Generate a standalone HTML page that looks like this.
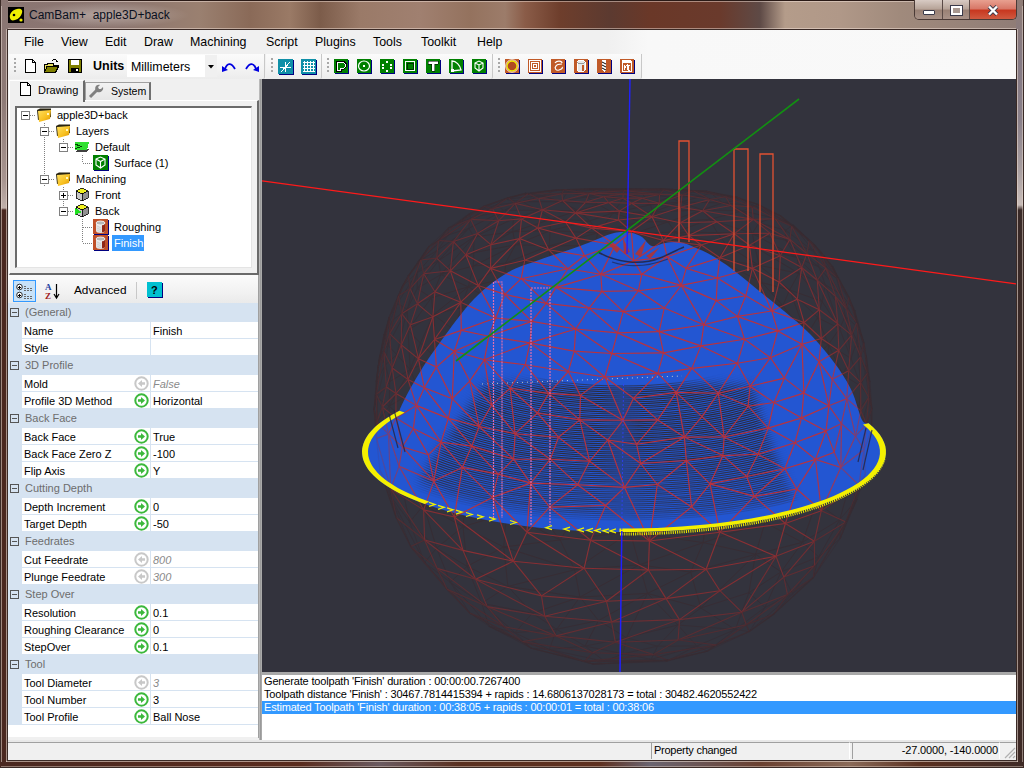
<!DOCTYPE html>
<html><head><meta charset="utf-8">
<style>
*{box-sizing:border-box}
html,body{margin:0;padding:0;width:1024px;height:768px;overflow:hidden;font-family:"Liberation Sans",sans-serif}
body{position:relative;background:#5a3528}
.a{position:absolute}
.t{position:absolute;white-space:pre;line-height:1}
svg.a{overflow:hidden}
</style></head><body>
<div class="a" style="left:0;top:0;width:1024px;height:30px;background:linear-gradient(90deg,#8a7572 0px,#8c7670 120px,#9a8070 200px,#8a6a58 250px,#9a7a66 290px,#7c5c4a 320px,#9a7a68 360px,#a08070 420px,#94725e 470px,#9c7c6a 505px,#8a5c48 525px,#6e3e2c 560px,#5c3a30 610px,#6a3828 650px,#6a3a2c 720px,#5e4a46 760px,#b49c8a 785px,#b09888 840px,#a08a7c 900px,#8f7c76 1024px)"></div>
<div class="a" style="left:0;top:0;width:1024px;height:1px;background:#2a1a16"></div>
<div class="a" style="left:8px;top:1px;width:1008px;height:1px;background:rgba(255,240,230,0.45)"></div>
<div class="a" style="left:8px;top:28px;width:1008px;height:1px;background:rgba(255,240,230,0.45)"></div>
<div class="a" style="left:20px;top:2px;width:170px;height:26px;background:radial-gradient(ellipse at center,rgba(255,250,245,0.35),rgba(255,250,245,0) 70%)"></div>
<div class="a" style="left:0;top:0;width:8px;height:768px;background:linear-gradient(180deg,#8a7572 0,#8e7a76 100px,#a89590 180px,#c0b0aa 208px,#4a2820 210px,#4a2820 768px)"></div>
<div class="a" style="left:0;top:0;width:1px;height:768px;background:#3a2a26"></div>
<div class="a" style="left:1016px;top:0;width:8px;height:768px;background:linear-gradient(180deg,#8f7c76 0,#857a84 60px,#8a808a 120px,#a89ea0 170px,#c8bcb8 205px,#3a2a28 210px,#3e2a26 768px)"></div>
<div class="a" style="left:1023px;top:0;width:1px;height:768px;background:#3a2a26"></div>
<div class="a" style="left:0;top:760px;width:1024px;height:8px;background:linear-gradient(90deg,#4a2820 0,#5a2c1e 300px,#6a5a60 380px,#5a3020 460px,#5e3020 600px,#6a6470 650px,#6a4030 760px,#8a6a58 850px,#5a3020 920px,#3e2a26 1024px)"></div>
<div class="a" style="left:0;top:767px;width:1024px;height:1px;background:#3a2a26"></div>
<div class="a" style="left:1px;top:6px;width:1px;height:756px;background:rgba(230,215,205,0.55)"></div>
<div class="a" style="left:6px;top:29px;width:1px;height:733px;background:rgba(230,215,205,0.6)"></div>
<div class="a" style="left:1017px;top:29px;width:1px;height:733px;background:rgba(230,215,205,0.6)"></div>
<div class="a" style="left:1022px;top:6px;width:1px;height:756px;background:rgba(230,215,205,0.5)"></div>
<div class="a" style="left:6px;top:761px;width:1012px;height:1px;background:rgba(230,215,205,0.6)"></div>
<div class="a" style="left:1px;top:766px;width:1022px;height:1px;background:rgba(230,215,205,0.45)"></div>
<svg class="a" style="left:8px;top:7px" width="16" height="16" viewBox="0 0 16 16"><rect width="16" height="16" fill="#000"/><path d="M2,11 C1,7 4,3 9,2 C13,1 15,3 14,6 C13,9 11,12 7,13 C4,14 2.5,13 2,11Z" fill="#f0f000"/><circle cx="6" cy="8" r="1.3" fill="#000"/><circle cx="13" cy="13" r="1.6" fill="#f0f000"/></svg>
<div class="t" style="left:29px;top:8.59px;font-size:12px;color:#0a1020;">CamBam+  apple3D+back</div>
<div class="a" style="left:914px;top:0;width:103px;height:20px;border:1px solid #4a3a36;border-top:none;border-radius:0 0 5px 5px;overflow:hidden"><div class="a" style="left:0;top:0;width:27px;height:19px;background:linear-gradient(180deg,#d8cbc4,#b8a59a 45%,#9a8276 55%,#a89288)"></div><div class="a" style="left:27px;top:0;width:1px;height:19px;background:#5a4a46"></div><div class="a" style="left:28px;top:0;width:26px;height:19px;background:linear-gradient(180deg,#d8cbc4,#b8a59a 45%,#9a8276 55%,#a89288)"></div><div class="a" style="left:54px;top:0;width:1px;height:19px;background:#5a4a46"></div><div class="a" style="left:55px;top:0;width:48px;height:19px;background:linear-gradient(180deg,#e8a090,#d87868 45%,#c83820 55%,#d05a40)"></div></div>
<div class="a" style="left:923px;top:10px;width:12px;height:5px;background:#fff;border:1px solid #3a3a4a;border-radius:1px"></div>
<div class="a" style="left:951px;top:6px;width:11px;height:9px;border:2px solid #fff;outline:1px solid #3a3a4a;background:#a89890"></div>
<svg class="a" style="left:986px;top:5px" width="14" height="11" viewBox="0 0 14 11"><path d="M3,1.5 L11,9.5 M11,1.5 L3,9.5" stroke="#3a3a4a" stroke-width="4"/><path d="M3,1.5 L11,9.5 M11,1.5 L3,9.5" stroke="#fff" stroke-width="2.4"/></svg>
<div class="a" style="left:7px;top:29px;width:1010px;height:732px;border:1px solid #3a2a26;background:#f0f0f0"></div>
<div class="a" style="left:8px;top:30px;width:1008px;height:23px;background:linear-gradient(90deg,#f0f0f0 0,#f0f0f0 600px,#f8f8f8 640px,#f9f9f9)"></div>
<div class="t" style="left:24px;top:35.54px;font-size:12.4px;color:#000;">File</div>
<div class="t" style="left:61px;top:35.54px;font-size:12.4px;color:#000;">View</div>
<div class="t" style="left:105px;top:35.54px;font-size:12.4px;color:#000;">Edit</div>
<div class="t" style="left:144px;top:35.54px;font-size:12.4px;color:#000;">Draw</div>
<div class="t" style="left:190px;top:35.54px;font-size:12.4px;color:#000;">Machining</div>
<div class="t" style="left:266px;top:35.54px;font-size:12.4px;color:#000;">Script</div>
<div class="t" style="left:315px;top:35.54px;font-size:12.4px;color:#000;">Plugins</div>
<div class="t" style="left:373px;top:35.54px;font-size:12.4px;color:#000;">Tools</div>
<div class="t" style="left:421px;top:35.54px;font-size:12.4px;color:#000;">Toolkit</div>
<div class="t" style="left:477px;top:35.54px;font-size:12.4px;color:#000;">Help</div>
<div class="a" style="left:8px;top:53px;width:1008px;height:26px;background:linear-gradient(90deg,#f0f0f0 0,#f0f0f0 600px,#f8f8f8 640px,#f9f9f9)"></div>
<div class="a" style="left:9px;top:54px;width:256px;height:25px;background:linear-gradient(180deg,#fbfbfb,#f3f3f3 60%,#ececec);border-right:1px solid #c8c8c8;border-radius:0 0 2px 0"></div>
<div class="a" style="left:14px;top:58px;width:2px;height:2px;background:#a8a8a8"></div>
<div class="a" style="left:14px;top:62px;width:2px;height:2px;background:#a8a8a8"></div>
<div class="a" style="left:14px;top:66px;width:2px;height:2px;background:#a8a8a8"></div>
<div class="a" style="left:14px;top:70px;width:2px;height:2px;background:#a8a8a8"></div>
<div class="a" style="left:266px;top:54px;width:56px;height:25px;background:linear-gradient(180deg,#fbfbfb,#f3f3f3 60%,#ececec);border-right:1px solid #c8c8c8;border-radius:0 0 2px 0"></div>
<div class="a" style="left:271px;top:58px;width:2px;height:2px;background:#a8a8a8"></div>
<div class="a" style="left:271px;top:62px;width:2px;height:2px;background:#a8a8a8"></div>
<div class="a" style="left:271px;top:66px;width:2px;height:2px;background:#a8a8a8"></div>
<div class="a" style="left:271px;top:70px;width:2px;height:2px;background:#a8a8a8"></div>
<div class="a" style="left:322px;top:54px;width:171px;height:25px;background:linear-gradient(180deg,#fbfbfb,#f3f3f3 60%,#ececec);border-right:1px solid #c8c8c8;border-radius:0 0 2px 0"></div>
<div class="a" style="left:327px;top:58px;width:2px;height:2px;background:#a8a8a8"></div>
<div class="a" style="left:327px;top:62px;width:2px;height:2px;background:#a8a8a8"></div>
<div class="a" style="left:327px;top:66px;width:2px;height:2px;background:#a8a8a8"></div>
<div class="a" style="left:327px;top:70px;width:2px;height:2px;background:#a8a8a8"></div>
<div class="a" style="left:493px;top:54px;width:149px;height:25px;background:linear-gradient(180deg,#fbfbfb,#f3f3f3 60%,#ececec);border-right:1px solid #c8c8c8;border-radius:0 0 2px 0"></div>
<div class="a" style="left:498px;top:58px;width:2px;height:2px;background:#a8a8a8"></div>
<div class="a" style="left:498px;top:62px;width:2px;height:2px;background:#a8a8a8"></div>
<div class="a" style="left:498px;top:66px;width:2px;height:2px;background:#a8a8a8"></div>
<div class="a" style="left:498px;top:70px;width:2px;height:2px;background:#a8a8a8"></div>
<svg class="a" style="left:23px;top:58px" width="16" height="16" viewBox="0 0 16 16" shape-rendering="crispEdges"><path d="M2.5,1.5 H9.5 L12.5,4.5 V14.5 H2.5 Z" fill="#fff" stroke="#000"/><path d="M9.5,1.5 V4.5 H12.5" fill="none" stroke="#000"/></svg>
<svg class="a" style="left:43px;top:58px" width="16" height="16" viewBox="0 0 16 16" shape-rendering="crispEdges"><path d="M1.5,6.5 H4 L5,5 H10 V7.5 H15 L12,14.5 H1.5 Z" fill="#e8e060" stroke="#000"/><path d="M1.5,14.5 L4,8.5 H15.5 L12.5,14.5 Z" fill="#808000" stroke="#000"/><path d="M9,3 C10,1 13,1 14,3" fill="none" stroke="#000"/><path d="M13,3 h2 l-1,2z" fill="#000"/></svg>
<svg class="a" style="left:67px;top:58px" width="16" height="16" viewBox="0 0 16 16" shape-rendering="crispEdges"><rect x="1.5" y="1.5" width="13" height="13" fill="#808000" stroke="#000"/><rect x="4" y="2" width="8" height="5" fill="#fff"/><rect x="4" y="10" width="8" height="4" fill="#000"/><rect x="9" y="11" width="2" height="2" fill="#fff"/></svg>
<div class="t" style="left:93px;top:60.03px;font-size:12.5px;color:#000;font-weight:bold">Units</div>
<div class="a" style="left:127px;top:55px;width:90px;height:22px;background:#fff"></div>
<div class="a" style="left:205px;top:55px;width:12px;height:22px;background:#f0f0f0"></div>
<svg class="a" style="left:208px;top:65px" width="6" height="4"><path d="M0,0 H6 L3,3.5Z" fill="#000"/></svg>
<div class="t" style="left:131px;top:60.54px;font-size:12.4px;color:#000;">Millimeters</div>
<svg class="a" style="left:221px;top:58px" width="16" height="16" viewBox="0 0 16 16" shape-rendering="crispEdges"><path d="M4,11 C6,5 10,4 14,11" fill="none" stroke="#0000e0" stroke-width="1.8" shape-rendering="auto"/><path d="M1,8 L7,12 L1,14 Z" fill="#0000e0" shape-rendering="auto"/></svg>
<svg class="a" style="left:244px;top:58px" width="16" height="16" viewBox="0 0 16 16" shape-rendering="crispEdges"><path d="M12,11 C10,5 6,4 2,11" fill="none" stroke="#0000e0" stroke-width="1.8" shape-rendering="auto"/><path d="M15,8 L9,12 L15,14 Z" fill="#0000e0" shape-rendering="auto"/></svg>
<svg class="a" style="left:278px;top:59px" width="16" height="16" viewBox="0 0 16 16" shape-rendering="crispEdges"><rect x="1" y="1" width="15" height="15" fill="#000080"/><rect x="0" y="0" width="15" height="15" fill="#1090a8"/><path d="M7.5,3 V13 M2,8.5 H13 M3,13 L12,3" stroke="#fff" fill="none"/></svg>
<svg class="a" style="left:301px;top:59px" width="16" height="16" viewBox="0 0 16 16" shape-rendering="crispEdges"><rect x="1" y="1" width="15" height="15" fill="#000080"/><rect x="0" y="0" width="15" height="15" fill="#1090a8"/><path d="M3.5,2 V13 M6.5,2 V13 M9.5,2 V13 M12.5,2 V13 M2,3.5 H14 M2,6.5 H14 M2,9.5 H14 M2,12.5 H14" stroke="#fff" fill="none"/></svg>
<svg class="a" style="left:334px;top:59px" width="16" height="16" viewBox="0 0 16 16" shape-rendering="crispEdges"><rect x="1" y="1" width="14" height="14" fill="#000080"/><rect x="0" y="0" width="14" height="14" fill="#008000"/><path d="M2.5,2.5 H10 L12,4.5 V8 L10,10 H7 V12.5 H2.5 Z" fill="#fff" stroke="#000"/><path d="M4,4 H9.5 L10.5,5 V7.5 L9.5,8.5 H5.5 V11 H4 Z" fill="#008000"/></svg>
<svg class="a" style="left:357px;top:59px" width="16" height="16" viewBox="0 0 16 16" shape-rendering="crispEdges"><rect x="1" y="1" width="14" height="14" fill="#000080"/><rect x="0" y="0" width="14" height="14" fill="#008000"/><ellipse cx="7" cy="7" rx="5.5" ry="5" fill="none" stroke="#fff" stroke-width="1.2" shape-rendering="auto"/><rect x="6" y="6" width="2" height="2" fill="#fff"/></svg>
<svg class="a" style="left:380px;top:59px" width="16" height="16" viewBox="0 0 16 16" shape-rendering="crispEdges"><rect x="1" y="1" width="14" height="14" fill="#000080"/><rect x="0" y="0" width="14" height="14" fill="#008000"/><g fill="#fff"><rect x="6" y="2" width="2" height="2"/><rect x="2" y="5" width="2" height="2"/><rect x="10" y="5" width="2" height="2"/><rect x="2" y="8" width="2" height="2"/><rect x="10" y="8" width="2" height="2"/><rect x="6" y="11" width="2" height="2"/></g></svg>
<svg class="a" style="left:403px;top:59px" width="16" height="16" viewBox="0 0 16 16" shape-rendering="crispEdges"><rect x="1" y="1" width="14" height="14" fill="#000080"/><rect x="0" y="0" width="14" height="14" fill="#008000"/><rect x="2.5" y="2.5" width="9" height="9" fill="none" stroke="#fff" stroke-width="1.5"/><rect x="4" y="4" width="6" height="6" fill="none" stroke="#000" stroke-width="0.6"/></svg>
<svg class="a" style="left:426px;top:59px" width="16" height="16" viewBox="0 0 16 16" shape-rendering="crispEdges"><rect x="1" y="1" width="14" height="14" fill="#000080"/><rect x="0" y="0" width="14" height="14" fill="#008000"/><path d="M2,2 H12 V5 H8.5 V12 H5.5 V5 H2 Z" fill="#fff" stroke="#000" stroke-width="0.5"/></svg>
<svg class="a" style="left:449px;top:59px" width="16" height="16" viewBox="0 0 16 16" shape-rendering="crispEdges"><rect x="1" y="1" width="14" height="14" fill="#000080"/><rect x="0" y="0" width="14" height="14" fill="#008000"/><path d="M3,12 V2 C7,2 11,6 12,11 Z" fill="none" stroke="#fff" stroke-width="1.3" shape-rendering="auto"/><rect x="2" y="10" width="3" height="3" fill="#fff"/></svg>
<svg class="a" style="left:472px;top:59px" width="16" height="16" viewBox="0 0 16 16" shape-rendering="crispEdges"><rect x="1" y="1" width="14" height="14" fill="#000080"/><rect x="0" y="0" width="14" height="14" fill="#008000"/><path d="M3,4 L7,2 L11,4 V9 L7,12 L3,9 Z M3,4 L7,6 L11,4 M7,6 V12" fill="none" stroke="#fff" stroke-width="1.1" shape-rendering="auto"/></svg>
<svg class="a" style="left:505px;top:59px" width="16" height="16" viewBox="0 0 16 16" shape-rendering="crispEdges"><rect x="1" y="1" width="14" height="14" fill="#000080"/><rect x="0" y="0" width="14" height="14" fill="#c05a28"/><circle cx="7" cy="7" r="5" fill="#b04a20" stroke="#f0f000" stroke-width="1.3" shape-rendering="auto"/><circle cx="7" cy="7" r="6.3" fill="none" stroke="#fff" stroke-width="0.8" shape-rendering="auto"/></svg>
<svg class="a" style="left:528px;top:59px" width="16" height="16" viewBox="0 0 16 16" shape-rendering="crispEdges"><rect x="1" y="1" width="14" height="14" fill="#000080"/><rect x="0" y="0" width="14" height="14" fill="#c05a28"/><rect x="1.5" y="1.5" width="11" height="11" fill="none" stroke="#fff"/><rect x="3.5" y="3.5" width="7" height="7" fill="none" stroke="#fff"/><rect x="5.5" y="5.5" width="3" height="3" fill="none" stroke="#fff"/></svg>
<svg class="a" style="left:551px;top:59px" width="16" height="16" viewBox="0 0 16 16" shape-rendering="crispEdges"><rect x="1" y="1" width="14" height="14" fill="#000080"/><rect x="0" y="0" width="14" height="14" fill="#c05a28"/><path d="M4,4 C6,1 11,2 11,4 M11,5 C9,5 6,5 5,7 C3,9 5,12 8,11 C11,10 12,9 11,8" fill="none" stroke="#fff" stroke-width="1.2" shape-rendering="auto"/></svg>
<svg class="a" style="left:574px;top:59px" width="16" height="16" viewBox="0 0 16 16" shape-rendering="crispEdges"><rect x="1" y="1" width="14" height="14" fill="#000080"/><rect x="0" y="0" width="14" height="14" fill="#c05a28"/><path d="M3,3 C3,1 11,1 11,3 V11 C11,13 3,13 3,11 Z" fill="#e8e8e8" stroke="#fff"/><path d="M3,3 C3,5 11,5 11,3" fill="none" stroke="#999"/><path d="M9,6 V12" stroke="#c05a28" stroke-width="2"/></svg>
<svg class="a" style="left:597px;top:59px" width="16" height="16" viewBox="0 0 16 16" shape-rendering="crispEdges"><rect x="1" y="1" width="14" height="14" fill="#000080"/><rect x="0" y="0" width="14" height="14" fill="#c05a28"/><path d="M5,1 H9 V11 L7,13 L5,11 Z" fill="#fff"/><path d="M5,3 L9,5 M5,6 L9,8 M5,9 L9,11" stroke="#000" stroke-width="1" shape-rendering="auto"/></svg>
<svg class="a" style="left:620px;top:59px" width="16" height="16" viewBox="0 0 16 16" shape-rendering="crispEdges"><rect x="1" y="1" width="14" height="14" fill="#000080"/><rect x="0" y="0" width="14" height="14" fill="#c05a28"/><path d="M2,1 H10 L12,3 V13 H2 Z" fill="#fff"/><rect x="3" y="4" width="8" height="8" fill="#c05a28"/><path d="M4,11 V6 L5.5,8 L7,6 V11 M10,6 H8.5 V11 H10" stroke="#fff" fill="none"/></svg>
<div class="a" style="left:85px;top:82px;width:66px;height:19px;background:linear-gradient(180deg,#f2f2f2,#e6e6e6);border:1px solid #a0a0a0;border-bottom:none;border-right:2px solid #707070"></div>
<div class="a" style="left:9px;top:100px;width:250px;height:175px;background:#f0f0f0;border-top:1px solid #fff;border-left:1px solid #fff;border-right:2px solid #6a6a6a;border-bottom:2px solid #6a6a6a"></div>
<div class="a" style="left:9px;top:80px;width:76px;height:22px;background:#f0f0f0;border-top:1px solid #fff;border-left:1px solid #fff;border-right:2px solid #6a6a6a"></div>
<svg class="a" style="left:18px;top:81px" width="16" height="16" viewBox="0 0 16 16" shape-rendering="crispEdges"><path d="M2.5,1.5 H9.5 L12.5,4.5 V14.5 H2.5 Z" fill="#fff" stroke="#000"/><path d="M9.5,1.5 V4.5 H12.5" fill="none" stroke="#000"/></svg>
<div class="t" style="left:38px;top:84.51px;font-size:11px;color:#000;">Drawing</div>
<svg class="a" style="left:88px;top:83px" width="16" height="16" viewBox="0 0 16 16" shape-rendering="crispEdges"><path d="M2,14 L9,7" stroke="#808080" stroke-width="3" shape-rendering="auto"/><path d="M8,8 C6,5 8,1 12,2 L10,4 L11,6 L13,6 L15,4 C16,8 12,10 9,9 Z" fill="#808080" shape-rendering="auto"/></svg>
<div class="t" style="left:111px;top:86.35px;font-size:10.6px;color:#000;">System</div>
<div class="a" style="left:15px;top:106px;width:237px;height:162px;background:#fff;border-top:2px solid #6a6a6a;border-left:2px solid #6a6a6a;border-right:1px solid #e4e4e4;border-bottom:1px solid #e4e4e4"></div>
<div class="a" style="left:44px;top:123px;width:1px;height:64px;background:repeating-linear-gradient(180deg,#808080 0 1px,transparent 1px 2px)"></div>
<div class="a" style="left:63px;top:139px;width:1px;height:5px;background:repeating-linear-gradient(180deg,#808080 0 1px,transparent 1px 2px)"></div>
<div class="a" style="left:82px;top:155px;width:1px;height:8px;background:repeating-linear-gradient(180deg,#808080 0 1px,transparent 1px 2px)"></div>
<div class="a" style="left:63px;top:187px;width:1px;height:24px;background:repeating-linear-gradient(180deg,#808080 0 1px,transparent 1px 2px)"></div>
<div class="a" style="left:82px;top:219px;width:1px;height:24px;background:repeating-linear-gradient(180deg,#808080 0 1px,transparent 1px 2px)"></div>
<svg class="a" style="left:21px;top:111px" width="9" height="9" viewBox="0 0 9 9" shape-rendering="crispEdges"><rect x="0.5" y="0.5" width="8" height="8" fill="#fff" stroke="#808080"/><path d="M2,4.5 H7" stroke="#000"/></svg>
<div class="a" style="left:30px;top:115px;width:6px;height:1px;background:repeating-linear-gradient(90deg,#808080 0 1px,transparent 1px 2px)"></div>
<svg class="a" style="left:36px;top:107px" width="16" height="16" viewBox="0 0 16 16" shape-rendering="crispEdges"><defs><linearGradient id="fg0" x1="0" y1="0" x2="1" y2="1"><stop offset="0" stop-color="#ffe060"/><stop offset="0.6" stop-color="#f8c020"/><stop offset="1" stop-color="#d89000"/></linearGradient></defs><path d="M1,3 L4,1.5 L15,1.5 L15,10 L2,13 Z" fill="#2a2410" shape-rendering="auto"/><path d="M2,4 L15,3 L14,12 L3,15 Z" fill="url(#fg0)" shape-rendering="auto"/><circle cx="12" cy="7" r="1" fill="#fff8c0"/></svg>
<div class="t" style="left:57px;top:109.71px;font-size:11px;color:#000;">apple3D+back</div>
<svg class="a" style="left:40px;top:127px" width="9" height="9" viewBox="0 0 9 9" shape-rendering="crispEdges"><rect x="0.5" y="0.5" width="8" height="8" fill="#fff" stroke="#808080"/><path d="M2,4.5 H7" stroke="#000"/></svg>
<div class="a" style="left:49px;top:131px;width:6px;height:1px;background:repeating-linear-gradient(90deg,#808080 0 1px,transparent 1px 2px)"></div>
<svg class="a" style="left:55px;top:123px" width="16" height="16" viewBox="0 0 16 16" shape-rendering="crispEdges"><defs><linearGradient id="fg1" x1="0" y1="0" x2="1" y2="1"><stop offset="0" stop-color="#ffe060"/><stop offset="0.6" stop-color="#f8c020"/><stop offset="1" stop-color="#d89000"/></linearGradient></defs><path d="M1,3 L4,1.5 L15,1.5 L15,10 L2,13 Z" fill="#2a2410" shape-rendering="auto"/><path d="M2,4 L15,3 L14,12 L3,15 Z" fill="url(#fg1)" shape-rendering="auto"/><circle cx="12" cy="7" r="1" fill="#fff8c0"/></svg>
<div class="t" style="left:76px;top:125.71px;font-size:11px;color:#000;">Layers</div>
<svg class="a" style="left:59px;top:143px" width="9" height="9" viewBox="0 0 9 9" shape-rendering="crispEdges"><rect x="0.5" y="0.5" width="8" height="8" fill="#fff" stroke="#808080"/><path d="M2,4.5 H7" stroke="#000"/></svg>
<div class="a" style="left:68px;top:147px;width:6px;height:1px;background:repeating-linear-gradient(90deg,#808080 0 1px,transparent 1px 2px)"></div>
<svg class="a" style="left:74px;top:139px" width="16" height="16" viewBox="0 0 16 16" shape-rendering="crispEdges"><path d="M1,13 L4,10 H15 L12,13 Z" fill="#404040"/><path d="M1,3 H15 L13,11 H1 Z" fill="#30e030"/><path d="M1,5 L7,7.5 L1,10" fill="none" stroke="#004000"/></svg>
<div class="t" style="left:95px;top:141.71px;font-size:11px;color:#000;">Default</div>
<div class="a" style="left:83px;top:163px;width:10px;height:1px;background:repeating-linear-gradient(90deg,#808080 0 1px,transparent 1px 2px)"></div>
<svg class="a" style="left:93px;top:155px" width="16" height="16" viewBox="0 0 16 16" shape-rendering="crispEdges"><rect x="1" y="1" width="15" height="15" fill="#000080"/><rect x="0" y="0" width="15" height="15" fill="#008000"/><path d="M3,4 L7.5,2 L12,4 V10 L7.5,13 L3,10 Z M3,4 L7.5,6.5 L12,4 M7.5,6.5 V13" fill="none" stroke="#fff" stroke-width="1.1" shape-rendering="auto"/></svg>
<div class="t" style="left:114px;top:157.71px;font-size:11px;color:#000;">Surface (1)</div>
<svg class="a" style="left:40px;top:175px" width="9" height="9" viewBox="0 0 9 9" shape-rendering="crispEdges"><rect x="0.5" y="0.5" width="8" height="8" fill="#fff" stroke="#808080"/><path d="M2,4.5 H7" stroke="#000"/></svg>
<div class="a" style="left:49px;top:179px;width:6px;height:1px;background:repeating-linear-gradient(90deg,#808080 0 1px,transparent 1px 2px)"></div>
<svg class="a" style="left:55px;top:171px" width="16" height="16" viewBox="0 0 16 16" shape-rendering="crispEdges"><defs><linearGradient id="fg4" x1="0" y1="0" x2="1" y2="1"><stop offset="0" stop-color="#ffe060"/><stop offset="0.6" stop-color="#f8c020"/><stop offset="1" stop-color="#d89000"/></linearGradient></defs><path d="M1,3 L4,1.5 L15,1.5 L15,10 L2,13 Z" fill="#2a2410" shape-rendering="auto"/><path d="M2,4 L15,3 L14,12 L3,15 Z" fill="url(#fg4)" shape-rendering="auto"/><circle cx="12" cy="7" r="1" fill="#fff8c0"/></svg>
<div class="t" style="left:76px;top:173.71px;font-size:11px;color:#000;">Machining</div>
<svg class="a" style="left:59px;top:191px" width="9" height="9" viewBox="0 0 9 9" shape-rendering="crispEdges"><rect x="0.5" y="0.5" width="8" height="8" fill="#fff" stroke="#808080"/><path d="M2,4.5 H7" stroke="#000"/><path d="M4.5,2 V7" stroke="#000"/></svg>
<div class="a" style="left:68px;top:195px;width:6px;height:1px;background:repeating-linear-gradient(90deg,#808080 0 1px,transparent 1px 2px)"></div>
<svg class="a" style="left:74px;top:187px" width="16" height="16" viewBox="0 0 16 16" shape-rendering="crispEdges"><path d="M2,4 L8,1 L14,4 L8,7 Z" fill="#f0f020" stroke="#000" stroke-width="0.8"/><path d="M2,4 L8,7 V14 L2,11 Z" fill="#c8c8c8" stroke="#000" stroke-width="0.8"/><path d="M8,7 L14,4 V11 L8,14 Z" fill="#909090" stroke="#000" stroke-width="0.8"/></svg>
<div class="t" style="left:95px;top:189.71px;font-size:11px;color:#000;">Front</div>
<svg class="a" style="left:59px;top:207px" width="9" height="9" viewBox="0 0 9 9" shape-rendering="crispEdges"><rect x="0.5" y="0.5" width="8" height="8" fill="#fff" stroke="#808080"/><path d="M2,4.5 H7" stroke="#000"/></svg>
<div class="a" style="left:68px;top:211px;width:6px;height:1px;background:repeating-linear-gradient(90deg,#808080 0 1px,transparent 1px 2px)"></div>
<svg class="a" style="left:74px;top:203px" width="16" height="16" viewBox="0 0 16 16" shape-rendering="crispEdges"><path d="M2,4 L8,1 L14,4 L8,7 Z" fill="#f0f020" stroke="#000" stroke-width="0.8"/><path d="M2,4 L8,7 V14 L2,11 Z" fill="#c8c8c8" stroke="#000" stroke-width="0.8"/><path d="M8,7 L14,4 V11 L8,14 Z" fill="#909090" stroke="#000" stroke-width="0.8"/><path d="M1,5 L8,9 L1,12 Z" fill="#20e020"/></svg>
<div class="t" style="left:95px;top:205.71px;font-size:11px;color:#000;">Back</div>
<div class="a" style="left:83px;top:227px;width:10px;height:1px;background:repeating-linear-gradient(90deg,#808080 0 1px,transparent 1px 2px)"></div>
<svg class="a" style="left:93px;top:219px" width="16" height="16" viewBox="0 0 16 16" shape-rendering="crispEdges"><rect x="1" y="1" width="15" height="15" fill="#000080"/><rect x="0" y="0" width="15" height="15" fill="#c05028"/><g shape-rendering="auto"><path d="M3,4 V12 C3,14.5 12,14.5 12,12 V4 Z" fill="#e4e4e4"/><path d="M9,5 V13.3 C11,13 12,12.6 12,12 V4 Z" fill="#902818"/><ellipse cx="7.5" cy="4" rx="4.5" ry="2" fill="#b8b8b8" stroke="#fff" stroke-width="0.8"/><path d="M4,7 L8,9 M4,9 L8,11 M4,11 L8,13" stroke="#c8c8c8" stroke-width="0.7"/></g></svg>
<div class="t" style="left:114px;top:221.71px;font-size:11px;color:#000;">Roughing</div>
<div class="a" style="left:83px;top:243px;width:10px;height:1px;background:repeating-linear-gradient(90deg,#808080 0 1px,transparent 1px 2px)"></div>
<svg class="a" style="left:93px;top:235px" width="16" height="16" viewBox="0 0 16 16" shape-rendering="crispEdges"><rect x="1" y="1" width="15" height="15" fill="#000080"/><rect x="0" y="0" width="15" height="15" fill="#c05028"/><g shape-rendering="auto"><path d="M3,4 V12 C3,14.5 12,14.5 12,12 V4 Z" fill="#e4e4e4"/><path d="M9,5 V13.3 C11,13 12,12.6 12,12 V4 Z" fill="#902818"/><ellipse cx="7.5" cy="4" rx="4.5" ry="2" fill="#b8b8b8" stroke="#fff" stroke-width="0.8"/><path d="M4,7 L8,9 M4,9 L8,11 M4,11 L8,13" stroke="#c8c8c8" stroke-width="0.7"/></g></svg>
<div class="a" style="left:112px;top:235px;width:32px;height:16px;background:#3399ff"></div>
<div class="t" style="left:114px;top:237.71px;font-size:11px;color:#fff;">Finish</div>
<div class="a" style="left:8px;top:275px;width:251px;height:28px;background:linear-gradient(180deg,#fbfbfb,#f2f2f2 60%,#eaeaea)"></div>
<div class="a" style="left:13px;top:280px;width:23px;height:22px;background:#c8e2f8;border:1px solid #3399ff"></div>
<svg class="a" style="left:16px;top:283px" width="17" height="17" viewBox="0 0 17 17" shape-rendering="crispEdges"><g shape-rendering="auto"><circle cx="3.5" cy="4" r="2.8" fill="#fff" stroke="#000" stroke-width="0.8"/><circle cx="3.5" cy="12" r="2.8" fill="#fff" stroke="#000" stroke-width="0.8"/></g><path d="M2,4 H5 M3.5,2.5 V5.5 M2,12 H5 M3.5,10.5 V13.5" stroke="#000"/><path d="M8,3 H11 M8,5 H16 M8,7 H16 M8,11 H11 M8,13 H16 M8,15 H16" stroke="#6a6a6a" stroke-dasharray="2,1"/></svg>
<svg class="a" style="left:44px;top:282px" width="17" height="19" viewBox="0 0 17 19" shape-rendering="crispEdges"><text x="1" y="8" font-family="Liberation Serif" font-size="9" font-weight="bold" fill="#2040a0">A</text><text x="1" y="17" font-family="Liberation Serif" font-size="9" font-weight="bold" fill="#a02020">Z</text><path d="M12.5,2 V15 M10,12 L12.5,16 L15,12" fill="none" stroke="#000" stroke-width="1.2" shape-rendering="auto"/></svg>
<div class="t" style="left:74px;top:285.11px;font-size:11.8px;color:#000;">Advanced</div>
<div class="a" style="left:136px;top:282px;width:1px;height:17px;background:#c8c8c8"></div>
<svg class="a" style="left:147px;top:282px" width="17" height="17" viewBox="0 0 17 17" shape-rendering="crispEdges"><rect x="1" y="1" width="15" height="15" fill="#000080"/><rect x="0" y="0" width="15" height="15" fill="#00c0d0"/><text x="4" y="12" font-family="Liberation Sans" font-size="11" font-weight="bold" fill="#000">?</text></svg>
<div class="a" style="left:8px;top:303px;width:251px;height:435px;background:#fff"></div>
<div class="a" style="left:8px;top:303px;width:14px;height:422px;background:#d6e3f1"></div>
<div class="a" style="left:8px;top:303px;width:251px;height:19px;background:#d6e3f1"></div>
<svg class="a" style="left:10px;top:308px" width="9" height="9" viewBox="0 0 9 9" shape-rendering="crispEdges"><rect x="0.5" y="0.5" width="8" height="8" fill="none" stroke="#555"/><path d="M2,4.5 H7" stroke="#555"/></svg>
<div class="t" style="left:25px;top:306.51px;font-size:11px;color:#6d6d6d;">(General)</div>
<div class="a" style="left:22px;top:338px;width:237px;height:1px;background:#d6e3f1"></div>
<div class="a" style="left:150px;top:322px;width:1px;height:16px;background:#d6e3f1"></div>
<div class="t" style="left:24px;top:325.51px;font-size:11px;color:#000;">Name</div>
<div class="t" style="left:153px;top:325.51px;font-size:11px;color:#000;">Finish</div>
<div class="a" style="left:22px;top:355px;width:237px;height:1px;background:#d6e3f1"></div>
<div class="a" style="left:150px;top:339px;width:1px;height:16px;background:#d6e3f1"></div>
<div class="t" style="left:24px;top:342.51px;font-size:11px;color:#000;">Style</div>
<div class="t" style="left:153px;top:342.51px;font-size:11px;color:#000;"></div>
<div class="a" style="left:8px;top:356px;width:251px;height:19px;background:#d6e3f1"></div>
<svg class="a" style="left:10px;top:361px" width="9" height="9" viewBox="0 0 9 9" shape-rendering="crispEdges"><rect x="0.5" y="0.5" width="8" height="8" fill="none" stroke="#555"/><path d="M2,4.5 H7" stroke="#555"/></svg>
<div class="t" style="left:25px;top:359.51px;font-size:11px;color:#6d6d6d;">3D Profile</div>
<div class="a" style="left:22px;top:391px;width:237px;height:1px;background:#d6e3f1"></div>
<div class="a" style="left:150px;top:375px;width:1px;height:16px;background:#d6e3f1"></div>
<div class="t" style="left:24px;top:378.51px;font-size:11px;color:#000;">Mold</div>
<svg class="a" style="left:134px;top:376px" width="15" height="15" viewBox="0 0 15 15" shape-rendering="crispEdges"><g shape-rendering="auto"><circle cx="7.5" cy="7.5" r="6.2" fill="#fff" stroke="#c8c8c8" stroke-width="2"/><path d="M11,6.3 H8 V4 L4,7.5 L8,11 V8.7 H11 Z" fill="#c8c8c8"/></g></svg>
<div class="t" style="left:153px;top:378.51px;font-size:11px;color:#8a8a8a;font-style:italic">False</div>
<div class="a" style="left:22px;top:408px;width:237px;height:1px;background:#d6e3f1"></div>
<div class="a" style="left:150px;top:392px;width:1px;height:16px;background:#d6e3f1"></div>
<div class="t" style="left:24px;top:395.51px;font-size:11px;color:#000;">Profile 3D Method</div>
<svg class="a" style="left:134px;top:393px" width="15" height="15" viewBox="0 0 15 15" shape-rendering="crispEdges"><g shape-rendering="auto"><circle cx="7.5" cy="7.5" r="6.2" fill="#fff" stroke="#3cb83c" stroke-width="2"/><path d="M4,6.3 H7 V4 L11,7.5 L7,11 V8.7 H4 Z" fill="#3cb83c"/></g></svg>
<div class="t" style="left:153px;top:395.51px;font-size:11px;color:#000;">Horizontal</div>
<div class="a" style="left:8px;top:409px;width:251px;height:19px;background:#d6e3f1"></div>
<svg class="a" style="left:10px;top:414px" width="9" height="9" viewBox="0 0 9 9" shape-rendering="crispEdges"><rect x="0.5" y="0.5" width="8" height="8" fill="none" stroke="#555"/><path d="M2,4.5 H7" stroke="#555"/></svg>
<div class="t" style="left:25px;top:412.51px;font-size:11px;color:#6d6d6d;">Back Face</div>
<div class="a" style="left:22px;top:444px;width:237px;height:1px;background:#d6e3f1"></div>
<div class="a" style="left:150px;top:428px;width:1px;height:16px;background:#d6e3f1"></div>
<div class="t" style="left:24px;top:431.51px;font-size:11px;color:#000;">Back Face</div>
<svg class="a" style="left:134px;top:429px" width="15" height="15" viewBox="0 0 15 15" shape-rendering="crispEdges"><g shape-rendering="auto"><circle cx="7.5" cy="7.5" r="6.2" fill="#fff" stroke="#3cb83c" stroke-width="2"/><path d="M4,6.3 H7 V4 L11,7.5 L7,11 V8.7 H4 Z" fill="#3cb83c"/></g></svg>
<div class="t" style="left:153px;top:431.51px;font-size:11px;color:#000;">True</div>
<div class="a" style="left:22px;top:461px;width:237px;height:1px;background:#d6e3f1"></div>
<div class="a" style="left:150px;top:445px;width:1px;height:16px;background:#d6e3f1"></div>
<div class="t" style="left:24px;top:448.51px;font-size:11px;color:#000;">Back Face Zero Z</div>
<svg class="a" style="left:134px;top:446px" width="15" height="15" viewBox="0 0 15 15" shape-rendering="crispEdges"><g shape-rendering="auto"><circle cx="7.5" cy="7.5" r="6.2" fill="#fff" stroke="#3cb83c" stroke-width="2"/><path d="M4,6.3 H7 V4 L11,7.5 L7,11 V8.7 H4 Z" fill="#3cb83c"/></g></svg>
<div class="t" style="left:153px;top:448.51px;font-size:11px;color:#000;">-100</div>
<div class="a" style="left:22px;top:478px;width:237px;height:1px;background:#d6e3f1"></div>
<div class="a" style="left:150px;top:462px;width:1px;height:16px;background:#d6e3f1"></div>
<div class="t" style="left:24px;top:465.51px;font-size:11px;color:#000;">Flip Axis</div>
<svg class="a" style="left:134px;top:463px" width="15" height="15" viewBox="0 0 15 15" shape-rendering="crispEdges"><g shape-rendering="auto"><circle cx="7.5" cy="7.5" r="6.2" fill="#fff" stroke="#3cb83c" stroke-width="2"/><path d="M4,6.3 H7 V4 L11,7.5 L7,11 V8.7 H4 Z" fill="#3cb83c"/></g></svg>
<div class="t" style="left:153px;top:465.51px;font-size:11px;color:#000;">Y</div>
<div class="a" style="left:8px;top:479px;width:251px;height:19px;background:#d6e3f1"></div>
<svg class="a" style="left:10px;top:484px" width="9" height="9" viewBox="0 0 9 9" shape-rendering="crispEdges"><rect x="0.5" y="0.5" width="8" height="8" fill="none" stroke="#555"/><path d="M2,4.5 H7" stroke="#555"/></svg>
<div class="t" style="left:25px;top:482.51px;font-size:11px;color:#6d6d6d;">Cutting Depth</div>
<div class="a" style="left:22px;top:514px;width:237px;height:1px;background:#d6e3f1"></div>
<div class="a" style="left:150px;top:498px;width:1px;height:16px;background:#d6e3f1"></div>
<div class="t" style="left:24px;top:501.51px;font-size:11px;color:#000;">Depth Increment</div>
<svg class="a" style="left:134px;top:499px" width="15" height="15" viewBox="0 0 15 15" shape-rendering="crispEdges"><g shape-rendering="auto"><circle cx="7.5" cy="7.5" r="6.2" fill="#fff" stroke="#3cb83c" stroke-width="2"/><path d="M4,6.3 H7 V4 L11,7.5 L7,11 V8.7 H4 Z" fill="#3cb83c"/></g></svg>
<div class="t" style="left:153px;top:501.51px;font-size:11px;color:#000;">0</div>
<div class="a" style="left:22px;top:531px;width:237px;height:1px;background:#d6e3f1"></div>
<div class="a" style="left:150px;top:515px;width:1px;height:16px;background:#d6e3f1"></div>
<div class="t" style="left:24px;top:518.51px;font-size:11px;color:#000;">Target Depth</div>
<svg class="a" style="left:134px;top:516px" width="15" height="15" viewBox="0 0 15 15" shape-rendering="crispEdges"><g shape-rendering="auto"><circle cx="7.5" cy="7.5" r="6.2" fill="#fff" stroke="#3cb83c" stroke-width="2"/><path d="M4,6.3 H7 V4 L11,7.5 L7,11 V8.7 H4 Z" fill="#3cb83c"/></g></svg>
<div class="t" style="left:153px;top:518.51px;font-size:11px;color:#000;">-50</div>
<div class="a" style="left:8px;top:532px;width:251px;height:19px;background:#d6e3f1"></div>
<svg class="a" style="left:10px;top:537px" width="9" height="9" viewBox="0 0 9 9" shape-rendering="crispEdges"><rect x="0.5" y="0.5" width="8" height="8" fill="none" stroke="#555"/><path d="M2,4.5 H7" stroke="#555"/></svg>
<div class="t" style="left:25px;top:535.51px;font-size:11px;color:#6d6d6d;">Feedrates</div>
<div class="a" style="left:22px;top:567px;width:237px;height:1px;background:#d6e3f1"></div>
<div class="a" style="left:150px;top:551px;width:1px;height:16px;background:#d6e3f1"></div>
<div class="t" style="left:24px;top:554.51px;font-size:11px;color:#000;">Cut Feedrate</div>
<svg class="a" style="left:134px;top:552px" width="15" height="15" viewBox="0 0 15 15" shape-rendering="crispEdges"><g shape-rendering="auto"><circle cx="7.5" cy="7.5" r="6.2" fill="#fff" stroke="#c8c8c8" stroke-width="2"/><path d="M11,6.3 H8 V4 L4,7.5 L8,11 V8.7 H11 Z" fill="#c8c8c8"/></g></svg>
<div class="t" style="left:153px;top:554.51px;font-size:11px;color:#8a8a8a;font-style:italic">800</div>
<div class="a" style="left:22px;top:584px;width:237px;height:1px;background:#d6e3f1"></div>
<div class="a" style="left:150px;top:568px;width:1px;height:16px;background:#d6e3f1"></div>
<div class="t" style="left:24px;top:571.51px;font-size:11px;color:#000;">Plunge Feedrate</div>
<svg class="a" style="left:134px;top:569px" width="15" height="15" viewBox="0 0 15 15" shape-rendering="crispEdges"><g shape-rendering="auto"><circle cx="7.5" cy="7.5" r="6.2" fill="#fff" stroke="#c8c8c8" stroke-width="2"/><path d="M11,6.3 H8 V4 L4,7.5 L8,11 V8.7 H11 Z" fill="#c8c8c8"/></g></svg>
<div class="t" style="left:153px;top:571.51px;font-size:11px;color:#8a8a8a;font-style:italic">300</div>
<div class="a" style="left:8px;top:585px;width:251px;height:19px;background:#d6e3f1"></div>
<svg class="a" style="left:10px;top:590px" width="9" height="9" viewBox="0 0 9 9" shape-rendering="crispEdges"><rect x="0.5" y="0.5" width="8" height="8" fill="none" stroke="#555"/><path d="M2,4.5 H7" stroke="#555"/></svg>
<div class="t" style="left:25px;top:588.51px;font-size:11px;color:#6d6d6d;">Step Over</div>
<div class="a" style="left:22px;top:620px;width:237px;height:1px;background:#d6e3f1"></div>
<div class="a" style="left:150px;top:604px;width:1px;height:16px;background:#d6e3f1"></div>
<div class="t" style="left:24px;top:607.51px;font-size:11px;color:#000;">Resolution</div>
<svg class="a" style="left:134px;top:605px" width="15" height="15" viewBox="0 0 15 15" shape-rendering="crispEdges"><g shape-rendering="auto"><circle cx="7.5" cy="7.5" r="6.2" fill="#fff" stroke="#3cb83c" stroke-width="2"/><path d="M4,6.3 H7 V4 L11,7.5 L7,11 V8.7 H4 Z" fill="#3cb83c"/></g></svg>
<div class="t" style="left:153px;top:607.51px;font-size:11px;color:#000;">0.1</div>
<div class="a" style="left:22px;top:637px;width:237px;height:1px;background:#d6e3f1"></div>
<div class="a" style="left:150px;top:621px;width:1px;height:16px;background:#d6e3f1"></div>
<div class="t" style="left:24px;top:624.51px;font-size:11px;color:#000;">Roughing Clearance</div>
<svg class="a" style="left:134px;top:622px" width="15" height="15" viewBox="0 0 15 15" shape-rendering="crispEdges"><g shape-rendering="auto"><circle cx="7.5" cy="7.5" r="6.2" fill="#fff" stroke="#3cb83c" stroke-width="2"/><path d="M4,6.3 H7 V4 L11,7.5 L7,11 V8.7 H4 Z" fill="#3cb83c"/></g></svg>
<div class="t" style="left:153px;top:624.51px;font-size:11px;color:#000;">0</div>
<div class="a" style="left:22px;top:654px;width:237px;height:1px;background:#d6e3f1"></div>
<div class="a" style="left:150px;top:638px;width:1px;height:16px;background:#d6e3f1"></div>
<div class="t" style="left:24px;top:641.51px;font-size:11px;color:#000;">StepOver</div>
<svg class="a" style="left:134px;top:639px" width="15" height="15" viewBox="0 0 15 15" shape-rendering="crispEdges"><g shape-rendering="auto"><circle cx="7.5" cy="7.5" r="6.2" fill="#fff" stroke="#3cb83c" stroke-width="2"/><path d="M4,6.3 H7 V4 L11,7.5 L7,11 V8.7 H4 Z" fill="#3cb83c"/></g></svg>
<div class="t" style="left:153px;top:641.51px;font-size:11px;color:#000;">0.1</div>
<div class="a" style="left:8px;top:655px;width:251px;height:19px;background:#d6e3f1"></div>
<svg class="a" style="left:10px;top:660px" width="9" height="9" viewBox="0 0 9 9" shape-rendering="crispEdges"><rect x="0.5" y="0.5" width="8" height="8" fill="none" stroke="#555"/><path d="M2,4.5 H7" stroke="#555"/></svg>
<div class="t" style="left:25px;top:658.51px;font-size:11px;color:#6d6d6d;">Tool</div>
<div class="a" style="left:22px;top:690px;width:237px;height:1px;background:#d6e3f1"></div>
<div class="a" style="left:150px;top:674px;width:1px;height:16px;background:#d6e3f1"></div>
<div class="t" style="left:24px;top:677.51px;font-size:11px;color:#000;">Tool Diameter</div>
<svg class="a" style="left:134px;top:675px" width="15" height="15" viewBox="0 0 15 15" shape-rendering="crispEdges"><g shape-rendering="auto"><circle cx="7.5" cy="7.5" r="6.2" fill="#fff" stroke="#c8c8c8" stroke-width="2"/><path d="M11,6.3 H8 V4 L4,7.5 L8,11 V8.7 H11 Z" fill="#c8c8c8"/></g></svg>
<div class="t" style="left:153px;top:677.51px;font-size:11px;color:#8a8a8a;font-style:italic">3</div>
<div class="a" style="left:22px;top:707px;width:237px;height:1px;background:#d6e3f1"></div>
<div class="a" style="left:150px;top:691px;width:1px;height:16px;background:#d6e3f1"></div>
<div class="t" style="left:24px;top:694.51px;font-size:11px;color:#000;">Tool Number</div>
<svg class="a" style="left:134px;top:692px" width="15" height="15" viewBox="0 0 15 15" shape-rendering="crispEdges"><g shape-rendering="auto"><circle cx="7.5" cy="7.5" r="6.2" fill="#fff" stroke="#3cb83c" stroke-width="2"/><path d="M4,6.3 H7 V4 L11,7.5 L7,11 V8.7 H4 Z" fill="#3cb83c"/></g></svg>
<div class="t" style="left:153px;top:694.51px;font-size:11px;color:#000;">3</div>
<div class="a" style="left:22px;top:724px;width:237px;height:1px;background:#d6e3f1"></div>
<div class="a" style="left:150px;top:708px;width:1px;height:16px;background:#d6e3f1"></div>
<div class="t" style="left:24px;top:711.51px;font-size:11px;color:#000;">Tool Profile</div>
<svg class="a" style="left:134px;top:709px" width="15" height="15" viewBox="0 0 15 15" shape-rendering="crispEdges"><g shape-rendering="auto"><circle cx="7.5" cy="7.5" r="6.2" fill="#fff" stroke="#3cb83c" stroke-width="2"/><path d="M4,6.3 H7 V4 L11,7.5 L7,11 V8.7 H4 Z" fill="#3cb83c"/></g></svg>
<div class="t" style="left:153px;top:711.51px;font-size:11px;color:#000;">Ball Nose</div>
<div class="a" style="left:8px;top:737px;width:251px;height:5px;background:#f0f0f0"></div>
<div class="a" style="left:259px;top:79px;width:3px;height:663px;background:linear-gradient(90deg,#c8c8c8,#9a9a9a 50%,#b0b0b0)"></div>
<div class="a" style="left:258px;top:275px;width:1px;height:463px;background:#a0a0a0"></div>
<div class="a" style="left:262px;top:672px;width:754px;height:3px;background:#a8a8a8"></div>
<div class="a" style="left:262px;top:675px;width:754px;height:65px;background:#fff"></div>
<div class="a" style="left:262px;top:701px;width:754px;height:13px;background:#3399ff"></div>
<div class="t" style="left:264px;top:676.01px;font-size:11px;color:#000;letter-spacing:-0.17px">Generate toolpath 'Finish' duration : 00:00:00.7267400</div>
<div class="t" style="left:264px;top:689.01px;font-size:11px;color:#000;letter-spacing:-0.17px">Toolpath distance 'Finish' : 30467.7814415394 + rapids : 14.6806137028173 = total : 30482.4620552422</div>
<div class="t" style="left:264px;top:702.01px;font-size:11px;color:#fff;letter-spacing:-0.17px">Estimated Toolpath 'Finish' duration : 00:38:05 + rapids : 00:00:01 = total : 00:38:06</div>
<div class="a" style="left:8px;top:740px;width:1008px;height:2px;background:#e8e8e8"></div>
<div class="a" style="left:8px;top:742px;width:1008px;height:18px;background:#f0f0f0;border-top:1px solid #a0a0a0"></div>
<div class="a" style="left:651px;top:742px;width:199px;height:17px;border-left:1px solid #a0a0a0;border-top:1px solid #a0a0a0;border-right:1px solid #fff"></div>
<div class="a" style="left:852px;top:742px;width:148px;height:17px;border-left:1px solid #a0a0a0;border-top:1px solid #a0a0a0;border-right:1px solid #fff"></div>
<div class="t" style="left:654px;top:745.21px;font-size:11px;color:#000;letter-spacing:-0.25px">Property changed</div>
<div class="t" style="right:26px;top:745.21px;font-size:11px;color:#000;letter-spacing:-0.15px">-27.0000, -140.0000</div>
<svg class="a" style="left:1002px;top:745px" width="14" height="14" viewBox="0 0 14 14" shape-rendering="crispEdges"><path d="M13,3 L3,13 M13,7 L7,13 M13,11 L11,13" stroke="#b0b0b0" stroke-width="1.2" shape-rendering="auto"/></svg>
<svg class="a" style="left:262px;top:79px" width="754" height="593" viewBox="262 79 754 593">
<rect x="262" y="79" width="754" height="593" fill="#33333d"/>
<g stroke-width="1" fill="none"><line x1="377.3" y1="421.7" x2="379.9" y2="470.3" stroke="rgb(53,46,55)"/><line x1="717.3" y1="232.6" x2="755.1" y2="247.1" stroke="rgb(55,45,52)"/><line x1="628.8" y1="331.9" x2="653.0" y2="387.8" stroke="rgb(56,45,52)"/><line x1="839.9" y1="519.4" x2="818.7" y2="556.8" stroke="rgb(54,45,53)"/><line x1="680.3" y1="202.0" x2="702.3" y2="209.9" stroke="rgb(55,45,53)"/><line x1="839.6" y1="328.5" x2="828.5" y2="344.5" stroke="rgb(55,45,52)"/><line x1="379.8" y1="355.0" x2="385.4" y2="364.9" stroke="rgb(53,46,54)"/><line x1="817.5" y1="317.6" x2="806.5" y2="335.7" stroke="rgb(55,45,52)"/><line x1="701.9" y1="196.5" x2="669.2" y2="197.0" stroke="rgb(54,45,53)"/><line x1="424.6" y1="562.6" x2="450.3" y2="582.3" stroke="rgb(54,46,54)"/><line x1="585.6" y1="331.5" x2="544.4" y2="333.4" stroke="rgb(56,45,52)"/><line x1="429.1" y1="246.4" x2="418.7" y2="261.2" stroke="rgb(53,46,55)"/><line x1="722.7" y1="202.9" x2="680.3" y2="202.0" stroke="rgb(54,45,53)"/><line x1="450.3" y1="582.3" x2="489.0" y2="626.2" stroke="rgb(53,46,54)"/><line x1="680.3" y1="202.0" x2="650.4" y2="204.8" stroke="rgb(55,45,53)"/><line x1="511.3" y1="477.1" x2="560.1" y2="539.9" stroke="rgb(56,45,52)"/><line x1="518.7" y1="393.8" x2="458.2" y2="411.6" stroke="rgb(56,45,52)"/><line x1="417.2" y1="272.6" x2="407.3" y2="309.1" stroke="rgb(54,45,53)"/><line x1="840.1" y1="538.7" x2="813.4" y2="577.5" stroke="rgb(53,47,56)"/><line x1="458.2" y1="411.6" x2="416.3" y2="430.4" stroke="rgb(56,45,52)"/><line x1="813.6" y1="251.2" x2="785.5" y2="240.1" stroke="rgb(54,45,53)"/><line x1="623.1" y1="198.6" x2="613.2" y2="212.8" stroke="rgb(55,45,53)"/><line x1="792.9" y1="224.9" x2="785.6" y2="230.3" stroke="rgb(54,46,54)"/><line x1="438.5" y1="260.7" x2="417.2" y2="272.6" stroke="rgb(54,45,53)"/><line x1="397.2" y1="303.5" x2="389.2" y2="317.3" stroke="rgb(53,46,55)"/><line x1="845.3" y1="316.3" x2="857.0" y2="340.8" stroke="rgb(54,45,53)"/><line x1="772.8" y1="217.8" x2="758.9" y2="222.8" stroke="rgb(54,45,53)"/><line x1="469.9" y1="213.5" x2="470.0" y2="218.3" stroke="rgb(53,46,55)"/><line x1="481.6" y1="603.2" x2="532.4" y2="613.2" stroke="rgb(54,45,53)"/><line x1="504.5" y1="278.8" x2="468.3" y2="286.8" stroke="rgb(56,45,52)"/><line x1="666.0" y1="661.5" x2="651.2" y2="659.4" stroke="rgb(53,46,55)"/><line x1="707.0" y1="651.3" x2="666.0" y2="661.5" stroke="rgb(53,46,55)"/><line x1="483.4" y1="444.0" x2="511.3" y2="477.1" stroke="rgb(56,45,52)"/><line x1="597.8" y1="232.9" x2="594.6" y2="245.6" stroke="rgb(56,45,52)"/><line x1="735.3" y1="629.5" x2="696.8" y2="646.0" stroke="rgb(53,46,54)"/><line x1="790.4" y1="407.0" x2="778.0" y2="451.1" stroke="rgb(56,45,52)"/><line x1="748.8" y1="592.7" x2="735.3" y2="629.5" stroke="rgb(54,45,53)"/><line x1="586.4" y1="196.8" x2="561.2" y2="201.7" stroke="rgb(54,45,53)"/><line x1="589.9" y1="220.9" x2="550.0" y2="230.7" stroke="rgb(55,45,52)"/><line x1="550.0" y1="230.7" x2="549.3" y2="245.8" stroke="rgb(56,45,52)"/><line x1="396.8" y1="354.6" x2="385.4" y2="364.9" stroke="rgb(54,45,53)"/><line x1="703.2" y1="542.6" x2="639.4" y2="564.8" stroke="rgb(56,45,52)"/><line x1="690.7" y1="572.1" x2="700.8" y2="608.0" stroke="rgb(55,45,52)"/><line x1="551.2" y1="219.3" x2="512.8" y2="231.7" stroke="rgb(55,45,52)"/><line x1="709.6" y1="219.4" x2="668.2" y2="221.9" stroke="rgb(55,45,52)"/><line x1="630.2" y1="532.0" x2="574.7" y2="569.8" stroke="rgb(56,45,52)"/><line x1="597.8" y1="232.9" x2="550.0" y2="230.7" stroke="rgb(56,45,52)"/><line x1="525.4" y1="193.4" x2="504.3" y2="199.2" stroke="rgb(53,46,55)"/><line x1="556.5" y1="189.8" x2="594.5" y2="190.1" stroke="rgb(53,46,55)"/><line x1="762.1" y1="282.7" x2="782.8" y2="305.6" stroke="rgb(56,45,52)"/><line x1="550.0" y1="230.7" x2="512.8" y2="231.7" stroke="rgb(55,45,52)"/><line x1="505.5" y1="338.5" x2="473.6" y2="368.4" stroke="rgb(56,45,52)"/><line x1="578.4" y1="210.7" x2="551.2" y2="219.3" stroke="rgb(55,45,52)"/><line x1="549.7" y1="259.9" x2="504.5" y2="278.8" stroke="rgb(56,45,52)"/><line x1="418.2" y1="389.0" x2="458.2" y2="411.6" stroke="rgb(56,45,52)"/><line x1="755.6" y1="554.3" x2="748.8" y2="592.7" stroke="rgb(55,45,52)"/><line x1="754.8" y1="205.7" x2="792.9" y2="224.9" stroke="rgb(53,46,55)"/><line x1="374.1" y1="409.3" x2="379.9" y2="470.3" stroke="rgb(53,47,56)"/><line x1="538.5" y1="210.3" x2="551.2" y2="219.3" stroke="rgb(55,45,52)"/><line x1="650.4" y1="204.8" x2="613.2" y2="212.8" stroke="rgb(55,45,52)"/><line x1="598.4" y1="204.6" x2="578.4" y2="210.7" stroke="rgb(55,45,52)"/><line x1="514.9" y1="632.7" x2="556.7" y2="629.3" stroke="rgb(54,46,54)"/><line x1="818.7" y1="556.8" x2="813.4" y2="577.5" stroke="rgb(53,46,54)"/><line x1="869.3" y1="396.8" x2="856.4" y2="444.5" stroke="rgb(54,46,54)"/><line x1="669.5" y1="189.9" x2="710.3" y2="192.7" stroke="rgb(53,46,55)"/><line x1="459.4" y1="350.7" x2="436.2" y2="358.3" stroke="rgb(56,45,52)"/><line x1="778.0" y1="451.1" x2="727.9" y2="438.7" stroke="rgb(56,45,52)"/><line x1="703.2" y1="542.6" x2="630.2" y2="532.0" stroke="rgb(56,45,52)"/><line x1="841.4" y1="294.5" x2="858.2" y2="327.7" stroke="rgb(54,46,54)"/><line x1="718.0" y1="259.2" x2="762.1" y2="282.7" stroke="rgb(56,45,52)"/><line x1="673.3" y1="354.1" x2="653.0" y2="387.8" stroke="rgb(56,45,52)"/><line x1="578.5" y1="293.6" x2="607.4" y2="311.1" stroke="rgb(56,45,52)"/><line x1="436.2" y1="358.3" x2="458.2" y2="411.6" stroke="rgb(56,45,52)"/><line x1="702.3" y1="209.9" x2="668.2" y2="221.9" stroke="rgb(55,45,52)"/><line x1="669.2" y1="197.0" x2="680.3" y2="202.0" stroke="rgb(54,45,53)"/><line x1="813.6" y1="251.2" x2="819.0" y2="267.0" stroke="rgb(54,46,54)"/><line x1="669.5" y1="189.9" x2="624.7" y2="190.4" stroke="rgb(53,46,55)"/><line x1="785.5" y1="240.1" x2="797.2" y2="257.6" stroke="rgb(55,45,53)"/><line x1="719.5" y1="337.5" x2="720.2" y2="394.0" stroke="rgb(56,45,52)"/><line x1="504.3" y1="199.2" x2="469.9" y2="213.5" stroke="rgb(53,46,55)"/><line x1="624.7" y1="190.4" x2="594.5" y2="190.1" stroke="rgb(53,46,54)"/><line x1="647.5" y1="593.4" x2="598.5" y2="620.5" stroke="rgb(55,45,52)"/><line x1="653.0" y1="387.8" x2="660.1" y2="428.2" stroke="rgb(56,45,52)"/><line x1="639.4" y1="564.8" x2="647.5" y2="593.4" stroke="rgb(55,45,52)"/><line x1="513.3" y1="219.0" x2="473.9" y2="237.0" stroke="rgb(55,45,52)"/><line x1="574.7" y1="569.8" x2="579.9" y2="597.1" stroke="rgb(55,45,52)"/><line x1="468.9" y1="228.3" x2="437.7" y2="250.2" stroke="rgb(54,45,53)"/><line x1="693.5" y1="313.4" x2="719.5" y2="337.5" stroke="rgb(56,45,52)"/><line x1="819.0" y1="267.0" x2="841.4" y2="294.5" stroke="rgb(54,45,53)"/><line x1="589.9" y1="220.9" x2="551.2" y2="219.3" stroke="rgb(55,45,52)"/><line x1="582.0" y1="470.3" x2="511.3" y2="477.1" stroke="rgb(56,45,52)"/><line x1="639.2" y1="258.8" x2="666.3" y2="276.3" stroke="rgb(56,45,52)"/><line x1="590.6" y1="259.9" x2="622.9" y2="275.8" stroke="rgb(56,45,52)"/><line x1="470.0" y1="218.3" x2="448.2" y2="235.0" stroke="rgb(54,46,54)"/><line x1="871.7" y1="429.6" x2="856.4" y2="444.5" stroke="rgb(54,46,54)"/><line x1="377.3" y1="421.7" x2="389.6" y2="445.3" stroke="rgb(54,45,53)"/><line x1="549.3" y1="649.5" x2="592.9" y2="664.1" stroke="rgb(53,46,55)"/><line x1="859.1" y1="408.4" x2="823.1" y2="422.8" stroke="rgb(55,45,52)"/><line x1="817.5" y1="317.6" x2="828.5" y2="344.5" stroke="rgb(55,45,52)"/><line x1="522.4" y1="201.7" x2="504.0" y2="210.5" stroke="rgb(54,45,53)"/><line x1="865.3" y1="474.4" x2="849.6" y2="484.0" stroke="rgb(54,46,54)"/><line x1="733.5" y1="317.5" x2="693.5" y2="313.4" stroke="rgb(56,45,52)"/><line x1="856.4" y1="444.5" x2="818.9" y2="460.1" stroke="rgb(55,45,52)"/><line x1="469.6" y1="612.9" x2="489.0" y2="626.2" stroke="rgb(53,47,56)"/><line x1="749.3" y1="631.6" x2="707.0" y2="651.3" stroke="rgb(53,47,56)"/><line x1="410.2" y1="369.6" x2="389.7" y2="381.5" stroke="rgb(55,45,52)"/><line x1="630.4" y1="189.0" x2="624.7" y2="190.4" stroke="rgb(53,46,55)"/><line x1="377.2" y1="397.8" x2="377.3" y2="421.7" stroke="rgb(53,46,54)"/><line x1="589.3" y1="188.9" x2="594.5" y2="190.1" stroke="rgb(53,46,55)"/><line x1="660.1" y1="428.2" x2="595.4" y2="424.9" stroke="rgb(56,45,52)"/><line x1="772.8" y1="217.8" x2="785.6" y2="230.3" stroke="rgb(54,46,54)"/><line x1="526.2" y1="357.4" x2="518.7" y2="393.8" stroke="rgb(56,45,52)"/><line x1="792.6" y1="593.7" x2="765.0" y2="607.4" stroke="rgb(54,46,54)"/><line x1="461.1" y1="307.5" x2="481.9" y2="324.1" stroke="rgb(56,45,52)"/><line x1="586.4" y1="196.8" x2="598.4" y2="204.6" stroke="rgb(54,45,53)"/><line x1="582.6" y1="504.7" x2="630.2" y2="532.0" stroke="rgb(56,45,52)"/><line x1="542.4" y1="195.7" x2="561.2" y2="201.7" stroke="rgb(54,45,53)"/><line x1="518.7" y1="393.8" x2="483.4" y2="444.0" stroke="rgb(56,45,52)"/><line x1="551.2" y1="219.3" x2="550.0" y2="230.7" stroke="rgb(55,45,52)"/><line x1="849.6" y1="484.0" x2="816.3" y2="502.4" stroke="rgb(55,45,52)"/><line x1="630.2" y1="532.0" x2="639.4" y2="564.8" stroke="rgb(56,45,52)"/><line x1="418.7" y1="261.2" x2="402.4" y2="286.1" stroke="rgb(53,46,55)"/><line x1="504.0" y1="210.5" x2="470.0" y2="218.3" stroke="rgb(54,46,54)"/><line x1="505.5" y1="338.5" x2="526.2" y2="357.4" stroke="rgb(56,45,52)"/><line x1="720.2" y1="394.0" x2="653.0" y2="387.8" stroke="rgb(56,45,52)"/><line x1="607.4" y1="311.1" x2="628.8" y2="331.9" stroke="rgb(56,45,52)"/><line x1="459.4" y1="350.7" x2="473.6" y2="368.4" stroke="rgb(56,45,52)"/><line x1="551.4" y1="274.8" x2="578.5" y2="293.6" stroke="rgb(56,45,52)"/><line x1="641.9" y1="247.4" x2="594.6" y2="245.6" stroke="rgb(56,45,52)"/><line x1="549.7" y1="259.9" x2="551.4" y2="274.8" stroke="rgb(56,45,52)"/><line x1="842.6" y1="374.5" x2="826.4" y2="387.1" stroke="rgb(55,45,52)"/><line x1="466.3" y1="486.7" x2="423.6" y2="505.1" stroke="rgb(56,45,52)"/><line x1="505.6" y1="263.1" x2="473.4" y2="266.0" stroke="rgb(56,45,52)"/><line x1="598.4" y1="204.6" x2="613.2" y2="212.8" stroke="rgb(55,45,52)"/><line x1="826.4" y1="387.1" x2="790.4" y2="407.0" stroke="rgb(56,45,52)"/><line x1="798.9" y1="273.4" x2="789.6" y2="289.9" stroke="rgb(55,45,52)"/><line x1="461.1" y1="307.5" x2="433.5" y2="314.6" stroke="rgb(55,45,52)"/><line x1="740.7" y1="199.3" x2="722.7" y2="202.9" stroke="rgb(54,46,54)"/><line x1="717.3" y1="232.6" x2="726.3" y2="245.0" stroke="rgb(55,45,52)"/><line x1="518.5" y1="318.7" x2="481.9" y2="324.1" stroke="rgb(56,45,52)"/><line x1="515.5" y1="244.8" x2="505.6" y2="263.1" stroke="rgb(56,45,52)"/><line x1="806.5" y1="335.7" x2="789.8" y2="352.5" stroke="rgb(56,45,52)"/><line x1="717.3" y1="232.6" x2="675.1" y2="232.2" stroke="rgb(55,45,52)"/><line x1="702.3" y1="209.9" x2="709.6" y2="219.4" stroke="rgb(55,45,52)"/><line x1="431.4" y1="297.8" x2="407.3" y2="309.1" stroke="rgb(55,45,53)"/><line x1="754.8" y1="205.7" x2="742.5" y2="210.9" stroke="rgb(54,46,54)"/><line x1="408.0" y1="330.2" x2="396.8" y2="354.6" stroke="rgb(55,45,53)"/><line x1="407.3" y1="309.1" x2="393.0" y2="319.8" stroke="rgb(54,45,53)"/><line x1="785.5" y1="240.1" x2="819.0" y2="267.0" stroke="rgb(54,45,53)"/><line x1="504.3" y1="199.2" x2="496.2" y2="205.0" stroke="rgb(53,46,54)"/><line x1="647.5" y1="593.4" x2="677.8" y2="625.0" stroke="rgb(55,45,52)"/><line x1="856.8" y1="499.8" x2="840.1" y2="538.7" stroke="rgb(53,46,55)"/><line x1="463.0" y1="526.7" x2="467.1" y2="566.3" stroke="rgb(55,45,52)"/><line x1="483.9" y1="206.3" x2="469.9" y2="213.5" stroke="rgb(53,47,56)"/><line x1="436.6" y1="548.1" x2="450.3" y2="582.3" stroke="rgb(54,45,53)"/><line x1="592.9" y1="664.1" x2="604.5" y2="661.3" stroke="rgb(53,46,55)"/><line x1="468.9" y1="228.3" x2="473.9" y2="237.0" stroke="rgb(55,45,53)"/><line x1="628.8" y1="331.9" x2="585.6" y2="331.5" stroke="rgb(56,45,52)"/><line x1="507.9" y1="586.4" x2="579.9" y2="597.1" stroke="rgb(55,45,52)"/><line x1="669.5" y1="189.9" x2="641.8" y2="193.2" stroke="rgb(54,46,54)"/><line x1="467.1" y1="566.3" x2="481.6" y2="603.2" stroke="rgb(55,45,53)"/><line x1="624.7" y1="190.4" x2="601.0" y2="193.6" stroke="rgb(54,46,54)"/><line x1="587.5" y1="387.5" x2="518.7" y2="393.8" stroke="rgb(56,45,52)"/><line x1="410.2" y1="369.6" x2="389.2" y2="406.2" stroke="rgb(55,45,52)"/><line x1="468.3" y1="286.8" x2="493.2" y2="301.5" stroke="rgb(56,45,52)"/><line x1="470.0" y1="218.3" x2="468.9" y2="228.3" stroke="rgb(54,46,54)"/><line x1="473.4" y1="266.0" x2="468.3" y2="286.8" stroke="rgb(55,45,52)"/><line x1="863.9" y1="342.9" x2="866.3" y2="355.8" stroke="rgb(53,47,56)"/><line x1="448.4" y1="228.0" x2="448.2" y2="235.0" stroke="rgb(53,46,55)"/><line x1="416.3" y1="430.4" x2="423.6" y2="505.1" stroke="rgb(55,45,52)"/><line x1="440.8" y1="274.6" x2="431.4" y2="297.8" stroke="rgb(55,45,52)"/><line x1="859.1" y1="408.4" x2="856.4" y2="444.5" stroke="rgb(54,45,53)"/><line x1="858.2" y1="327.7" x2="857.0" y2="340.8" stroke="rgb(54,46,54)"/><line x1="532.4" y1="613.2" x2="514.9" y2="632.7" stroke="rgb(54,46,54)"/><line x1="522.4" y1="201.7" x2="538.5" y2="210.3" stroke="rgb(54,45,53)"/><line x1="514.9" y1="632.7" x2="531.3" y2="648.2" stroke="rgb(53,46,55)"/><line x1="582.0" y1="470.3" x2="582.6" y2="504.7" stroke="rgb(56,45,52)"/><line x1="496.2" y1="205.0" x2="504.0" y2="210.5" stroke="rgb(54,46,54)"/><line x1="765.0" y1="522.5" x2="703.2" y2="542.6" stroke="rgb(56,45,52)"/><line x1="595.4" y1="424.9" x2="646.9" y2="465.7" stroke="rgb(56,45,52)"/><line x1="504.3" y1="199.2" x2="483.9" y2="206.3" stroke="rgb(53,47,56)"/><line x1="675.1" y1="232.2" x2="671.4" y2="244.3" stroke="rgb(56,45,52)"/><line x1="678.8" y1="258.2" x2="666.3" y2="276.3" stroke="rgb(56,45,52)"/><line x1="856.4" y1="444.5" x2="849.6" y2="484.0" stroke="rgb(54,45,53)"/><line x1="707.4" y1="506.8" x2="630.2" y2="532.0" stroke="rgb(56,45,52)"/><line x1="635.2" y1="233.1" x2="641.9" y2="247.4" stroke="rgb(56,45,52)"/><line x1="823.1" y1="422.8" x2="818.9" y2="460.1" stroke="rgb(56,45,52)"/><line x1="639.8" y1="221.7" x2="597.8" y2="232.9" stroke="rgb(55,45,52)"/><line x1="496.2" y1="205.0" x2="469.9" y2="213.5" stroke="rgb(53,46,55)"/><line x1="377.2" y1="397.8" x2="389.2" y2="406.2" stroke="rgb(54,45,53)"/><line x1="851.0" y1="358.4" x2="860.8" y2="386.2" stroke="rgb(54,45,53)"/><line x1="374.1" y1="409.3" x2="377.3" y2="421.7" stroke="rgb(53,46,55)"/><line x1="839.9" y1="519.4" x2="816.3" y2="502.4" stroke="rgb(55,45,53)"/><line x1="822.2" y1="301.5" x2="839.6" y2="328.5" stroke="rgb(55,45,52)"/><line x1="635.2" y1="233.1" x2="597.8" y2="232.9" stroke="rgb(56,45,52)"/><line x1="504.0" y1="210.5" x2="473.9" y2="237.0" stroke="rgb(55,45,53)"/><line x1="503.7" y1="547.0" x2="467.1" y2="566.3" stroke="rgb(56,45,52)"/><line x1="613.2" y1="212.8" x2="589.9" y2="220.9" stroke="rgb(55,45,52)"/><line x1="869.3" y1="396.8" x2="859.1" y2="408.4" stroke="rgb(54,46,54)"/><line x1="700.8" y1="608.0" x2="647.5" y2="593.4" stroke="rgb(55,45,52)"/><line x1="590.6" y1="259.9" x2="551.4" y2="274.8" stroke="rgb(56,45,52)"/><line x1="473.6" y1="368.4" x2="518.7" y2="393.8" stroke="rgb(56,45,52)"/><line x1="393.0" y1="319.8" x2="384.1" y2="334.6" stroke="rgb(53,46,55)"/><line x1="839.9" y1="519.4" x2="802.4" y2="542.4" stroke="rgb(55,45,53)"/><line x1="680.3" y1="202.0" x2="652.7" y2="212.0" stroke="rgb(55,45,52)"/><line x1="379.8" y1="355.0" x2="376.2" y2="382.0" stroke="rgb(53,46,55)"/><line x1="518.7" y1="393.8" x2="530.2" y2="437.3" stroke="rgb(56,45,52)"/><line x1="849.6" y1="484.0" x2="839.9" y2="519.4" stroke="rgb(54,45,53)"/><line x1="418.7" y1="261.2" x2="417.2" y2="272.6" stroke="rgb(53,46,54)"/><line x1="458.2" y1="411.6" x2="483.4" y2="444.0" stroke="rgb(56,45,52)"/><line x1="818.9" y1="460.1" x2="816.3" y2="502.4" stroke="rgb(55,45,52)"/><line x1="424.6" y1="562.6" x2="469.6" y2="612.9" stroke="rgb(53,46,55)"/><line x1="544.4" y1="333.4" x2="505.5" y2="338.5" stroke="rgb(56,45,52)"/><line x1="789.8" y1="352.5" x2="793.9" y2="376.2" stroke="rgb(56,45,52)"/><line x1="601.0" y1="193.6" x2="623.1" y2="198.6" stroke="rgb(54,45,53)"/><line x1="418.7" y1="261.2" x2="408.5" y2="275.8" stroke="rgb(53,47,56)"/><line x1="753.8" y1="342.6" x2="738.5" y2="362.8" stroke="rgb(56,45,52)"/><line x1="802.4" y1="542.4" x2="755.6" y2="554.3" stroke="rgb(55,45,52)"/><line x1="416.3" y1="430.4" x2="389.6" y2="445.3" stroke="rgb(55,45,52)"/><line x1="845.3" y1="316.3" x2="839.6" y2="328.5" stroke="rgb(54,45,53)"/><line x1="469.9" y1="213.5" x2="448.4" y2="228.0" stroke="rgb(53,47,56)"/><line x1="397.2" y1="303.5" x2="393.0" y2="319.8" stroke="rgb(54,46,54)"/><line x1="793.9" y1="376.2" x2="790.4" y2="407.0" stroke="rgb(56,45,52)"/><line x1="481.6" y1="603.2" x2="514.9" y2="632.7" stroke="rgb(54,46,54)"/><line x1="483.4" y1="444.0" x2="466.3" y2="486.7" stroke="rgb(56,45,52)"/><line x1="466.3" y1="486.7" x2="463.0" y2="526.7" stroke="rgb(56,45,52)"/><line x1="597.8" y1="232.9" x2="549.3" y2="245.8" stroke="rgb(56,45,52)"/><line x1="735.3" y1="629.5" x2="677.8" y2="625.0" stroke="rgb(54,46,54)"/><line x1="790.4" y1="407.0" x2="727.9" y2="438.7" stroke="rgb(56,45,52)"/><line x1="706.2" y1="191.2" x2="669.5" y2="189.9" stroke="rgb(53,47,56)"/><line x1="550.0" y1="230.7" x2="515.5" y2="244.8" stroke="rgb(55,45,52)"/><line x1="720.2" y1="394.0" x2="660.1" y2="428.2" stroke="rgb(56,45,52)"/><line x1="690.7" y1="572.1" x2="647.5" y2="593.4" stroke="rgb(55,45,52)"/><line x1="377.2" y1="397.8" x2="374.1" y2="409.3" stroke="rgb(53,46,55)"/><line x1="671.4" y1="244.3" x2="678.8" y2="258.2" stroke="rgb(56,45,52)"/><line x1="806.5" y1="335.7" x2="814.2" y2="357.6" stroke="rgb(56,45,52)"/><line x1="776.5" y1="327.2" x2="789.8" y2="352.5" stroke="rgb(56,45,52)"/><line x1="762.1" y1="282.7" x2="746.0" y2="300.6" stroke="rgb(56,45,52)"/><line x1="668.2" y1="221.9" x2="639.8" y2="221.7" stroke="rgb(55,45,52)"/><line x1="836.2" y1="277.8" x2="854.4" y2="310.2" stroke="rgb(53,46,55)"/><line x1="723.5" y1="472.7" x2="646.9" y2="465.7" stroke="rgb(56,45,52)"/><line x1="512.8" y1="231.7" x2="473.9" y2="237.0" stroke="rgb(55,45,52)"/><line x1="450.3" y1="582.3" x2="469.6" y2="612.9" stroke="rgb(53,46,55)"/><line x1="538.5" y1="210.3" x2="513.3" y2="219.0" stroke="rgb(55,45,52)"/><line x1="556.5" y1="189.8" x2="525.4" y2="193.4" stroke="rgb(53,46,55)"/><line x1="579.9" y1="597.1" x2="556.7" y2="629.3" stroke="rgb(55,45,53)"/><line x1="504.0" y1="210.5" x2="468.9" y2="228.3" stroke="rgb(54,45,53)"/><line x1="505.6" y1="263.1" x2="468.3" y2="286.8" stroke="rgb(56,45,52)"/><line x1="389.2" y1="406.2" x2="416.3" y2="430.4" stroke="rgb(55,45,52)"/><line x1="436.6" y1="548.1" x2="467.1" y2="566.3" stroke="rgb(55,45,52)"/><line x1="666.0" y1="661.5" x2="604.5" y2="661.3" stroke="rgb(53,46,55)"/><line x1="389.6" y1="445.3" x2="400.3" y2="479.4" stroke="rgb(55,45,53)"/><line x1="467.1" y1="566.3" x2="507.9" y2="586.4" stroke="rgb(55,45,52)"/><line x1="624.7" y1="190.4" x2="641.8" y2="193.2" stroke="rgb(54,46,54)"/><line x1="448.2" y1="235.0" x2="429.1" y2="246.4" stroke="rgb(53,46,55)"/><line x1="410.2" y1="369.6" x2="418.2" y2="389.0" stroke="rgb(55,45,52)"/><line x1="818.7" y1="556.8" x2="792.6" y2="593.7" stroke="rgb(54,46,54)"/><line x1="660.9" y1="188.8" x2="669.5" y2="189.9" stroke="rgb(53,46,55)"/><line x1="389.7" y1="381.5" x2="389.2" y2="406.2" stroke="rgb(54,45,53)"/><line x1="440.8" y1="274.6" x2="468.3" y2="286.8" stroke="rgb(55,45,52)"/><line x1="858.2" y1="327.7" x2="866.3" y2="355.8" stroke="rgb(53,46,55)"/><line x1="417.2" y1="288.5" x2="431.4" y2="297.8" stroke="rgb(55,45,53)"/><line x1="582.0" y1="470.3" x2="631.4" y2="505.4" stroke="rgb(56,45,52)"/><line x1="468.9" y1="228.3" x2="438.5" y2="260.7" stroke="rgb(54,45,53)"/><line x1="678.8" y1="258.2" x2="712.4" y2="279.3" stroke="rgb(56,45,52)"/><line x1="707.4" y1="506.8" x2="703.2" y2="542.6" stroke="rgb(56,45,52)"/><line x1="635.2" y1="233.1" x2="671.4" y2="244.3" stroke="rgb(56,45,52)"/><line x1="653.0" y1="387.8" x2="595.4" y2="424.9" stroke="rgb(56,45,52)"/><line x1="703.2" y1="542.6" x2="755.6" y2="554.3" stroke="rgb(56,45,52)"/><line x1="473.9" y1="237.0" x2="438.5" y2="260.7" stroke="rgb(55,45,53)"/><line x1="587.5" y1="387.5" x2="530.2" y2="437.3" stroke="rgb(56,45,52)"/><line x1="693.5" y1="313.4" x2="669.1" y2="333.7" stroke="rgb(56,45,52)"/><line x1="755.6" y1="554.3" x2="700.8" y2="608.0" stroke="rgb(55,45,52)"/><line x1="819.0" y1="267.0" x2="825.2" y2="284.7" stroke="rgb(54,45,53)"/><line x1="823.1" y1="422.8" x2="790.4" y2="407.0" stroke="rgb(56,45,52)"/><line x1="826.4" y1="387.1" x2="793.9" y2="376.2" stroke="rgb(56,45,52)"/><line x1="544.4" y1="333.4" x2="589.3" y2="355.3" stroke="rgb(56,45,52)"/><line x1="666.3" y1="276.3" x2="671.0" y2="294.0" stroke="rgb(56,45,52)"/><line x1="797.2" y1="257.6" x2="798.9" y2="273.4" stroke="rgb(55,45,52)"/><line x1="814.2" y1="357.6" x2="793.9" y2="376.2" stroke="rgb(56,45,52)"/><line x1="869.3" y1="396.8" x2="871.7" y2="429.6" stroke="rgb(53,46,55)"/><line x1="468.3" y1="286.8" x2="433.5" y2="314.6" stroke="rgb(55,45,52)"/><line x1="590.6" y1="259.9" x2="584.8" y2="277.5" stroke="rgb(56,45,52)"/><line x1="623.0" y1="653.8" x2="657.5" y2="646.2" stroke="rgb(54,46,54)"/><line x1="749.3" y1="631.6" x2="735.3" y2="629.5" stroke="rgb(53,46,55)"/><line x1="630.4" y1="189.0" x2="594.5" y2="190.1" stroke="rgb(53,46,55)"/><line x1="753.8" y1="342.6" x2="793.9" y2="376.2" stroke="rgb(56,45,52)"/><line x1="594.6" y1="245.6" x2="590.6" y2="259.9" stroke="rgb(56,45,52)"/><line x1="802.4" y1="542.4" x2="781.0" y2="571.9" stroke="rgb(55,45,52)"/><line x1="418.2" y1="389.0" x2="389.2" y2="406.2" stroke="rgb(55,45,52)"/><line x1="785.5" y1="240.1" x2="752.3" y2="233.5" stroke="rgb(55,45,52)"/><line x1="765.0" y1="522.5" x2="755.6" y2="554.3" stroke="rgb(56,45,52)"/><line x1="397.2" y1="303.5" x2="407.3" y2="309.1" stroke="rgb(54,46,54)"/><line x1="845.3" y1="316.3" x2="851.0" y2="358.4" stroke="rgb(54,45,53)"/><line x1="781.0" y1="571.9" x2="755.6" y2="554.3" stroke="rgb(55,45,52)"/><line x1="461.1" y1="307.5" x2="454.6" y2="330.4" stroke="rgb(56,45,52)"/><line x1="466.3" y1="486.7" x2="506.6" y2="513.5" stroke="rgb(56,45,52)"/><line x1="657.5" y1="646.2" x2="626.4" y2="637.7" stroke="rgb(54,46,54)"/><line x1="423.6" y1="505.1" x2="463.0" y2="526.7" stroke="rgb(55,45,52)"/><line x1="720.2" y1="394.0" x2="727.9" y2="438.7" stroke="rgb(56,45,52)"/><line x1="582.6" y1="504.7" x2="560.1" y2="539.9" stroke="rgb(56,45,52)"/><line x1="601.0" y1="193.6" x2="567.3" y2="192.0" stroke="rgb(54,46,54)"/><line x1="542.4" y1="195.7" x2="522.4" y2="201.7" stroke="rgb(54,46,54)"/><line x1="556.7" y1="629.3" x2="585.0" y2="646.1" stroke="rgb(54,46,54)"/><line x1="813.4" y1="577.5" x2="792.6" y2="593.7" stroke="rgb(53,46,55)"/><line x1="671.4" y1="244.3" x2="718.0" y2="259.2" stroke="rgb(56,45,52)"/><line x1="719.5" y1="337.5" x2="669.1" y2="333.7" stroke="rgb(56,45,52)"/><line x1="742.5" y1="210.9" x2="702.3" y2="209.9" stroke="rgb(55,45,53)"/><line x1="607.4" y1="311.1" x2="585.6" y2="331.5" stroke="rgb(56,45,52)"/><line x1="551.4" y1="274.8" x2="535.2" y2="296.4" stroke="rgb(56,45,52)"/><line x1="504.5" y1="278.8" x2="535.2" y2="296.4" stroke="rgb(56,45,52)"/><line x1="819.0" y1="267.0" x2="797.2" y2="257.6" stroke="rgb(54,45,53)"/><line x1="556.5" y1="189.8" x2="567.3" y2="192.0" stroke="rgb(53,46,55)"/><line x1="504.0" y1="210.5" x2="513.3" y2="219.0" stroke="rgb(55,45,53)"/><line x1="505.6" y1="263.1" x2="504.5" y2="278.8" stroke="rgb(56,45,52)"/><line x1="759.0" y1="265.3" x2="718.0" y2="259.2" stroke="rgb(56,45,52)"/><line x1="727.9" y1="438.7" x2="723.5" y2="472.7" stroke="rgb(56,45,52)"/><line x1="723.5" y1="472.7" x2="707.4" y2="506.8" stroke="rgb(56,45,52)"/><line x1="561.2" y1="201.7" x2="578.4" y2="210.7" stroke="rgb(55,45,53)"/><line x1="660.1" y1="428.2" x2="723.5" y2="472.7" stroke="rgb(56,45,52)"/><line x1="556.5" y1="189.8" x2="542.4" y2="195.7" stroke="rgb(53,46,54)"/><line x1="542.4" y1="195.7" x2="504.3" y2="199.2" stroke="rgb(53,46,54)"/><line x1="436.2" y1="358.3" x2="410.2" y2="369.6" stroke="rgb(55,45,52)"/><line x1="561.2" y1="201.7" x2="522.4" y2="201.7" stroke="rgb(54,45,53)"/><line x1="870.0" y1="381.9" x2="871.8" y2="408.3" stroke="rgb(53,47,56)"/><line x1="515.5" y1="244.8" x2="473.4" y2="266.0" stroke="rgb(55,45,52)"/><line x1="669.1" y1="333.7" x2="673.3" y2="354.1" stroke="rgb(56,45,52)"/><line x1="628.8" y1="331.9" x2="589.3" y2="355.3" stroke="rgb(56,45,52)"/><line x1="840.1" y1="538.7" x2="839.9" y2="519.4" stroke="rgb(53,46,54)"/><line x1="849.6" y1="484.0" x2="818.9" y2="460.1" stroke="rgb(55,45,52)"/><line x1="630.2" y1="532.0" x2="560.1" y2="539.9" stroke="rgb(56,45,52)"/><line x1="802.4" y1="542.4" x2="765.0" y2="522.5" stroke="rgb(56,45,52)"/><line x1="707.0" y1="651.3" x2="735.3" y2="629.5" stroke="rgb(53,46,55)"/><line x1="735.3" y1="629.5" x2="700.8" y2="608.0" stroke="rgb(54,45,53)"/><line x1="856.8" y1="499.8" x2="839.9" y2="519.4" stroke="rgb(54,46,54)"/><line x1="840.1" y1="538.7" x2="818.7" y2="556.8" stroke="rgb(53,46,54)"/><line x1="389.8" y1="494.9" x2="409.7" y2="522.1" stroke="rgb(54,46,54)"/><line x1="410.7" y1="546.6" x2="424.6" y2="562.6" stroke="rgb(53,46,55)"/><line x1="473.9" y1="237.0" x2="473.8" y2="252.7" stroke="rgb(55,45,52)"/><line x1="587.5" y1="387.5" x2="595.4" y2="424.9" stroke="rgb(56,45,52)"/><line x1="437.7" y1="250.2" x2="438.5" y2="260.7" stroke="rgb(54,45,53)"/><line x1="564.9" y1="311.7" x2="585.6" y2="331.5" stroke="rgb(56,45,52)"/><line x1="709.6" y1="219.4" x2="717.3" y2="232.6" stroke="rgb(55,45,52)"/><line x1="650.3" y1="313.0" x2="669.1" y2="333.7" stroke="rgb(56,45,52)"/><line x1="797.2" y1="257.6" x2="825.2" y2="284.7" stroke="rgb(55,45,53)"/><line x1="551.2" y1="219.3" x2="513.3" y2="219.0" stroke="rgb(55,45,52)"/><line x1="677.6" y1="191.8" x2="701.9" y2="196.5" stroke="rgb(54,46,54)"/><line x1="622.9" y1="275.8" x2="671.0" y2="294.0" stroke="rgb(56,45,52)"/><line x1="814.2" y1="357.6" x2="826.4" y2="387.1" stroke="rgb(55,45,52)"/><line x1="437.7" y1="250.2" x2="418.7" y2="261.2" stroke="rgb(54,46,54)"/><line x1="468.3" y1="286.8" x2="461.1" y2="307.5" stroke="rgb(56,45,52)"/><line x1="431.4" y1="297.8" x2="433.5" y2="314.6" stroke="rgb(55,45,52)"/><line x1="623.0" y1="653.8" x2="651.2" y2="659.4" stroke="rgb(53,46,54)"/><line x1="448.4" y1="228.0" x2="429.1" y2="246.4" stroke="rgb(53,47,56)"/><line x1="496.2" y1="205.0" x2="470.0" y2="218.3" stroke="rgb(54,46,54)"/><line x1="598.5" y1="620.5" x2="626.4" y2="637.7" stroke="rgb(54,45,53)"/><line x1="857.0" y1="340.8" x2="851.0" y2="358.4" stroke="rgb(54,45,53)"/><line x1="507.9" y1="586.4" x2="532.4" y2="613.2" stroke="rgb(55,45,53)"/><line x1="595.4" y1="424.9" x2="582.0" y2="470.3" stroke="rgb(56,45,52)"/><line x1="530.2" y1="437.3" x2="511.3" y2="477.1" stroke="rgb(56,45,52)"/><line x1="635.2" y1="233.1" x2="594.6" y2="245.6" stroke="rgb(56,45,52)"/><line x1="823.1" y1="422.8" x2="778.0" y2="451.1" stroke="rgb(56,45,52)"/><line x1="765.0" y1="607.4" x2="735.3" y2="629.5" stroke="rgb(54,46,54)"/><line x1="647.5" y1="593.4" x2="626.4" y2="637.7" stroke="rgb(55,45,53)"/><line x1="594.6" y1="245.6" x2="639.2" y2="258.8" stroke="rgb(56,45,52)"/><line x1="851.0" y1="358.4" x2="842.6" y2="374.5" stroke="rgb(55,45,53)"/><line x1="828.5" y1="344.5" x2="814.2" y2="357.6" stroke="rgb(55,45,52)"/><line x1="389.7" y1="381.5" x2="377.2" y2="397.8" stroke="rgb(54,46,54)"/><line x1="726.3" y1="245.0" x2="718.0" y2="259.2" stroke="rgb(56,45,52)"/><line x1="822.2" y1="301.5" x2="817.5" y2="317.6" stroke="rgb(55,45,52)"/><line x1="377.3" y1="421.7" x2="389.8" y2="494.9" stroke="rgb(54,46,54)"/><line x1="789.6" y1="289.9" x2="782.8" y2="305.6" stroke="rgb(56,45,52)"/><line x1="816.3" y1="502.4" x2="772.3" y2="480.9" stroke="rgb(56,45,52)"/><line x1="772.3" y1="480.9" x2="723.5" y2="472.7" stroke="rgb(56,45,52)"/><line x1="473.6" y1="368.4" x2="458.2" y2="411.6" stroke="rgb(56,45,52)"/><line x1="467.1" y1="566.3" x2="450.3" y2="582.3" stroke="rgb(55,45,53)"/><line x1="623.0" y1="653.8" x2="585.0" y2="646.1" stroke="rgb(54,46,54)"/><line x1="647.5" y1="593.4" x2="579.9" y2="597.1" stroke="rgb(55,45,52)"/><line x1="458.2" y1="411.6" x2="435.5" y2="453.8" stroke="rgb(56,45,52)"/><line x1="818.9" y1="460.1" x2="772.3" y2="480.9" stroke="rgb(56,45,52)"/><line x1="816.3" y1="502.4" x2="765.0" y2="522.5" stroke="rgb(56,45,52)"/><line x1="416.3" y1="430.4" x2="435.5" y2="453.8" stroke="rgb(56,45,52)"/><line x1="481.9" y1="324.1" x2="505.5" y2="338.5" stroke="rgb(56,45,52)"/><line x1="706.2" y1="191.2" x2="710.3" y2="192.7" stroke="rgb(53,47,56)"/><line x1="601.0" y1="193.6" x2="586.4" y2="196.8" stroke="rgb(54,45,53)"/><line x1="436.2" y1="358.3" x2="418.2" y2="389.0" stroke="rgb(56,45,52)"/><line x1="468.9" y1="228.3" x2="448.2" y2="235.0" stroke="rgb(54,45,53)"/><line x1="423.6" y1="505.1" x2="409.7" y2="522.1" stroke="rgb(55,45,53)"/><line x1="719.5" y1="337.5" x2="673.3" y2="354.1" stroke="rgb(56,45,52)"/><line x1="393.0" y1="319.8" x2="387.8" y2="345.3" stroke="rgb(54,46,54)"/><line x1="397.2" y1="303.5" x2="384.1" y2="334.6" stroke="rgb(53,46,55)"/><line x1="696.8" y1="646.0" x2="677.8" y2="625.0" stroke="rgb(54,46,54)"/><line x1="646.9" y1="465.7" x2="707.4" y2="506.8" stroke="rgb(56,45,52)"/><line x1="857.0" y1="340.8" x2="860.8" y2="386.2" stroke="rgb(54,45,53)"/><line x1="737.4" y1="197.4" x2="710.3" y2="192.7" stroke="rgb(53,47,56)"/><line x1="489.0" y1="626.2" x2="531.3" y2="648.2" stroke="rgb(53,46,55)"/><line x1="435.5" y1="453.8" x2="423.6" y2="505.1" stroke="rgb(55,45,52)"/><line x1="512.8" y1="231.7" x2="473.8" y2="252.7" stroke="rgb(55,45,52)"/><line x1="776.5" y1="327.2" x2="753.8" y2="342.6" stroke="rgb(56,45,52)"/><line x1="628.8" y1="331.9" x2="673.3" y2="354.1" stroke="rgb(56,45,52)"/><line x1="733.5" y1="317.5" x2="719.5" y2="337.5" stroke="rgb(56,45,52)"/><line x1="836.2" y1="277.8" x2="841.4" y2="294.5" stroke="rgb(54,46,54)"/><line x1="712.4" y1="279.3" x2="715.0" y2="294.6" stroke="rgb(56,45,52)"/><line x1="825.2" y1="284.7" x2="839.6" y2="328.5" stroke="rgb(55,45,53)"/><line x1="854.4" y1="310.2" x2="841.4" y2="294.5" stroke="rgb(53,46,54)"/><line x1="389.2" y1="406.2" x2="389.6" y2="445.3" stroke="rgb(54,45,53)"/><line x1="841.4" y1="294.5" x2="825.2" y2="284.7" stroke="rgb(54,45,53)"/><line x1="535.2" y1="296.4" x2="544.4" y2="333.4" stroke="rgb(56,45,52)"/><line x1="709.6" y1="219.4" x2="752.3" y2="233.5" stroke="rgb(55,45,52)"/><line x1="389.6" y1="445.3" x2="389.8" y2="494.9" stroke="rgb(54,46,54)"/><line x1="866.3" y1="355.8" x2="857.0" y2="340.8" stroke="rgb(53,46,54)"/><line x1="420.3" y1="343.0" x2="410.2" y2="369.6" stroke="rgb(55,45,52)"/><line x1="589.3" y1="355.3" x2="526.2" y2="357.4" stroke="rgb(56,45,52)"/><line x1="818.7" y1="556.8" x2="781.0" y2="571.9" stroke="rgb(55,45,53)"/><line x1="526.2" y1="357.4" x2="473.6" y2="368.4" stroke="rgb(56,45,52)"/><line x1="594.5" y1="190.1" x2="601.0" y2="193.6" stroke="rgb(54,46,54)"/><line x1="641.9" y1="247.4" x2="639.2" y2="258.8" stroke="rgb(56,45,52)"/><line x1="417.2" y1="288.5" x2="407.3" y2="309.1" stroke="rgb(54,45,53)"/><line x1="773.7" y1="614.2" x2="792.6" y2="593.7" stroke="rgb(53,46,55)"/><line x1="857.0" y1="340.8" x2="865.4" y2="373.1" stroke="rgb(54,46,54)"/><line x1="530.2" y1="437.3" x2="582.0" y2="470.3" stroke="rgb(56,45,52)"/><line x1="511.3" y1="477.1" x2="582.6" y2="504.7" stroke="rgb(56,45,52)"/><line x1="651.2" y1="659.4" x2="657.5" y2="646.2" stroke="rgb(53,46,54)"/><line x1="677.6" y1="191.8" x2="641.8" y2="193.2" stroke="rgb(54,46,54)"/><line x1="746.0" y1="300.6" x2="753.8" y2="342.6" stroke="rgb(56,45,52)"/><line x1="641.8" y1="193.2" x2="601.0" y2="193.6" stroke="rgb(54,46,54)"/><line x1="726.3" y1="245.0" x2="759.0" y2="265.3" stroke="rgb(56,45,52)"/><line x1="828.5" y1="344.5" x2="842.6" y2="374.5" stroke="rgb(55,45,52)"/><line x1="417.2" y1="272.6" x2="417.2" y2="288.5" stroke="rgb(54,45,53)"/><line x1="792.9" y1="224.9" x2="772.8" y2="217.8" stroke="rgb(53,46,54)"/><line x1="789.6" y1="289.9" x2="817.5" y2="317.6" stroke="rgb(55,45,52)"/><line x1="544.4" y1="333.4" x2="526.2" y2="357.4" stroke="rgb(56,45,52)"/><line x1="742.5" y1="210.9" x2="752.3" y2="233.5" stroke="rgb(55,45,53)"/><line x1="789.6" y1="289.9" x2="806.5" y2="335.7" stroke="rgb(55,45,52)"/><line x1="727.9" y1="438.7" x2="660.1" y2="428.2" stroke="rgb(56,45,52)"/><line x1="584.8" y1="277.5" x2="578.5" y2="293.6" stroke="rgb(56,45,52)"/><line x1="755.1" y1="247.1" x2="759.0" y2="265.3" stroke="rgb(55,45,52)"/><line x1="631.4" y1="505.4" x2="582.6" y2="504.7" stroke="rgb(56,45,52)"/><line x1="623.0" y1="653.8" x2="626.4" y2="637.7" stroke="rgb(54,46,54)"/><line x1="535.2" y1="296.4" x2="564.9" y2="311.7" stroke="rgb(56,45,52)"/><line x1="825.2" y1="284.7" x2="798.9" y2="273.4" stroke="rgb(55,45,53)"/><line x1="675.1" y1="232.2" x2="718.0" y2="259.2" stroke="rgb(56,45,52)"/><line x1="798.9" y1="273.4" x2="759.0" y2="265.3" stroke="rgb(55,45,52)"/><line x1="816.3" y1="502.4" x2="802.4" y2="542.4" stroke="rgb(55,45,52)"/><line x1="623.1" y1="198.6" x2="650.4" y2="204.8" stroke="rgb(55,45,53)"/><line x1="778.0" y1="451.1" x2="772.3" y2="480.9" stroke="rgb(56,45,52)"/><line x1="772.3" y1="480.9" x2="765.0" y2="522.5" stroke="rgb(56,45,52)"/><line x1="839.6" y1="328.5" x2="817.5" y2="317.6" stroke="rgb(55,45,52)"/><line x1="385.4" y1="364.9" x2="377.2" y2="397.8" stroke="rgb(54,46,54)"/><line x1="578.4" y1="210.7" x2="538.5" y2="210.3" stroke="rgb(55,45,52)"/><line x1="870.0" y1="381.9" x2="865.4" y2="373.1" stroke="rgb(53,46,55)"/><line x1="594.6" y1="245.6" x2="549.7" y2="259.9" stroke="rgb(56,45,52)"/><line x1="549.3" y1="245.8" x2="505.6" y2="263.1" stroke="rgb(56,45,52)"/><line x1="719.5" y1="337.5" x2="738.5" y2="362.8" stroke="rgb(56,45,52)"/><line x1="671.4" y1="244.3" x2="641.9" y2="247.4" stroke="rgb(56,45,52)"/><line x1="384.1" y1="334.6" x2="387.8" y2="345.3" stroke="rgb(53,46,54)"/><line x1="549.7" y1="259.9" x2="505.6" y2="263.1" stroke="rgb(56,45,52)"/><line x1="489.0" y1="626.2" x2="514.9" y2="632.7" stroke="rgb(53,46,55)"/><line x1="423.6" y1="505.1" x2="436.6" y2="548.1" stroke="rgb(55,45,52)"/><line x1="535.2" y1="296.4" x2="493.2" y2="301.5" stroke="rgb(56,45,52)"/><line x1="782.8" y1="305.6" x2="806.5" y2="335.7" stroke="rgb(56,45,52)"/><line x1="435.5" y1="453.8" x2="466.3" y2="486.7" stroke="rgb(56,45,52)"/><line x1="409.7" y1="522.1" x2="424.6" y2="562.6" stroke="rgb(54,46,54)"/><line x1="400.3" y1="479.4" x2="423.6" y2="505.1" stroke="rgb(55,45,52)"/><line x1="512.8" y1="231.7" x2="515.5" y2="244.8" stroke="rgb(55,45,52)"/><line x1="785.6" y1="230.3" x2="785.5" y2="240.1" stroke="rgb(54,45,53)"/><line x1="641.9" y1="247.4" x2="678.8" y2="258.2" stroke="rgb(56,45,52)"/><line x1="737.4" y1="197.4" x2="740.7" y2="199.3" stroke="rgb(53,47,56)"/><line x1="733.5" y1="317.5" x2="753.8" y2="342.6" stroke="rgb(56,45,52)"/><line x1="712.4" y1="279.3" x2="746.0" y2="300.6" stroke="rgb(56,45,52)"/><line x1="710.3" y1="192.7" x2="740.7" y2="199.3" stroke="rgb(53,46,55)"/><line x1="639.2" y1="258.8" x2="678.8" y2="258.2" stroke="rgb(56,45,52)"/><line x1="646.9" y1="465.7" x2="582.0" y2="470.3" stroke="rgb(56,45,52)"/><line x1="595.4" y1="424.9" x2="530.2" y2="437.3" stroke="rgb(56,45,52)"/><line x1="504.5" y1="278.8" x2="493.2" y2="301.5" stroke="rgb(56,45,52)"/><line x1="506.6" y1="513.5" x2="463.0" y2="526.7" stroke="rgb(56,45,52)"/><line x1="556.7" y1="629.3" x2="549.3" y2="649.5" stroke="rgb(54,46,54)"/><line x1="639.4" y1="564.8" x2="574.7" y2="569.8" stroke="rgb(55,45,52)"/><line x1="561.2" y1="201.7" x2="538.5" y2="210.3" stroke="rgb(55,45,53)"/><line x1="696.8" y1="646.0" x2="651.2" y2="659.4" stroke="rgb(53,46,54)"/><line x1="379.9" y1="470.3" x2="389.8" y2="494.9" stroke="rgb(53,46,55)"/><line x1="420.3" y1="343.0" x2="436.2" y2="358.3" stroke="rgb(55,45,52)"/><line x1="660.1" y1="428.2" x2="646.9" y2="465.7" stroke="rgb(56,45,52)"/><line x1="560.1" y1="539.9" x2="574.7" y2="569.8" stroke="rgb(56,45,52)"/><line x1="870.0" y1="381.9" x2="869.3" y2="396.8" stroke="rgb(53,46,55)"/><line x1="641.8" y1="193.2" x2="650.4" y2="204.8" stroke="rgb(54,45,53)"/><line x1="865.4" y1="373.1" x2="860.8" y2="386.2" stroke="rgb(54,46,54)"/><line x1="508.0" y1="197.8" x2="504.3" y2="199.2" stroke="rgb(53,47,56)"/><line x1="470.0" y1="218.3" x2="448.4" y2="228.0" stroke="rgb(53,46,55)"/><line x1="473.8" y1="252.7" x2="440.8" y2="274.6" stroke="rgb(55,45,52)"/><line x1="594.6" y1="245.6" x2="549.3" y2="245.8" stroke="rgb(56,45,52)"/><line x1="473.4" y1="266.0" x2="440.8" y2="274.6" stroke="rgb(55,45,52)"/><line x1="666.3" y1="276.3" x2="622.9" y2="275.8" stroke="rgb(56,45,52)"/><line x1="389.8" y1="494.9" x2="410.7" y2="546.6" stroke="rgb(53,46,55)"/><line x1="715.0" y1="294.6" x2="733.5" y2="317.5" stroke="rgb(56,45,52)"/><line x1="437.7" y1="250.2" x2="417.2" y2="272.6" stroke="rgb(54,46,54)"/><line x1="564.9" y1="311.7" x2="544.4" y2="333.4" stroke="rgb(56,45,52)"/><line x1="709.6" y1="219.4" x2="675.1" y2="232.2" stroke="rgb(55,45,52)"/><line x1="842.6" y1="374.5" x2="823.1" y2="422.8" stroke="rgb(55,45,52)"/><line x1="650.3" y1="313.0" x2="628.8" y2="331.9" stroke="rgb(56,45,52)"/><line x1="677.6" y1="191.8" x2="669.2" y2="197.0" stroke="rgb(54,46,54)"/><line x1="793.9" y1="376.2" x2="738.5" y2="362.8" stroke="rgb(56,45,52)"/><line x1="622.9" y1="275.8" x2="617.4" y2="295.7" stroke="rgb(56,45,52)"/><line x1="641.8" y1="193.2" x2="623.1" y2="198.6" stroke="rgb(54,45,53)"/><line x1="755.1" y1="247.1" x2="798.9" y2="273.4" stroke="rgb(55,45,52)"/><line x1="718.0" y1="259.2" x2="746.0" y2="300.6" stroke="rgb(56,45,52)"/><line x1="865.3" y1="474.4" x2="856.4" y2="444.5" stroke="rgb(54,46,54)"/><line x1="431.4" y1="297.8" x2="408.0" y2="330.2" stroke="rgb(55,45,52)"/><line x1="511.3" y1="477.1" x2="466.3" y2="486.7" stroke="rgb(56,45,52)"/><line x1="407.3" y1="309.1" x2="387.8" y2="345.3" stroke="rgb(54,45,53)"/><line x1="592.9" y1="664.1" x2="666.0" y2="661.5" stroke="rgb(53,46,55)"/><line x1="598.5" y1="620.5" x2="585.0" y2="646.1" stroke="rgb(54,45,53)"/><line x1="666.0" y1="661.5" x2="696.8" y2="646.0" stroke="rgb(53,46,55)"/><line x1="752.3" y1="233.5" x2="797.2" y2="257.6" stroke="rgb(55,45,52)"/><line x1="579.9" y1="597.1" x2="598.5" y2="620.5" stroke="rgb(55,45,52)"/><line x1="385.4" y1="364.9" x2="389.7" y2="381.5" stroke="rgb(54,45,53)"/><line x1="376.2" y1="382.0" x2="377.2" y2="397.8" stroke="rgb(53,46,55)"/><line x1="448.2" y1="235.0" x2="437.7" y2="250.2" stroke="rgb(54,46,54)"/><line x1="549.3" y1="245.8" x2="549.7" y2="259.9" stroke="rgb(56,45,52)"/><line x1="567.3" y1="192.0" x2="561.2" y2="201.7" stroke="rgb(54,45,53)"/><line x1="856.8" y1="499.8" x2="849.6" y2="484.0" stroke="rgb(54,46,54)"/><line x1="481.9" y1="324.1" x2="473.6" y2="368.4" stroke="rgb(56,45,52)"/><line x1="818.7" y1="556.8" x2="802.4" y2="542.4" stroke="rgb(55,45,53)"/><line x1="832.5" y1="266.7" x2="854.4" y2="310.2" stroke="rgb(53,47,56)"/><line x1="626.4" y1="637.7" x2="585.0" y2="646.1" stroke="rgb(54,46,54)"/><line x1="623.0" y1="653.8" x2="604.5" y2="661.3" stroke="rgb(53,46,54)"/><line x1="409.7" y1="522.1" x2="436.6" y2="548.1" stroke="rgb(55,45,53)"/><line x1="585.0" y1="646.1" x2="604.5" y2="661.3" stroke="rgb(53,46,54)"/><line x1="617.4" y1="295.7" x2="607.4" y2="311.1" stroke="rgb(56,45,52)"/><line x1="785.6" y1="230.3" x2="813.6" y2="251.2" stroke="rgb(54,46,54)"/><line x1="758.9" y1="222.8" x2="785.5" y2="240.1" stroke="rgb(55,45,53)"/><line x1="416.3" y1="430.4" x2="400.3" y2="479.4" stroke="rgb(55,45,52)"/><line x1="481.9" y1="324.1" x2="459.4" y2="350.7" stroke="rgb(56,45,52)"/><line x1="454.6" y1="330.4" x2="436.2" y2="358.3" stroke="rgb(56,45,52)"/><line x1="726.3" y1="245.0" x2="755.1" y2="247.1" stroke="rgb(55,45,52)"/><line x1="567.3" y1="192.0" x2="542.4" y2="195.7" stroke="rgb(54,46,54)"/><line x1="797.2" y1="257.6" x2="755.1" y2="247.1" stroke="rgb(55,45,52)"/><line x1="718.0" y1="259.2" x2="678.8" y2="258.2" stroke="rgb(56,45,52)"/><line x1="781.0" y1="571.9" x2="765.0" y2="607.4" stroke="rgb(54,45,53)"/><line x1="646.9" y1="465.7" x2="631.4" y2="505.4" stroke="rgb(56,45,52)"/><line x1="863.9" y1="342.9" x2="858.2" y2="327.7" stroke="rgb(53,46,55)"/><line x1="866.3" y1="355.8" x2="870.0" y2="381.9" stroke="rgb(53,46,55)"/><line x1="858.2" y1="327.7" x2="845.3" y2="316.3" stroke="rgb(54,46,54)"/><line x1="782.8" y1="305.6" x2="746.0" y2="300.6" stroke="rgb(56,45,52)"/><line x1="746.0" y1="300.6" x2="715.0" y2="294.6" stroke="rgb(56,45,52)"/><line x1="851.0" y1="358.4" x2="828.5" y2="344.5" stroke="rgb(55,45,52)"/><line x1="532.4" y1="613.2" x2="579.9" y2="597.1" stroke="rgb(55,45,52)"/><line x1="710.3" y1="192.7" x2="677.6" y2="191.8" stroke="rgb(53,46,54)"/><line x1="828.5" y1="344.5" x2="806.5" y2="335.7" stroke="rgb(55,45,52)"/><line x1="503.7" y1="547.0" x2="574.7" y2="569.8" stroke="rgb(56,45,52)"/><line x1="865.4" y1="373.1" x2="869.3" y2="396.8" stroke="rgb(53,46,54)"/><line x1="473.8" y1="252.7" x2="473.4" y2="266.0" stroke="rgb(55,45,52)"/><line x1="792.9" y1="224.9" x2="813.6" y2="251.2" stroke="rgb(53,46,54)"/><line x1="438.5" y1="260.7" x2="440.8" y2="274.6" stroke="rgb(55,45,53)"/><line x1="818.9" y1="460.1" x2="778.0" y2="451.1" stroke="rgb(56,45,52)"/><line x1="712.4" y1="279.3" x2="671.0" y2="294.0" stroke="rgb(56,45,52)"/><line x1="765.0" y1="522.5" x2="707.4" y2="506.8" stroke="rgb(56,45,52)"/><line x1="707.4" y1="506.8" x2="631.4" y2="505.4" stroke="rgb(56,45,52)"/><line x1="749.3" y1="631.6" x2="765.0" y2="607.4" stroke="rgb(53,46,55)"/><line x1="759.0" y1="265.3" x2="789.6" y2="289.9" stroke="rgb(55,45,52)"/><line x1="765.0" y1="607.4" x2="748.8" y2="592.7" stroke="rgb(54,45,53)"/><line x1="738.5" y1="362.8" x2="720.2" y2="394.0" stroke="rgb(56,45,52)"/><line x1="630.4" y1="189.0" x2="589.3" y2="188.9" stroke="rgb(53,47,56)"/><line x1="578.5" y1="293.6" x2="617.4" y2="295.7" stroke="rgb(56,45,52)"/><line x1="701.9" y1="196.5" x2="722.7" y2="202.9" stroke="rgb(54,45,53)"/><line x1="832.5" y1="266.7" x2="836.2" y2="277.8" stroke="rgb(53,46,55)"/><line x1="652.7" y1="212.0" x2="613.2" y2="212.8" stroke="rgb(55,45,52)"/><line x1="389.8" y1="494.9" x2="424.6" y2="562.6" stroke="rgb(54,46,54)"/><line x1="641.8" y1="193.2" x2="669.2" y2="197.0" stroke="rgb(54,45,53)"/><line x1="396.8" y1="354.6" x2="389.7" y2="381.5" stroke="rgb(54,45,53)"/><line x1="613.2" y1="212.8" x2="578.4" y2="210.7" stroke="rgb(55,45,52)"/><line x1="584.8" y1="277.5" x2="617.4" y2="295.7" stroke="rgb(56,45,52)"/><line x1="594.5" y1="190.1" x2="567.3" y2="192.0" stroke="rgb(53,46,54)"/><line x1="483.4" y1="444.0" x2="435.5" y2="453.8" stroke="rgb(56,45,52)"/><line x1="407.3" y1="309.1" x2="408.0" y2="330.2" stroke="rgb(55,45,53)"/><line x1="639.2" y1="258.8" x2="590.6" y2="259.9" stroke="rgb(56,45,52)"/><line x1="481.6" y1="603.2" x2="489.0" y2="626.2" stroke="rgb(53,46,54)"/><line x1="590.6" y1="259.9" x2="549.7" y2="259.9" stroke="rgb(56,45,52)"/><line x1="387.8" y1="345.3" x2="396.8" y2="354.6" stroke="rgb(54,45,53)"/><line x1="822.2" y1="301.5" x2="789.6" y2="289.9" stroke="rgb(55,45,52)"/><line x1="789.6" y1="289.9" x2="762.1" y2="282.7" stroke="rgb(56,45,52)"/><line x1="511.3" y1="477.1" x2="506.6" y2="513.5" stroke="rgb(56,45,52)"/><line x1="839.6" y1="328.5" x2="851.0" y2="358.4" stroke="rgb(55,45,53)"/><line x1="578.5" y1="293.6" x2="535.2" y2="296.4" stroke="rgb(56,45,52)"/><line x1="715.0" y1="294.6" x2="671.0" y2="294.0" stroke="rgb(56,45,52)"/><line x1="556.7" y1="629.3" x2="598.5" y2="620.5" stroke="rgb(54,45,53)"/><line x1="531.3" y1="648.2" x2="592.9" y2="664.1" stroke="rgb(53,47,56)"/><line x1="671.0" y1="294.0" x2="617.4" y2="295.7" stroke="rgb(56,45,52)"/><line x1="806.5" y1="335.7" x2="776.5" y2="327.2" stroke="rgb(56,45,52)"/><line x1="450.3" y1="582.3" x2="481.6" y2="603.2" stroke="rgb(54,45,53)"/><line x1="814.0" y1="244.4" x2="813.6" y2="251.2" stroke="rgb(53,46,54)"/><line x1="417.2" y1="272.6" x2="397.2" y2="303.5" stroke="rgb(54,46,54)"/><line x1="402.4" y1="286.1" x2="389.2" y2="317.3" stroke="rgb(53,47,56)"/><line x1="515.5" y1="244.8" x2="473.8" y2="252.7" stroke="rgb(55,45,52)"/><line x1="828.5" y1="344.5" x2="826.4" y2="387.1" stroke="rgb(55,45,52)"/><line x1="792.9" y1="224.9" x2="814.0" y2="244.4" stroke="rgb(53,46,55)"/><line x1="535.2" y1="296.4" x2="518.5" y2="318.7" stroke="rgb(56,45,52)"/><line x1="551.4" y1="274.8" x2="504.5" y2="278.8" stroke="rgb(56,45,52)"/><line x1="825.2" y1="284.7" x2="845.3" y2="316.3" stroke="rgb(54,45,53)"/><line x1="493.2" y1="301.5" x2="481.9" y2="324.1" stroke="rgb(56,45,52)"/><line x1="617.4" y1="295.7" x2="650.3" y2="313.0" stroke="rgb(56,45,52)"/><line x1="387.8" y1="345.3" x2="379.8" y2="355.0" stroke="rgb(53,46,54)"/><line x1="589.3" y1="355.3" x2="587.5" y2="387.5" stroke="rgb(56,45,52)"/><line x1="623.1" y1="198.6" x2="598.4" y2="204.6" stroke="rgb(55,45,53)"/><line x1="778.0" y1="451.1" x2="723.5" y2="472.7" stroke="rgb(56,45,52)"/><line x1="772.3" y1="480.9" x2="707.4" y2="506.8" stroke="rgb(56,45,52)"/><line x1="564.9" y1="311.7" x2="607.4" y2="311.1" stroke="rgb(56,45,52)"/><line x1="631.4" y1="505.4" x2="630.2" y2="532.0" stroke="rgb(56,45,52)"/><line x1="789.8" y1="352.5" x2="753.8" y2="342.6" stroke="rgb(56,45,52)"/><line x1="454.6" y1="330.4" x2="459.4" y2="350.7" stroke="rgb(56,45,52)"/><line x1="589.9" y1="220.9" x2="597.8" y2="232.9" stroke="rgb(55,45,52)"/><line x1="753.8" y1="342.6" x2="719.5" y2="337.5" stroke="rgb(56,45,52)"/><line x1="703.2" y1="542.6" x2="690.7" y2="572.1" stroke="rgb(56,45,52)"/><line x1="860.8" y1="386.2" x2="842.6" y2="374.5" stroke="rgb(55,45,53)"/><line x1="710.3" y1="192.7" x2="722.7" y2="202.9" stroke="rgb(54,46,54)"/><line x1="567.3" y1="192.0" x2="586.4" y2="196.8" stroke="rgb(54,46,54)"/><line x1="538.5" y1="210.3" x2="504.0" y2="210.5" stroke="rgb(55,45,53)"/><line x1="790.4" y1="407.0" x2="720.2" y2="394.0" stroke="rgb(56,45,52)"/><line x1="525.4" y1="193.4" x2="542.4" y2="195.7" stroke="rgb(53,46,54)"/><line x1="389.8" y1="494.9" x2="396.1" y2="517.5" stroke="rgb(53,47,56)"/><line x1="384.1" y1="334.6" x2="379.8" y2="355.0" stroke="rgb(53,46,55)"/><line x1="578.4" y1="210.7" x2="589.9" y2="220.9" stroke="rgb(55,45,52)"/><line x1="860.8" y1="386.2" x2="859.1" y2="408.4" stroke="rgb(54,45,53)"/><line x1="650.4" y1="204.8" x2="652.7" y2="212.0" stroke="rgb(55,45,52)"/><line x1="782.8" y1="305.6" x2="776.5" y2="327.2" stroke="rgb(56,45,52)"/><line x1="712.4" y1="279.3" x2="666.3" y2="276.3" stroke="rgb(56,45,52)"/><line x1="825.2" y1="284.7" x2="822.2" y2="301.5" stroke="rgb(55,45,53)"/><line x1="746.0" y1="300.6" x2="733.5" y2="317.5" stroke="rgb(56,45,52)"/><line x1="400.3" y1="479.4" x2="409.7" y2="522.1" stroke="rgb(54,45,53)"/><line x1="623.1" y1="198.6" x2="586.4" y2="196.8" stroke="rgb(54,45,53)"/><line x1="598.4" y1="204.6" x2="561.2" y2="201.7" stroke="rgb(55,45,53)"/><line x1="710.3" y1="192.7" x2="701.9" y2="196.5" stroke="rgb(54,46,54)"/><line x1="752.3" y1="233.5" x2="717.3" y2="232.6" stroke="rgb(55,45,52)"/><line x1="613.2" y1="212.8" x2="597.8" y2="232.9" stroke="rgb(55,45,52)"/><line x1="417.2" y1="272.6" x2="402.4" y2="286.1" stroke="rgb(53,46,54)"/><line x1="742.5" y1="210.9" x2="709.6" y2="219.4" stroke="rgb(55,45,53)"/><line x1="814.0" y1="244.4" x2="836.2" y2="277.8" stroke="rgb(53,46,55)"/><line x1="738.5" y1="362.8" x2="790.4" y2="407.0" stroke="rgb(56,45,52)"/><line x1="673.3" y1="354.1" x2="720.2" y2="394.0" stroke="rgb(56,45,52)"/><line x1="468.3" y1="286.8" x2="431.4" y2="297.8" stroke="rgb(55,45,52)"/><line x1="696.8" y1="646.0" x2="657.5" y2="646.2" stroke="rgb(54,46,54)"/><line x1="433.5" y1="314.6" x2="420.3" y2="343.0" stroke="rgb(55,45,52)"/><line x1="677.8" y1="625.0" x2="626.4" y2="637.7" stroke="rgb(54,45,53)"/><line x1="700.8" y1="608.0" x2="677.8" y2="625.0" stroke="rgb(54,45,53)"/><line x1="813.6" y1="251.2" x2="836.2" y2="277.8" stroke="rgb(54,46,54)"/><line x1="385.4" y1="364.9" x2="376.2" y2="382.0" stroke="rgb(53,46,54)"/><line x1="506.6" y1="513.5" x2="503.7" y2="547.0" stroke="rgb(56,45,52)"/><line x1="549.3" y1="649.5" x2="604.5" y2="661.3" stroke="rgb(53,46,55)"/><line x1="396.8" y1="354.6" x2="410.2" y2="369.6" stroke="rgb(55,45,52)"/><line x1="513.3" y1="219.0" x2="512.8" y2="231.7" stroke="rgb(55,45,52)"/><line x1="669.1" y1="333.7" x2="628.8" y2="331.9" stroke="rgb(56,45,52)"/><line x1="407.3" y1="309.1" x2="396.8" y2="354.6" stroke="rgb(54,45,53)"/><line x1="653.0" y1="387.8" x2="587.5" y2="387.5" stroke="rgb(56,45,52)"/><line x1="792.6" y1="593.7" x2="781.0" y2="571.9" stroke="rgb(54,45,53)"/><line x1="871.7" y1="429.6" x2="865.3" y2="474.4" stroke="rgb(53,47,56)"/><line x1="531.3" y1="648.2" x2="549.3" y2="649.5" stroke="rgb(53,46,55)"/><line x1="715.0" y1="294.6" x2="693.5" y2="313.4" stroke="rgb(56,45,52)"/><line x1="671.0" y1="294.0" x2="650.3" y2="313.0" stroke="rgb(56,45,52)"/><line x1="865.3" y1="474.4" x2="856.8" y2="499.8" stroke="rgb(53,46,55)"/><line x1="814.0" y1="244.4" x2="832.5" y2="266.7" stroke="rgb(53,46,55)"/><line x1="518.5" y1="318.7" x2="505.5" y2="338.5" stroke="rgb(56,45,52)"/><line x1="772.8" y1="217.8" x2="742.5" y2="210.9" stroke="rgb(54,45,53)"/><line x1="668.2" y1="221.9" x2="635.2" y2="233.1" stroke="rgb(55,45,52)"/><line x1="402.4" y1="286.1" x2="397.2" y2="303.5" stroke="rgb(53,46,55)"/><line x1="522.4" y1="201.7" x2="496.2" y2="205.0" stroke="rgb(54,46,54)"/><line x1="630.4" y1="189.0" x2="669.5" y2="189.9" stroke="rgb(53,46,55)"/><line x1="785.6" y1="230.3" x2="758.9" y2="222.8" stroke="rgb(54,45,53)"/><line x1="675.1" y1="232.2" x2="635.2" y2="233.1" stroke="rgb(56,45,52)"/><line x1="836.2" y1="277.8" x2="819.0" y2="267.0" stroke="rgb(54,46,54)"/><line x1="690.7" y1="572.1" x2="639.4" y2="564.8" stroke="rgb(55,45,52)"/><line x1="560.1" y1="539.9" x2="503.7" y2="547.0" stroke="rgb(56,45,52)"/><line x1="493.2" y1="301.5" x2="518.5" y2="318.7" stroke="rgb(56,45,52)"/><line x1="652.7" y1="212.0" x2="639.8" y2="221.7" stroke="rgb(55,45,52)"/><line x1="589.3" y1="355.3" x2="653.0" y2="387.8" stroke="rgb(56,45,52)"/><line x1="526.2" y1="357.4" x2="587.5" y2="387.5" stroke="rgb(56,45,52)"/><line x1="792.6" y1="593.7" x2="749.3" y2="631.6" stroke="rgb(53,46,55)"/><line x1="433.5" y1="314.6" x2="436.2" y2="358.3" stroke="rgb(55,45,52)"/><line x1="752.3" y1="233.5" x2="755.1" y2="247.1" stroke="rgb(55,45,52)"/><line x1="722.7" y1="202.9" x2="702.3" y2="209.9" stroke="rgb(54,45,53)"/><line x1="408.0" y1="330.2" x2="410.2" y2="369.6" stroke="rgb(55,45,52)"/><line x1="651.2" y1="659.4" x2="604.5" y2="661.3" stroke="rgb(53,46,55)"/><line x1="376.2" y1="382.0" x2="374.1" y2="409.3" stroke="rgb(53,47,56)"/><line x1="448.2" y1="235.0" x2="418.7" y2="261.2" stroke="rgb(53,46,54)"/><line x1="389.2" y1="406.2" x2="377.3" y2="421.7" stroke="rgb(54,45,53)"/><line x1="842.6" y1="374.5" x2="859.1" y2="408.4" stroke="rgb(55,45,53)"/><line x1="493.2" y1="301.5" x2="461.1" y2="307.5" stroke="rgb(56,45,52)"/><line x1="826.4" y1="387.1" x2="823.1" y2="422.8" stroke="rgb(55,45,52)"/><line x1="758.9" y1="204.7" x2="754.8" y2="205.7" stroke="rgb(53,46,55)"/><line x1="746.0" y1="300.6" x2="776.5" y2="327.2" stroke="rgb(56,45,52)"/><line x1="798.9" y1="273.4" x2="822.2" y2="301.5" stroke="rgb(55,45,52)"/><line x1="660.9" y1="188.8" x2="630.4" y2="189.0" stroke="rgb(53,47,56)"/><line x1="473.9" y1="237.0" x2="440.8" y2="274.6" stroke="rgb(55,45,52)"/><line x1="693.5" y1="313.4" x2="650.3" y2="313.0" stroke="rgb(56,45,52)"/><line x1="740.7" y1="199.3" x2="754.8" y2="205.7" stroke="rgb(53,46,54)"/><line x1="707.0" y1="651.3" x2="696.8" y2="646.0" stroke="rgb(53,46,55)"/><line x1="758.9" y1="222.8" x2="752.3" y2="233.5" stroke="rgb(55,45,52)"/><line x1="650.3" y1="313.0" x2="607.4" y2="311.1" stroke="rgb(56,45,52)"/><line x1="748.8" y1="592.7" x2="700.8" y2="608.0" stroke="rgb(55,45,53)"/><line x1="702.3" y1="209.9" x2="652.7" y2="212.0" stroke="rgb(55,45,52)"/><line x1="530.2" y1="437.3" x2="483.4" y2="444.0" stroke="rgb(56,45,52)"/><line x1="742.5" y1="210.9" x2="758.9" y2="222.8" stroke="rgb(54,45,53)"/><line x1="463.0" y1="526.7" x2="436.6" y2="548.1" stroke="rgb(55,45,52)"/><line x1="436.6" y1="548.1" x2="424.6" y2="562.6" stroke="rgb(54,45,53)"/><line x1="574.7" y1="569.8" x2="507.9" y2="586.4" stroke="rgb(55,45,52)"/><line x1="781.0" y1="571.9" x2="748.8" y2="592.7" stroke="rgb(55,45,52)"/><line x1="780.3" y1="215.7" x2="792.9" y2="224.9" stroke="rgb(53,47,56)"/><line x1="433.5" y1="314.6" x2="454.6" y2="330.4" stroke="rgb(56,45,52)"/><line x1="677.8" y1="625.0" x2="657.5" y2="646.2" stroke="rgb(54,46,54)"/><line x1="507.9" y1="586.4" x2="481.6" y2="603.2" stroke="rgb(55,45,53)"/><line x1="418.2" y1="389.0" x2="416.3" y2="430.4" stroke="rgb(55,45,52)"/><line x1="755.6" y1="554.3" x2="690.7" y2="572.1" stroke="rgb(55,45,52)"/><line x1="754.8" y1="205.7" x2="772.8" y2="217.8" stroke="rgb(54,46,54)"/><line x1="866.3" y1="355.8" x2="865.4" y2="373.1" stroke="rgb(53,46,55)"/><line x1="408.0" y1="330.2" x2="420.3" y2="343.0" stroke="rgb(55,45,52)"/><line x1="506.6" y1="513.5" x2="560.1" y2="539.9" stroke="rgb(56,45,52)"/><line x1="504.3" y1="199.2" x2="522.4" y2="201.7" stroke="rgb(54,46,54)"/><line x1="549.3" y1="649.5" x2="585.0" y2="646.1" stroke="rgb(53,46,54)"/><line x1="758.9" y1="204.7" x2="740.7" y2="199.3" stroke="rgb(53,46,55)"/><line x1="532.4" y1="613.2" x2="556.7" y2="629.3" stroke="rgb(54,45,53)"/><line x1="463.0" y1="526.7" x2="503.7" y2="547.0" stroke="rgb(56,45,52)"/><line x1="780.3" y1="215.7" x2="754.8" y2="205.7" stroke="rgb(53,46,55)"/><line x1="514.9" y1="632.7" x2="549.3" y2="649.5" stroke="rgb(53,46,54)"/><line x1="503.7" y1="547.0" x2="507.9" y2="586.4" stroke="rgb(55,45,52)"/><line x1="754.8" y1="205.7" x2="722.7" y2="202.9" stroke="rgb(54,46,54)"/><line x1="669.5" y1="189.9" x2="677.6" y2="191.8" stroke="rgb(53,46,54)"/><line x1="438.5" y1="260.7" x2="417.2" y2="288.5" stroke="rgb(54,45,53)"/><line x1="549.3" y1="245.8" x2="515.5" y2="244.8" stroke="rgb(56,45,52)"/><line x1="440.8" y1="274.6" x2="417.2" y2="288.5" stroke="rgb(55,45,53)"/><line x1="854.4" y1="310.2" x2="858.2" y2="327.7" stroke="rgb(53,46,55)"/><line x1="622.9" y1="275.8" x2="584.8" y2="277.5" stroke="rgb(56,45,52)"/><line x1="759.0" y1="265.3" x2="762.1" y2="282.7" stroke="rgb(56,45,52)"/><line x1="459.4" y1="350.7" x2="458.2" y2="411.6" stroke="rgb(56,45,52)"/><line x1="578.5" y1="293.6" x2="564.9" y2="311.7" stroke="rgb(56,45,52)"/><line x1="841.4" y1="294.5" x2="845.3" y2="316.3" stroke="rgb(54,45,53)"/><line x1="584.8" y1="277.5" x2="551.4" y2="274.8" stroke="rgb(56,45,52)"/><line x1="433.5" y1="314.6" x2="408.0" y2="330.2" stroke="rgb(55,45,52)"/><line x1="718.0" y1="259.2" x2="712.4" y2="279.3" stroke="rgb(56,45,52)"/><line x1="701.9" y1="196.5" x2="680.3" y2="202.0" stroke="rgb(54,45,53)"/><line x1="589.3" y1="188.9" x2="556.5" y2="189.8" stroke="rgb(53,47,56)"/><line x1="671.0" y1="294.0" x2="693.5" y2="313.4" stroke="rgb(56,45,52)"/><line x1="481.9" y1="324.1" x2="454.6" y2="330.4" stroke="rgb(56,45,52)"/><line x1="669.2" y1="197.0" x2="650.4" y2="204.8" stroke="rgb(54,45,53)"/><line x1="675.1" y1="232.2" x2="726.3" y2="245.0" stroke="rgb(56,45,52)"/><line x1="518.5" y1="318.7" x2="544.4" y2="333.4" stroke="rgb(56,45,52)"/><line x1="668.2" y1="221.9" x2="675.1" y2="232.2" stroke="rgb(55,45,52)"/><line x1="814.2" y1="357.6" x2="789.8" y2="352.5" stroke="rgb(56,45,52)"/><line x1="871.8" y1="408.3" x2="869.3" y2="396.8" stroke="rgb(53,46,55)"/><line x1="639.8" y1="221.7" x2="635.2" y2="233.1" stroke="rgb(55,45,52)"/><line x1="639.4" y1="564.8" x2="579.9" y2="597.1" stroke="rgb(55,45,52)"/><line x1="869.3" y1="396.8" x2="860.8" y2="386.2" stroke="rgb(54,46,54)"/><line x1="585.6" y1="331.5" x2="589.3" y2="355.3" stroke="rgb(56,45,52)"/><line x1="856.4" y1="444.5" x2="823.1" y2="422.8" stroke="rgb(55,45,52)"/><line x1="652.7" y1="212.0" x2="668.2" y2="221.9" stroke="rgb(55,45,52)"/><line x1="400.3" y1="479.4" x2="389.8" y2="494.9" stroke="rgb(54,45,53)"/><line x1="424.6" y1="562.6" x2="447.1" y2="589.3" stroke="rgb(53,47,56)"/><line x1="613.2" y1="212.8" x2="639.8" y2="221.7" stroke="rgb(55,45,52)"/><line x1="639.2" y1="258.8" x2="622.9" y2="275.8" stroke="rgb(56,45,52)"/><line x1="387.8" y1="345.3" x2="385.4" y2="364.9" stroke="rgb(54,46,54)"/><line x1="722.7" y1="202.9" x2="742.5" y2="210.9" stroke="rgb(54,45,53)"/></g>
<defs><clipPath id="dc"><path d="M868.6,423.3 L873.0,427.1 L876.8,431.0 L880.0,435.0 L882.5,438.9 L884.3,442.9 L885.5,447.0 L886.0,451.0 L885.8,455.1 L885.0,459.1 L883.5,463.1 L881.3,467.1 L878.4,471.1 L874.9,475.0 L870.8,478.8 L866.1,482.6 L860.7,486.3 L854.7,489.9 L848.1,493.4 L841.0,496.9 L833.2,500.1 L825.0,503.3 L816.2,506.4 L807.0,509.3 L797.3,512.0 L787.1,514.6 L776.5,517.0 L765.5,519.3 L754.2,521.4 L742.5,523.3 L730.6,525.1 L718.3,526.6 L705.8,528.0 L693.1,529.2 L680.3,530.1 L667.2,530.9 L654.1,531.5 L640.9,531.8 L627.7,532.0 L614.4,531.9 L601.2,531.7 L588.0,531.2 L574.9,530.6 L561.9,529.7 L549.1,528.7 L536.5,527.4 L524.2,526.0 L512.0,524.3 L500.2,522.5 L488.7,520.5 L477.5,518.3 L466.7,516.0 L456.3,513.5 L446.3,510.8 L436.8,508.0 L427.8,505.0 L419.2,501.9 L411.2,498.7 L403.8,495.3 L396.9,491.9 L390.6,488.3 L384.8,484.7 L379.7,480.9 L375.3,477.1 L371.4,473.2 L368.2,469.3 L365.7,465.3 L363.8,461.3 L362.6,457.3 L362.0,453.3 L362.2,449.2 L363.0,445.2 L364.4,441.1 L366.6,437.1 L369.3,433.2 L372.8,429.3 L376.9,425.4 L381.6,421.6 L386.9,417.9 L392.9,414.3 L399.4,410.8 C401.2,405.6 410.3,387.8 417.5,376.0 C424.7,364.2 431.6,353.8 441.0,341.0 C450.4,328.2 463.0,310.3 474.0,299.0 C485.0,287.7 496.2,279.5 507.0,273.0 C517.8,266.5 526.8,264.5 539.0,260.0 C551.2,255.5 567.5,250.5 580.0,246.0 C592.5,241.5 605.2,235.2 614.0,233.0 C622.8,230.8 629.8,233.0 633.0,233.0 C634.5,233.7 638.8,234.8 642.0,237.0 C645.2,239.2 648.2,245.0 652.0,246.0 C655.8,247.0 660.3,243.7 665.0,243.0 C669.7,242.3 674.8,241.2 680.0,242.0 C685.2,242.8 690.8,245.8 696.0,248.0 C701.2,250.2 705.0,251.5 711.0,255.0 C717.0,258.5 724.2,263.2 732.0,269.0 C739.8,274.8 749.3,283.0 758.0,290.0 C766.7,297.0 775.3,303.7 784.0,311.0 C792.7,318.3 801.3,325.0 810.0,334.0 C818.7,343.0 829.0,355.4 836.0,365.0 C843.0,374.6 847.7,382.3 852.0,391.5 C856.3,400.7 859.2,414.7 862.0,420.0 C864.8,425.3 867.5,422.8 868.6,423.3  Z"/></clipPath></defs>
<path d="M868.6,423.3 L873.0,427.1 L876.8,431.0 L880.0,435.0 L882.5,438.9 L884.3,442.9 L885.5,447.0 L886.0,451.0 L885.8,455.1 L885.0,459.1 L883.5,463.1 L881.3,467.1 L878.4,471.1 L874.9,475.0 L870.8,478.8 L866.1,482.6 L860.7,486.3 L854.7,489.9 L848.1,493.4 L841.0,496.9 L833.2,500.1 L825.0,503.3 L816.2,506.4 L807.0,509.3 L797.3,512.0 L787.1,514.6 L776.5,517.0 L765.5,519.3 L754.2,521.4 L742.5,523.3 L730.6,525.1 L718.3,526.6 L705.8,528.0 L693.1,529.2 L680.3,530.1 L667.2,530.9 L654.1,531.5 L640.9,531.8 L627.7,532.0 L614.4,531.9 L601.2,531.7 L588.0,531.2 L574.9,530.6 L561.9,529.7 L549.1,528.7 L536.5,527.4 L524.2,526.0 L512.0,524.3 L500.2,522.5 L488.7,520.5 L477.5,518.3 L466.7,516.0 L456.3,513.5 L446.3,510.8 L436.8,508.0 L427.8,505.0 L419.2,501.9 L411.2,498.7 L403.8,495.3 L396.9,491.9 L390.6,488.3 L384.8,484.7 L379.7,480.9 L375.3,477.1 L371.4,473.2 L368.2,469.3 L365.7,465.3 L363.8,461.3 L362.6,457.3 L362.0,453.3 L362.2,449.2 L363.0,445.2 L364.4,441.1 L366.6,437.1 L369.3,433.2 L372.8,429.3 L376.9,425.4 L381.6,421.6 L386.9,417.9 L392.9,414.3 L399.4,410.8 C401.2,405.6 410.3,387.8 417.5,376.0 C424.7,364.2 431.6,353.8 441.0,341.0 C450.4,328.2 463.0,310.3 474.0,299.0 C485.0,287.7 496.2,279.5 507.0,273.0 C517.8,266.5 526.8,264.5 539.0,260.0 C551.2,255.5 567.5,250.5 580.0,246.0 C592.5,241.5 605.2,235.2 614.0,233.0 C622.8,230.8 629.8,233.0 633.0,233.0 C634.5,233.7 638.8,234.8 642.0,237.0 C645.2,239.2 648.2,245.0 652.0,246.0 C655.8,247.0 660.3,243.7 665.0,243.0 C669.7,242.3 674.8,241.2 680.0,242.0 C685.2,242.8 690.8,245.8 696.0,248.0 C701.2,250.2 705.0,251.5 711.0,255.0 C717.0,258.5 724.2,263.2 732.0,269.0 C739.8,274.8 749.3,283.0 758.0,290.0 C766.7,297.0 775.3,303.7 784.0,311.0 C792.7,318.3 801.3,325.0 810.0,334.0 C818.7,343.0 829.0,355.4 836.0,365.0 C843.0,374.6 847.7,382.3 852.0,391.5 C856.3,400.7 859.2,414.7 862.0,420.0 C864.8,425.3 867.5,422.8 868.6,423.3  Z" fill="#2356d2"/>
<defs><filter id="bl" x="-20%" y="-20%" width="140%" height="140%"><feGaussianBlur stdDeviation="5"/></filter><linearGradient id="mg" gradientUnits="userSpaceOnUse" x1="0" y1="384" x2="0" y2="520"><stop offset="0" stop-color="#fff"/><stop offset="0.55" stop-color="#eee"/><stop offset="1" stop-color="#999"/></linearGradient><mask id="im" maskUnits="userSpaceOnUse" x="262" y="79" width="754" height="593"><path d="M484,384 C560,381 690,381 752,386 C762,420 778,465 795,500 C740,512 690,518 624,519 C540,517 470,505 418,484 C430,460 460,420 484,384 Z" fill="url(#mg)" filter="url(#bl)"/></mask></defs>
<g clip-path="url(#dc)"><g mask="url(#im)"><g fill="none" stroke="#2c2c3c" stroke-width="1.1"><path d="M372.0,450.0 A250.0,70.0 0 0 0 872.0,450.0"/><path d="M373.6,448.4 A248.4,69.6 0 0 0 870.4,448.4"/><path d="M375.3,446.9 A246.7,69.1 0 0 0 868.7,446.9"/><path d="M376.9,445.3 A245.1,68.7 0 0 0 867.1,445.3"/><path d="M378.6,443.8 A243.4,68.2 0 0 0 865.4,443.8"/><path d="M380.2,442.2 A241.8,67.8 0 0 0 863.8,442.2"/><path d="M381.9,440.7 A240.1,67.3 0 0 0 862.1,440.7"/><path d="M383.5,439.1 A238.5,66.9 0 0 0 860.5,439.1"/><path d="M385.1,437.6 A236.9,66.4 0 0 0 858.9,437.6"/><path d="M386.8,436.0 A235.2,66.0 0 0 0 857.2,436.0"/><path d="M388.4,434.5 A233.6,65.5 0 0 0 855.6,434.5"/><path d="M390.1,432.9 A231.9,65.1 0 0 0 853.9,432.9"/><path d="M391.7,431.4 A230.3,64.6 0 0 0 852.3,431.4"/><path d="M393.3,429.8 A228.7,64.2 0 0 0 850.7,429.8"/><path d="M395.0,428.3 A227.0,63.7 0 0 0 849.0,428.3"/><path d="M396.6,426.7 A225.4,63.3 0 0 0 847.4,426.7"/><path d="M398.3,425.2 A223.7,62.8 0 0 0 845.7,425.2"/><path d="M399.9,423.6 A222.1,62.4 0 0 0 844.1,423.6"/><path d="M401.6,422.1 A220.4,61.9 0 0 0 842.4,422.1"/><path d="M403.2,420.5 A218.8,61.5 0 0 0 840.8,420.5"/><path d="M404.8,419.0 A217.2,61.0 0 0 0 839.2,419.0"/><path d="M406.5,417.4 A215.5,60.6 0 0 0 837.5,417.4"/><path d="M408.1,415.9 A213.9,60.1 0 0 0 835.9,415.9"/><path d="M409.8,414.3 A212.2,59.7 0 0 0 834.2,414.3"/><path d="M411.4,412.7 A210.6,59.3 0 0 0 832.6,412.7"/><path d="M413.0,411.2 A209.0,58.8 0 0 0 831.0,411.2"/><path d="M414.7,409.6 A207.3,58.4 0 0 0 829.3,409.6"/><path d="M416.3,408.1 A205.7,57.9 0 0 0 827.7,408.1"/><path d="M418.0,406.5 A204.0,57.5 0 0 0 826.0,406.5"/><path d="M419.6,405.0 A202.4,57.0 0 0 0 824.4,405.0"/><path d="M421.3,403.4 A200.7,56.6 0 0 0 822.7,403.4"/><path d="M422.9,401.9 A199.1,56.1 0 0 0 821.1,401.9"/><path d="M424.5,400.3 A197.5,55.7 0 0 0 819.5,400.3"/><path d="M426.2,398.8 A195.8,55.2 0 0 0 817.8,398.8"/><path d="M427.8,397.2 A194.2,54.8 0 0 0 816.2,397.2"/><path d="M429.5,395.7 A192.5,54.3 0 0 0 814.5,395.7"/><path d="M431.1,394.1 A190.9,53.9 0 0 0 812.9,394.1"/><path d="M432.7,392.6 A189.3,53.4 0 0 0 811.3,392.6"/><path d="M434.4,391.0 A187.6,53.0 0 0 0 809.6,391.0"/><path d="M436.0,389.5 A186.0,52.5 0 0 0 808.0,389.5"/><path d="M437.7,387.9 A184.3,52.1 0 0 0 806.3,387.9"/><path d="M439.3,386.4 A182.7,51.6 0 0 0 804.7,386.4"/><path d="M441.0,384.8 A181.0,51.2 0 0 0 803.0,384.8"/><path d="M442.6,383.3 A179.4,50.7 0 0 0 801.4,383.3"/><path d="M444.2,381.7 A177.8,50.3 0 0 0 799.8,381.7"/><path d="M445.9,380.1 A176.1,49.9 0 0 0 798.1,380.1"/><path d="M447.5,378.6 A174.5,49.4 0 0 0 796.5,378.6"/><path d="M449.2,377.0 A172.8,49.0 0 0 0 794.8,377.0"/><path d="M450.8,375.5 A171.2,48.5 0 0 0 793.2,375.5"/><path d="M452.4,373.9 A169.6,48.1 0 0 0 791.6,373.9"/><path d="M454.1,372.4 A167.9,47.6 0 0 0 789.9,372.4"/><path d="M455.7,370.8 A166.3,47.2 0 0 0 788.3,370.8"/><path d="M457.4,369.3 A164.6,46.7 0 0 0 786.6,369.3"/><path d="M459.0,367.7 A163.0,46.3 0 0 0 785.0,367.7"/><path d="M460.7,366.2 A161.3,45.8 0 0 0 783.3,366.2"/><path d="M462.3,364.6 A159.7,45.4 0 0 0 781.7,364.6"/><path d="M463.9,363.1 A158.1,44.9 0 0 0 780.1,363.1"/><path d="M465.6,361.5 A156.4,44.5 0 0 0 778.4,361.5"/><path d="M467.2,360.0 A154.8,44.0 0 0 0 776.8,360.0"/><path d="M468.9,358.4 A153.1,43.6 0 0 0 775.1,358.4"/><path d="M470.5,356.9 A151.5,43.1 0 0 0 773.5,356.9"/><path d="M472.1,355.3 A149.9,42.7 0 0 0 771.9,355.3"/><path d="M473.8,353.8 A148.2,42.2 0 0 0 770.2,353.8"/><path d="M475.4,352.2 A146.6,41.8 0 0 0 768.6,352.2"/><path d="M477.1,350.7 A144.9,41.3 0 0 0 766.9,350.7"/><path d="M478.7,349.1 A143.3,40.9 0 0 0 765.3,349.1"/><path d="M480.4,347.6 A141.6,40.4 0 0 0 763.6,347.6"/><path d="M482.0,346.0 A140.0,40.0 0 0 0 762.0,346.0"/></g></g></g>
<path d="M482,384 L682,376" stroke="#e8e8d0" stroke-width="1" stroke-dasharray="1,4" opacity="0.8"/>
<defs><mask id="outdome" maskUnits="userSpaceOnUse" x="262" y="79" width="754" height="593"><rect x="262" y="79" width="754" height="593" fill="#fff"/><path d="M868.6,423.3 L873.0,427.1 L876.8,431.0 L880.0,435.0 L882.5,438.9 L884.3,442.9 L885.5,447.0 L886.0,451.0 L885.8,455.1 L885.0,459.1 L883.5,463.1 L881.3,467.1 L878.4,471.1 L874.9,475.0 L870.8,478.8 L866.1,482.6 L860.7,486.3 L854.7,489.9 L848.1,493.4 L841.0,496.9 L833.2,500.1 L825.0,503.3 L816.2,506.4 L807.0,509.3 L797.3,512.0 L787.1,514.6 L776.5,517.0 L765.5,519.3 L754.2,521.4 L742.5,523.3 L730.6,525.1 L718.3,526.6 L705.8,528.0 L693.1,529.2 L680.3,530.1 L667.2,530.9 L654.1,531.5 L640.9,531.8 L627.7,532.0 L614.4,531.9 L601.2,531.7 L588.0,531.2 L574.9,530.6 L561.9,529.7 L549.1,528.7 L536.5,527.4 L524.2,526.0 L512.0,524.3 L500.2,522.5 L488.7,520.5 L477.5,518.3 L466.7,516.0 L456.3,513.5 L446.3,510.8 L436.8,508.0 L427.8,505.0 L419.2,501.9 L411.2,498.7 L403.8,495.3 L396.9,491.9 L390.6,488.3 L384.8,484.7 L379.7,480.9 L375.3,477.1 L371.4,473.2 L368.2,469.3 L365.7,465.3 L363.8,461.3 L362.6,457.3 L362.0,453.3 L362.2,449.2 L363.0,445.2 L364.4,441.1 L366.6,437.1 L369.3,433.2 L372.8,429.3 L376.9,425.4 L381.6,421.6 L386.9,417.9 L392.9,414.3 L399.4,410.8 C401.2,405.6 410.3,387.8 417.5,376.0 C424.7,364.2 431.6,353.8 441.0,341.0 C450.4,328.2 463.0,310.3 474.0,299.0 C485.0,287.7 496.2,279.5 507.0,273.0 C517.8,266.5 526.8,264.5 539.0,260.0 C551.2,255.5 567.5,250.5 580.0,246.0 C592.5,241.5 605.2,235.2 614.0,233.0 C622.8,230.8 629.8,233.0 633.0,233.0 C634.5,233.7 638.8,234.8 642.0,237.0 C645.2,239.2 648.2,245.0 652.0,246.0 C655.8,247.0 660.3,243.7 665.0,243.0 C669.7,242.3 674.8,241.2 680.0,242.0 C685.2,242.8 690.8,245.8 696.0,248.0 C701.2,250.2 705.0,251.5 711.0,255.0 C717.0,258.5 724.2,263.2 732.0,269.0 C739.8,274.8 749.3,283.0 758.0,290.0 C766.7,297.0 775.3,303.7 784.0,311.0 C792.7,318.3 801.3,325.0 810.0,334.0 C818.7,343.0 829.0,355.4 836.0,365.0 C843.0,374.6 847.7,382.3 852.0,391.5 C856.3,400.7 859.2,414.7 862.0,420.0 C864.8,425.3 867.5,422.8 868.6,423.3  Z" fill="#000"/></mask></defs>
<g clip-path="url(#dc)"><g stroke-width="1.15" fill="none"><line x1="653.4" y1="654.6" x2="584.5" y2="661.4" stroke="rgb(67,75,169)"/><line x1="489.0" y1="626.2" x2="522.4" y2="641.6" stroke="rgb(45,79,189)"/><line x1="659.2" y1="203.3" x2="659.6" y2="194.4" stroke="rgb(118,64,123)"/><line x1="537.8" y1="228.0" x2="576.0" y2="238.1" stroke="rgb(184,50,62)"/><line x1="623.0" y1="198.2" x2="631.7" y2="203.3" stroke="rgb(127,62,114)"/><line x1="589.2" y1="193.4" x2="561.9" y2="193.8" stroke="rgb(94,69,144)"/><line x1="382.3" y1="407.0" x2="395.9" y2="417.9" stroke="rgb(124,63,117)"/><line x1="576.0" y1="238.1" x2="615.1" y2="245.0" stroke="rgb(185,50,62)"/><line x1="719.9" y1="532.2" x2="706.1" y2="569.2" stroke="rgb(185,50,62)"/><line x1="376.3" y1="394.3" x2="374.1" y2="409.3" stroke="rgb(54,77,181)"/><line x1="663.5" y1="352.9" x2="691.8" y2="368.4" stroke="rgb(185,50,62)"/><line x1="700.9" y1="345.9" x2="737.3" y2="363.3" stroke="rgb(185,50,62)"/><line x1="420.9" y1="260.0" x2="408.5" y2="275.8" stroke="rgb(63,76,173)"/><line x1="657.3" y1="484.5" x2="649.4" y2="541.0" stroke="rgb(185,50,62)"/><line x1="814.5" y1="565.7" x2="787.5" y2="594.6" stroke="rgb(93,69,145)"/><line x1="841.5" y1="423.6" x2="834.2" y2="452.2" stroke="rgb(162,54,82)"/><line x1="702.7" y1="210.7" x2="716.8" y2="221.8" stroke="rgb(151,57,92)"/><line x1="623.2" y1="311.6" x2="659.1" y2="331.6" stroke="rgb(185,50,62)"/><line x1="691.8" y1="368.4" x2="676.2" y2="392.4" stroke="rgb(185,50,62)"/><line x1="436.6" y1="258.1" x2="450.4" y2="270.8" stroke="rgb(137,60,105)"/><line x1="666.1" y1="598.6" x2="719.9" y2="590.7" stroke="rgb(160,55,84)"/><line x1="737.3" y1="363.3" x2="718.3" y2="393.2" stroke="rgb(185,50,62)"/><line x1="462.9" y1="550.4" x2="475.7" y2="579.3" stroke="rgb(163,54,81)"/><line x1="784.8" y1="468.8" x2="754.2" y2="496.4" stroke="rgb(185,50,62)"/><line x1="452.3" y1="398.7" x2="448.3" y2="418.4" stroke="rgb(185,50,62)"/><line x1="561.9" y1="193.8" x2="528.1" y2="193.7" stroke="rgb(77,73,160)"/><line x1="787.5" y1="594.6" x2="813.4" y2="577.5" stroke="rgb(67,75,169)"/><line x1="498.3" y1="474.1" x2="492.4" y2="497.4" stroke="rgb(185,50,62)"/><line x1="681.2" y1="285.4" x2="664.3" y2="308.0" stroke="rgb(185,50,62)"/><line x1="531.3" y1="648.2" x2="584.5" y2="661.4" stroke="rgb(45,80,190)"/><line x1="389.2" y1="317.3" x2="389.6" y2="333.6" stroke="rgb(69,74,168)"/><line x1="837.7" y1="277.8" x2="848.8" y2="297.2" stroke="rgb(56,77,179)"/><line x1="667.1" y1="256.8" x2="686.2" y2="268.4" stroke="rgb(185,50,62)"/><line x1="379.8" y1="355.0" x2="378.1" y2="367.4" stroke="rgb(45,80,190)"/><line x1="776.0" y1="556.3" x2="719.9" y2="590.7" stroke="rgb(173,52,72)"/><line x1="663.9" y1="189.8" x2="693.4" y2="190.8" stroke="rgb(62,76,173)"/><line x1="469.9" y1="213.5" x2="454.7" y2="225.6" stroke="rgb(45,80,190)"/><line x1="624.0" y1="190.6" x2="663.9" y2="189.8" stroke="rgb(68,74,168)"/><line x1="686.3" y1="460.5" x2="710.0" y2="483.9" stroke="rgb(185,50,62)"/><line x1="663.3" y1="240.5" x2="667.1" y2="256.8" stroke="rgb(185,50,62)"/><line x1="484.4" y1="359.7" x2="510.1" y2="388.2" stroke="rgb(185,50,62)"/><line x1="606.5" y1="601.3" x2="611.6" y2="622.0" stroke="rgb(148,57,95)"/><line x1="525.3" y1="364.7" x2="548.8" y2="393.4" stroke="rgb(185,50,62)"/><line x1="809.2" y1="240.5" x2="825.9" y2="268.1" stroke="rgb(80,72,157)"/><line x1="817.3" y1="280.2" x2="835.5" y2="296.4" stroke="rgb(125,62,116)"/><line x1="825.9" y1="268.1" x2="837.7" y2="277.8" stroke="rgb(80,72,157)"/><line x1="434.5" y1="339.5" x2="454.3" y2="351.3" stroke="rgb(185,50,62)"/><line x1="832.3" y1="379.3" x2="846.8" y2="398.6" stroke="rgb(159,55,85)"/><line x1="510.1" y1="388.2" x2="548.8" y2="393.4" stroke="rgb(185,50,62)"/><line x1="750.1" y1="386.3" x2="748.1" y2="406.2" stroke="rgb(185,50,62)"/><line x1="840.8" y1="467.5" x2="821.3" y2="510.7" stroke="rgb(154,56,90)"/><line x1="378.1" y1="367.4" x2="376.3" y2="394.3" stroke="rgb(61,76,174)"/><line x1="388.5" y1="434.1" x2="376.5" y2="438.4" stroke="rgb(96,69,143)"/><line x1="383.9" y1="351.7" x2="392.2" y2="368.0" stroke="rgb(104,67,135)"/><line x1="386.3" y1="387.0" x2="382.3" y2="407.0" stroke="rgb(109,66,130)"/><line x1="479.2" y1="426.5" x2="515.1" y2="433.7" stroke="rgb(185,50,62)"/><line x1="624.0" y1="190.6" x2="589.2" y2="193.4" stroke="rgb(84,71,153)"/><line x1="821.3" y1="510.7" x2="846.0" y2="521.9" stroke="rgb(118,64,122)"/><line x1="515.1" y1="433.7" x2="558.5" y2="437.2" stroke="rgb(185,50,62)"/><line x1="413.3" y1="428.6" x2="441.0" y2="442.3" stroke="rgb(185,50,62)"/><line x1="599.5" y1="189.3" x2="625.6" y2="189.2" stroke="rgb(53,78,182)"/><line x1="487.2" y1="606.6" x2="556.1" y2="635.9" stroke="rgb(106,66,133)"/><line x1="663.3" y1="240.5" x2="688.8" y2="235.6" stroke="rgb(185,50,62)"/><line x1="441.0" y1="442.3" x2="471.8" y2="446.1" stroke="rgb(185,50,62)"/><line x1="801.7" y1="267.5" x2="819.3" y2="309.7" stroke="rgb(152,57,92)"/><line x1="395.9" y1="417.9" x2="388.5" y2="434.1" stroke="rgb(133,61,109)"/><line x1="423.7" y1="273.7" x2="410.0" y2="288.6" stroke="rgb(108,66,131)"/><line x1="868.7" y1="397.2" x2="871.8" y2="408.3" stroke="rgb(60,76,175)"/><line x1="777.7" y1="330.9" x2="802.0" y2="344.2" stroke="rgb(185,50,62)"/><line x1="709.7" y1="199.5" x2="730.8" y2="205.5" stroke="rgb(109,66,130)"/><line x1="490.8" y1="244.7" x2="490.6" y2="268.4" stroke="rgb(180,51,66)"/><line x1="693.4" y1="190.8" x2="725.6" y2="196.7" stroke="rgb(69,74,167)"/><line x1="424.6" y1="540.0" x2="410.7" y2="546.6" stroke="rgb(89,70,148)"/><line x1="524.8" y1="260.2" x2="521.2" y2="278.7" stroke="rgb(185,50,62)"/><line x1="770.4" y1="357.7" x2="750.1" y2="386.3" stroke="rgb(185,50,62)"/><line x1="599.5" y1="189.3" x2="563.7" y2="189.7" stroke="rgb(54,77,180)"/><line x1="802.0" y1="344.2" x2="784.4" y2="378.1" stroke="rgb(185,50,62)"/><line x1="537.4" y1="413.0" x2="515.1" y2="433.7" stroke="rgb(185,50,62)"/><line x1="855.6" y1="436.1" x2="863.9" y2="449.8" stroke="rgb(111,65,128)"/><line x1="746.3" y1="624.8" x2="716.5" y2="645.0" stroke="rgb(72,74,164)"/><line x1="667.7" y1="660.3" x2="707.0" y2="651.3" stroke="rgb(46,79,188)"/><line x1="605.6" y1="505.5" x2="649.4" y2="541.0" stroke="rgb(185,50,62)"/><line x1="575.5" y1="212.9" x2="618.4" y2="220.0" stroke="rgb(165,54,79)"/><line x1="453.4" y1="241.5" x2="438.4" y2="240.5" stroke="rgb(97,68,141)"/><line x1="631.7" y1="203.3" x2="619.3" y2="211.1" stroke="rgb(146,58,97)"/><line x1="522.4" y1="641.6" x2="531.3" y2="648.2" stroke="rgb(47,79,187)"/><line x1="734.3" y1="233.8" x2="749.5" y2="245.3" stroke="rgb(170,53,75)"/><line x1="846.0" y1="521.9" x2="840.1" y2="538.7" stroke="rgb(50,78,184)"/><line x1="678.1" y1="640.0" x2="653.4" y2="654.6" stroke="rgb(89,70,149)"/><line x1="640.7" y1="463.5" x2="624.6" y2="487.4" stroke="rgb(185,50,62)"/><line x1="524.8" y1="260.2" x2="567.8" y2="268.7" stroke="rgb(185,50,62)"/><line x1="716.8" y1="221.8" x2="753.3" y2="219.4" stroke="rgb(143,58,99)"/><line x1="478.3" y1="285.6" x2="504.8" y2="294.4" stroke="rgb(185,50,62)"/><line x1="730.8" y1="205.5" x2="752.1" y2="206.9" stroke="rgb(100,68,139)"/><line x1="604.9" y1="377.0" x2="633.5" y2="398.3" stroke="rgb(185,50,62)"/><line x1="783.8" y1="577.1" x2="787.5" y2="594.6" stroke="rgb(111,65,128)"/><line x1="803.8" y1="393.1" x2="801.6" y2="417.9" stroke="rgb(185,50,62)"/><line x1="484.4" y1="359.7" x2="525.3" y2="364.7" stroke="rgb(185,50,62)"/><line x1="710.0" y1="483.9" x2="691.6" y2="506.9" stroke="rgb(185,50,62)"/><line x1="819.0" y1="361.7" x2="832.3" y2="379.3" stroke="rgb(176,51,69)"/><line x1="504.2" y1="626.8" x2="556.1" y2="635.9" stroke="rgb(94,69,144)"/><line x1="528.1" y1="193.7" x2="508.0" y2="197.8" stroke="rgb(56,77,179)"/><line x1="746.7" y1="476.5" x2="754.2" y2="496.4" stroke="rgb(185,50,62)"/><line x1="623.0" y1="198.2" x2="608.7" y2="202.5" stroke="rgb(126,62,115)"/><line x1="589.2" y1="193.4" x2="599.5" y2="189.3" stroke="rgb(76,73,161)"/><line x1="776.0" y1="556.3" x2="741.8" y2="612.2" stroke="rgb(145,58,98)"/><line x1="408.0" y1="379.5" x2="424.3" y2="387.7" stroke="rgb(173,52,72)"/><line x1="416.3" y1="405.4" x2="413.3" y2="428.6" stroke="rgb(175,52,71)"/><line x1="825.9" y1="268.1" x2="846.7" y2="309.1" stroke="rgb(95,69,143)"/><line x1="390.7" y1="488.9" x2="396.1" y2="517.5" stroke="rgb(77,73,160)"/><line x1="562.6" y1="200.5" x2="542.4" y2="209.8" stroke="rgb(131,61,110)"/><line x1="441.0" y1="442.3" x2="462.3" y2="467.4" stroke="rgb(185,50,62)"/><line x1="460.8" y1="302.2" x2="461.3" y2="330.4" stroke="rgb(185,50,62)"/><line x1="513.6" y1="459.2" x2="550.3" y2="459.2" stroke="rgb(185,50,62)"/><line x1="471.8" y1="446.1" x2="498.3" y2="474.1" stroke="rgb(185,50,62)"/><line x1="680.5" y1="207.4" x2="709.7" y2="199.5" stroke="rgb(125,62,116)"/><line x1="495.7" y1="318.0" x2="488.8" y2="336.2" stroke="rgb(185,50,62)"/><line x1="664.3" y1="308.0" x2="659.1" y2="331.6" stroke="rgb(185,50,62)"/><line x1="821.3" y1="338.5" x2="838.8" y2="350.3" stroke="rgb(161,55,83)"/><line x1="785.4" y1="523.5" x2="821.3" y2="510.7" stroke="rgb(175,52,70)"/><line x1="513.3" y1="561.2" x2="475.7" y2="579.3" stroke="rgb(175,51,70)"/><line x1="600.8" y1="274.2" x2="602.0" y2="291.4" stroke="rgb(185,50,62)"/><line x1="837.8" y1="323.8" x2="851.6" y2="335.2" stroke="rgb(124,63,117)"/><line x1="622.9" y1="420.3" x2="636.6" y2="444.3" stroke="rgb(185,50,62)"/><line x1="519.5" y1="238.6" x2="490.6" y2="268.4" stroke="rgb(185,50,62)"/><line x1="702.7" y1="210.7" x2="753.3" y2="219.4" stroke="rgb(135,60,107)"/><line x1="530.6" y1="483.1" x2="492.4" y2="497.4" stroke="rgb(185,50,62)"/><line x1="838.8" y1="350.3" x2="851.6" y2="335.2" stroke="rgb(130,61,111)"/><line x1="667.1" y1="256.8" x2="641.8" y2="274.3" stroke="rgb(185,50,62)"/><line x1="374.1" y1="409.3" x2="376.5" y2="438.4" stroke="rgb(54,78,181)"/><line x1="791.7" y1="226.3" x2="809.2" y2="240.5" stroke="rgb(69,74,167)"/><line x1="652.0" y1="216.8" x2="680.5" y2="207.4" stroke="rgb(154,56,89)"/><line x1="684.4" y1="437.1" x2="686.3" y2="460.5" stroke="rgb(185,50,62)"/><line x1="787.5" y1="594.6" x2="746.3" y2="624.8" stroke="rgb(86,71,151)"/><line x1="470.7" y1="219.4" x2="453.4" y2="241.5" stroke="rgb(106,66,133)"/><line x1="686.3" y1="460.5" x2="657.3" y2="484.5" stroke="rgb(185,50,62)"/><line x1="791.7" y1="226.3" x2="780.3" y2="215.7" stroke="rgb(53,78,182)"/><line x1="722.9" y1="455.6" x2="710.0" y2="483.9" stroke="rgb(185,50,62)"/><line x1="600.8" y1="274.2" x2="641.8" y2="274.3" stroke="rgb(185,50,62)"/><line x1="478.3" y1="285.6" x2="495.7" y2="318.0" stroke="rgb(185,50,62)"/><line x1="725.6" y1="196.7" x2="737.4" y2="197.4" stroke="rgb(61,76,174)"/><line x1="546.2" y1="303.4" x2="589.2" y2="308.2" stroke="rgb(185,50,62)"/><line x1="504.8" y1="294.4" x2="531.9" y2="321.4" stroke="rgb(185,50,62)"/><line x1="519.5" y1="238.6" x2="524.8" y2="260.2" stroke="rgb(185,50,62)"/><line x1="825.9" y1="268.1" x2="835.5" y2="296.4" stroke="rgb(105,67,135)"/><line x1="832.3" y1="379.3" x2="828.9" y2="405.8" stroke="rgb(174,52,71)"/><line x1="544.7" y1="616.2" x2="611.6" y2="622.0" stroke="rgb(135,60,107)"/><line x1="848.7" y1="370.8" x2="846.8" y2="398.6" stroke="rgb(143,58,99)"/><line x1="592.4" y1="652.8" x2="653.4" y2="654.6" stroke="rgb(80,72,157)"/><line x1="851.6" y1="335.2" x2="860.7" y2="356.8" stroke="rgb(103,67,136)"/><line x1="615.4" y1="642.3" x2="678.1" y2="640.0" stroke="rgb(102,67,137)"/><line x1="386.3" y1="387.0" x2="376.3" y2="394.3" stroke="rgb(91,69,147)"/><line x1="438.4" y1="240.5" x2="420.9" y2="260.0" stroke="rgb(73,73,164)"/><line x1="815.5" y1="459.4" x2="840.8" y2="467.5" stroke="rgb(170,53,75)"/><line x1="856.7" y1="322.7" x2="863.9" y2="342.9" stroke="rgb(57,77,178)"/><line x1="623.2" y1="193.9" x2="642.1" y2="198.2" stroke="rgb(108,66,132)"/><line x1="396.0" y1="393.5" x2="382.3" y2="407.0" stroke="rgb(123,63,118)"/><line x1="479.2" y1="426.5" x2="513.6" y2="459.2" stroke="rgb(185,50,62)"/><line x1="565.5" y1="222.0" x2="591.7" y2="228.1" stroke="rgb(178,51,67)"/><line x1="487.2" y1="606.6" x2="504.2" y2="626.8" stroke="rgb(96,69,143)"/><line x1="858.9" y1="485.1" x2="846.0" y2="521.9" stroke="rgb(79,72,158)"/><line x1="544.7" y1="616.2" x2="556.1" y2="635.9" stroke="rgb(117,64,123)"/><line x1="618.4" y1="220.0" x2="631.4" y2="231.5" stroke="rgb(182,50,64)"/><line x1="868.7" y1="397.2" x2="866.5" y2="424.2" stroke="rgb(85,71,153)"/><line x1="777.7" y1="330.9" x2="770.4" y2="357.7" stroke="rgb(185,50,62)"/><line x1="513.6" y1="459.2" x2="530.6" y2="483.1" stroke="rgb(185,50,62)"/><line x1="531.9" y1="321.4" x2="529.9" y2="342.9" stroke="rgb(185,50,62)"/><line x1="556.1" y1="635.9" x2="592.4" y2="652.8" stroke="rgb(92,69,146)"/><line x1="524.8" y1="260.2" x2="490.6" y2="268.4" stroke="rgb(185,50,62)"/><line x1="550.3" y1="459.2" x2="577.6" y2="484.7" stroke="rgb(185,50,62)"/><line x1="575.7" y1="329.0" x2="574.2" y2="351.1" stroke="rgb(185,50,62)"/><line x1="599.5" y1="189.3" x2="589.3" y2="188.9" stroke="rgb(45,80,190)"/><line x1="410.4" y1="324.8" x2="418.4" y2="358.7" stroke="rgb(156,56,87)"/><line x1="745.8" y1="295.8" x2="737.5" y2="316.4" stroke="rgb(185,50,62)"/><line x1="567.8" y1="268.7" x2="521.2" y2="278.7" stroke="rgb(185,50,62)"/><line x1="686.2" y1="268.4" x2="717.4" y2="278.0" stroke="rgb(185,50,62)"/><line x1="484.4" y1="359.7" x2="491.6" y2="405.1" stroke="rgb(185,50,62)"/><line x1="402.4" y1="286.1" x2="398.5" y2="295.8" stroke="rgb(45,80,190)"/><line x1="848.8" y1="297.2" x2="854.4" y2="310.2" stroke="rgb(45,80,190)"/><line x1="855.6" y1="436.1" x2="840.8" y2="467.5" stroke="rgb(139,59,103)"/><line x1="529.9" y1="342.9" x2="574.2" y2="351.1" stroke="rgb(185,50,62)"/><line x1="469.7" y1="381.1" x2="479.2" y2="426.5" stroke="rgb(185,50,62)"/><line x1="702.0" y1="416.7" x2="724.1" y2="437.0" stroke="rgb(185,50,62)"/><line x1="401.3" y1="344.9" x2="418.4" y2="358.7" stroke="rgb(153,56,90)"/><line x1="866.5" y1="424.2" x2="863.9" y2="449.8" stroke="rgb(93,69,145)"/><line x1="821.3" y1="338.5" x2="837.8" y2="323.8" stroke="rgb(154,56,89)"/><line x1="748.1" y1="406.2" x2="768.2" y2="428.1" stroke="rgb(185,50,62)"/><line x1="734.3" y1="233.8" x2="719.9" y2="257.7" stroke="rgb(185,50,62)"/><line x1="386.3" y1="387.0" x2="396.0" y2="393.5" stroke="rgb(128,62,113)"/><line x1="846.0" y1="521.9" x2="814.5" y2="565.7" stroke="rgb(87,70,151)"/><line x1="396.0" y1="393.5" x2="416.3" y2="405.4" stroke="rgb(159,55,85)"/><line x1="521.5" y1="218.9" x2="537.8" y2="228.0" stroke="rgb(161,55,83)"/><line x1="624.0" y1="190.6" x2="599.5" y2="189.3" stroke="rgb(65,75,171)"/><line x1="623.2" y1="193.9" x2="659.6" y2="194.4" stroke="rgb(99,68,140)"/><line x1="822.0" y1="253.7" x2="825.9" y2="268.1" stroke="rgb(76,73,160)"/><line x1="376.3" y1="394.3" x2="382.3" y2="407.0" stroke="rgb(86,71,151)"/><line x1="794.9" y1="442.8" x2="815.5" y2="459.4" stroke="rgb(185,50,62)"/><line x1="611.8" y1="353.5" x2="657.8" y2="373.4" stroke="rgb(185,50,62)"/><line x1="730.8" y1="205.5" x2="753.3" y2="219.4" stroke="rgb(119,63,121)"/><line x1="631.4" y1="231.5" x2="663.3" y2="240.5" stroke="rgb(185,50,62)"/><line x1="546.2" y1="303.4" x2="575.7" y2="329.0" stroke="rgb(185,50,62)"/><line x1="604.9" y1="377.0" x2="580.4" y2="395.4" stroke="rgb(185,50,62)"/><line x1="676.2" y1="392.4" x2="684.4" y2="437.1" stroke="rgb(185,50,62)"/><line x1="783.8" y1="577.1" x2="741.8" y2="612.2" stroke="rgb(124,62,116)"/><line x1="589.2" y1="308.2" x2="617.5" y2="332.9" stroke="rgb(185,50,62)"/><line x1="657.8" y1="373.4" x2="633.5" y2="398.3" stroke="rgb(185,50,62)"/><line x1="718.3" y1="393.2" x2="724.1" y2="437.0" stroke="rgb(185,50,62)"/><line x1="424.6" y1="540.0" x2="475.7" y2="579.3" stroke="rgb(143,58,100)"/><line x1="606.5" y1="601.3" x2="666.1" y2="598.6" stroke="rgb(157,55,87)"/><line x1="528.1" y1="193.7" x2="525.4" y2="193.4" stroke="rgb(45,80,190)"/><line x1="428.3" y1="454.8" x2="433.8" y2="481.1" stroke="rgb(185,50,62)"/><line x1="679.5" y1="619.6" x2="741.8" y2="612.2" stroke="rgb(125,62,116)"/><line x1="515.2" y1="203.4" x2="508.0" y2="197.8" stroke="rgb(80,72,157)"/><line x1="462.3" y1="467.4" x2="492.4" y2="497.4" stroke="rgb(185,50,62)"/><line x1="741.8" y1="612.2" x2="787.5" y2="594.6" stroke="rgb(103,67,136)"/><line x1="416.3" y1="405.4" x2="395.9" y2="417.9" stroke="rgb(160,55,84)"/><line x1="584.5" y1="255.7" x2="600.8" y2="274.2" stroke="rgb(185,50,62)"/><line x1="453.4" y1="241.5" x2="450.4" y2="270.8" stroke="rgb(138,59,104)"/><line x1="558.5" y1="437.2" x2="589.6" y2="461.2" stroke="rgb(185,50,62)"/><line x1="648.4" y1="570.0" x2="666.1" y2="598.6" stroke="rgb(167,53,77)"/><line x1="611.6" y1="622.0" x2="615.4" y2="642.3" stroke="rgb(120,63,120)"/><line x1="730.8" y1="205.5" x2="725.6" y2="196.7" stroke="rgb(94,69,144)"/><line x1="679.5" y1="619.6" x2="678.1" y2="640.0" stroke="rgb(116,64,124)"/><line x1="659.2" y1="203.3" x2="682.1" y2="194.7" stroke="rgb(116,64,124)"/><line x1="471.8" y1="446.1" x2="462.3" y2="467.4" stroke="rgb(185,50,62)"/><line x1="680.5" y1="207.4" x2="702.7" y2="210.7" stroke="rgb(143,58,100)"/><line x1="495.7" y1="318.0" x2="461.3" y2="330.4" stroke="rgb(185,50,62)"/><line x1="483.9" y1="206.3" x2="470.7" y2="219.4" stroke="rgb(70,74,166)"/><line x1="682.1" y1="194.7" x2="709.7" y2="199.5" stroke="rgb(102,67,137)"/><line x1="659.1" y1="331.6" x2="700.9" y2="345.9" stroke="rgb(185,50,62)"/><line x1="390.7" y1="488.9" x2="423.6" y2="509.9" stroke="rgb(126,62,115)"/><line x1="801.7" y1="267.5" x2="817.3" y2="280.2" stroke="rgb(140,59,102)"/><line x1="600.8" y1="274.2" x2="556.1" y2="287.4" stroke="rgb(185,50,62)"/><line x1="837.8" y1="323.8" x2="838.8" y2="350.3" stroke="rgb(143,58,99)"/><line x1="454.3" y1="351.3" x2="469.7" y2="381.1" stroke="rgb(185,50,62)"/><line x1="846.7" y1="309.1" x2="851.6" y2="335.2" stroke="rgb(104,67,135)"/><line x1="749.5" y1="245.3" x2="780.3" y2="255.7" stroke="rgb(165,54,79)"/><line x1="401.6" y1="313.7" x2="410.4" y2="324.8" stroke="rgb(126,62,115)"/><line x1="871.8" y1="408.3" x2="871.7" y2="429.6" stroke="rgb(45,80,190)"/><line x1="653.4" y1="654.6" x2="667.7" y2="660.3" stroke="rgb(67,75,169)"/><line x1="684.4" y1="437.1" x2="640.7" y2="463.5" stroke="rgb(185,50,62)"/><line x1="623.0" y1="198.2" x2="642.1" y2="198.2" stroke="rgb(118,64,122)"/><line x1="589.2" y1="193.4" x2="562.6" y2="200.5" stroke="rgb(109,66,131)"/><line x1="416.3" y1="405.4" x2="448.3" y2="418.4" stroke="rgb(185,50,62)"/><line x1="470.7" y1="219.4" x2="454.7" y2="225.6" stroke="rgb(81,72,156)"/><line x1="585.5" y1="202.3" x2="575.5" y2="212.9" stroke="rgb(144,58,98)"/><line x1="608.7" y1="202.5" x2="585.5" y2="202.3" stroke="rgb(132,61,109)"/><line x1="719.9" y1="532.2" x2="776.0" y2="556.3" stroke="rgb(185,50,62)"/><line x1="448.3" y1="418.4" x2="479.2" y2="426.5" stroke="rgb(185,50,62)"/><line x1="424.6" y1="540.0" x2="396.1" y2="517.5" stroke="rgb(95,69,144)"/><line x1="477.6" y1="233.4" x2="453.4" y2="241.5" stroke="rgb(129,61,113)"/><line x1="667.1" y1="256.8" x2="681.2" y2="285.4" stroke="rgb(185,50,62)"/><line x1="429.1" y1="246.4" x2="408.5" y2="275.8" stroke="rgb(45,80,190)"/><line x1="785.4" y1="523.5" x2="814.4" y2="541.3" stroke="rgb(167,53,78)"/><line x1="395.9" y1="417.9" x2="413.3" y2="428.6" stroke="rgb(158,55,86)"/><line x1="420.9" y1="260.0" x2="410.0" y2="288.6" stroke="rgb(87,70,151)"/><line x1="841.5" y1="423.6" x2="855.6" y2="436.1" stroke="rgb(143,58,99)"/><line x1="504.8" y1="294.4" x2="495.7" y2="318.0" stroke="rgb(185,50,62)"/><line x1="702.7" y1="210.7" x2="730.8" y2="205.5" stroke="rgb(128,62,114)"/><line x1="706.2" y1="191.2" x2="737.4" y2="197.4" stroke="rgb(45,80,190)"/><line x1="549.7" y1="507.1" x2="605.6" y2="505.5" stroke="rgb(185,50,62)"/><line x1="477.6" y1="233.4" x2="465.8" y2="254.8" stroke="rgb(147,57,95)"/><line x1="737.3" y1="363.3" x2="750.1" y2="386.3" stroke="rgb(185,50,62)"/><line x1="390.7" y1="488.9" x2="424.6" y2="540.0" stroke="rgb(111,65,129)"/><line x1="438.4" y1="240.5" x2="429.1" y2="246.4" stroke="rgb(54,78,181)"/><line x1="815.5" y1="459.4" x2="796.8" y2="489.0" stroke="rgb(185,50,62)"/><line x1="718.3" y1="393.2" x2="750.1" y2="386.3" stroke="rgb(185,50,62)"/><line x1="783.8" y1="577.1" x2="814.5" y2="565.7" stroke="rgb(116,64,124)"/><line x1="856.7" y1="322.7" x2="860.7" y2="356.8" stroke="rgb(82,71,155)"/><line x1="436.6" y1="258.1" x2="420.9" y2="260.0" stroke="rgb(95,69,143)"/><line x1="479.2" y1="426.5" x2="471.8" y2="446.1" stroke="rgb(185,50,62)"/><line x1="834.2" y1="452.2" x2="840.8" y2="467.5" stroke="rgb(158,55,86)"/><line x1="465.8" y1="254.8" x2="453.4" y2="241.5" stroke="rgb(138,59,104)"/><line x1="561.9" y1="193.8" x2="562.6" y2="200.5" stroke="rgb(107,66,132)"/><line x1="515.1" y1="433.7" x2="513.6" y2="459.2" stroke="rgb(185,50,62)"/><line x1="684.4" y1="437.1" x2="724.1" y2="437.0" stroke="rgb(185,50,62)"/><line x1="562.6" y1="200.5" x2="575.5" y2="212.9" stroke="rgb(139,59,103)"/><line x1="454.7" y1="225.6" x2="448.4" y2="228.0" stroke="rgb(48,79,186)"/><line x1="725.6" y1="196.7" x2="706.2" y2="191.2" stroke="rgb(59,76,176)"/><line x1="724.1" y1="437.0" x2="768.2" y2="428.1" stroke="rgb(185,50,62)"/><line x1="776.0" y1="556.3" x2="783.8" y2="577.1" stroke="rgb(156,56,87)"/><line x1="607.7" y1="440.0" x2="624.6" y2="487.4" stroke="rgb(185,50,62)"/><line x1="663.9" y1="189.8" x2="660.9" y2="188.8" stroke="rgb(49,79,186)"/><line x1="470.7" y1="219.4" x2="477.6" y2="233.4" stroke="rgb(116,64,124)"/><line x1="640.7" y1="463.5" x2="686.3" y2="460.5" stroke="rgb(185,50,62)"/><line x1="624.0" y1="190.6" x2="625.6" y2="189.2" stroke="rgb(62,76,173)"/><line x1="550.3" y1="459.2" x2="530.6" y2="483.1" stroke="rgb(185,50,62)"/><line x1="575.7" y1="329.0" x2="529.9" y2="342.9" stroke="rgb(185,50,62)"/><line x1="477.6" y1="233.4" x2="490.8" y2="244.7" stroke="rgb(153,56,90)"/><line x1="374.1" y1="409.3" x2="376.9" y2="422.0" stroke="rgb(60,76,175)"/><line x1="863.9" y1="449.8" x2="871.7" y2="429.6" stroke="rgb(65,75,171)"/><line x1="663.3" y1="240.5" x2="701.3" y2="245.0" stroke="rgb(185,50,62)"/><line x1="625.6" y1="189.2" x2="660.9" y2="188.8" stroke="rgb(45,80,190)"/><line x1="686.2" y1="268.4" x2="681.2" y2="285.4" stroke="rgb(185,50,62)"/><line x1="737.5" y1="316.4" x2="777.7" y2="330.9" stroke="rgb(185,50,62)"/><line x1="719.9" y1="257.7" x2="717.4" y2="278.0" stroke="rgb(185,50,62)"/><line x1="848.8" y1="297.2" x2="856.7" y2="322.7" stroke="rgb(59,76,177)"/><line x1="748.1" y1="406.2" x2="724.1" y2="437.0" stroke="rgb(185,50,62)"/><line x1="454.3" y1="351.3" x2="484.4" y2="359.7" stroke="rgb(185,50,62)"/><line x1="510.1" y1="388.2" x2="491.6" y2="405.1" stroke="rgb(185,50,62)"/><line x1="388.5" y1="434.1" x2="399.1" y2="466.2" stroke="rgb(130,61,111)"/><line x1="663.9" y1="189.8" x2="625.6" y2="189.2" stroke="rgb(57,77,178)"/><line x1="402.4" y1="446.9" x2="433.8" y2="481.1" stroke="rgb(169,53,76)"/><line x1="667.1" y1="256.8" x2="701.3" y2="245.0" stroke="rgb(185,50,62)"/><line x1="846.8" y1="398.6" x2="855.6" y2="436.1" stroke="rgb(138,59,104)"/><line x1="686.2" y1="268.4" x2="719.9" y2="257.7" stroke="rgb(185,50,62)"/><line x1="423.7" y1="273.7" x2="417.4" y2="303.8" stroke="rgb(127,62,114)"/><line x1="719.9" y1="257.7" x2="749.5" y2="245.3" stroke="rgb(185,50,62)"/><line x1="417.4" y1="303.8" x2="401.6" y2="313.7" stroke="rgb(125,62,116)"/><line x1="623.2" y1="311.6" x2="664.3" y2="308.0" stroke="rgb(185,50,62)"/><line x1="434.9" y1="291.8" x2="432.9" y2="316.8" stroke="rgb(164,54,80)"/><line x1="716.5" y1="645.0" x2="667.7" y2="660.3" stroke="rgb(59,76,176)"/><line x1="589.2" y1="308.2" x2="575.7" y2="329.0" stroke="rgb(185,50,62)"/><line x1="693.4" y1="190.8" x2="706.2" y2="191.2" stroke="rgb(51,78,183)"/><line x1="429.1" y1="246.4" x2="420.9" y2="260.0" stroke="rgb(52,78,183)"/><line x1="389.2" y1="317.3" x2="378.1" y2="367.4" stroke="rgb(50,78,185)"/><line x1="802.0" y1="344.2" x2="819.0" y2="361.7" stroke="rgb(185,50,62)"/><line x1="417.4" y1="303.8" x2="432.9" y2="316.8" stroke="rgb(155,56,89)"/><line x1="454.3" y1="517.0" x2="513.3" y2="561.2" stroke="rgb(185,50,62)"/><line x1="462.3" y1="467.4" x2="433.8" y2="481.1" stroke="rgb(185,50,62)"/><line x1="691.8" y1="368.4" x2="737.3" y2="363.3" stroke="rgb(185,50,62)"/><line x1="389.6" y1="333.6" x2="392.2" y2="368.0" stroke="rgb(108,66,132)"/><line x1="453.4" y1="241.5" x2="436.6" y2="258.1" stroke="rgb(118,64,122)"/><line x1="521.2" y1="278.7" x2="504.8" y2="294.4" stroke="rgb(185,50,62)"/><line x1="558.5" y1="437.2" x2="550.3" y2="459.2" stroke="rgb(185,50,62)"/><line x1="579.8" y1="419.9" x2="622.9" y2="420.3" stroke="rgb(185,50,62)"/><line x1="633.7" y1="260.9" x2="600.8" y2="274.2" stroke="rgb(185,50,62)"/><line x1="631.7" y1="203.3" x2="659.2" y2="203.3" stroke="rgb(135,60,107)"/><line x1="522.4" y1="641.6" x2="584.5" y2="661.4" stroke="rgb(60,76,175)"/><line x1="734.3" y1="233.8" x2="769.9" y2="233.2" stroke="rgb(152,56,91)"/><line x1="478.3" y1="285.6" x2="450.4" y2="270.8" stroke="rgb(176,51,69)"/><line x1="607.7" y1="440.0" x2="589.6" y2="461.2" stroke="rgb(185,50,62)"/><line x1="622.9" y1="420.3" x2="657.7" y2="419.9" stroke="rgb(185,50,62)"/><line x1="679.5" y1="619.6" x2="615.4" y2="642.3" stroke="rgb(118,64,122)"/><line x1="768.2" y1="428.1" x2="801.6" y2="417.9" stroke="rgb(185,50,62)"/><line x1="642.1" y1="198.2" x2="659.6" y2="194.4" stroke="rgb(109,66,130)"/><line x1="753.3" y1="219.4" x2="775.2" y2="218.7" stroke="rgb(109,66,131)"/><line x1="741.8" y1="612.2" x2="678.1" y2="640.0" stroke="rgb(107,66,132)"/><line x1="801.6" y1="417.9" x2="828.9" y2="405.8" stroke="rgb(185,50,62)"/><line x1="686.3" y1="460.5" x2="722.9" y2="455.6" stroke="rgb(185,50,62)"/><line x1="640.7" y1="463.5" x2="657.3" y2="484.5" stroke="rgb(185,50,62)"/><line x1="659.1" y1="331.6" x2="663.5" y2="352.9" stroke="rgb(185,50,62)"/><line x1="623.2" y1="193.9" x2="589.2" y2="193.4" stroke="rgb(96,68,142)"/><line x1="722.9" y1="455.6" x2="758.0" y2="454.3" stroke="rgb(185,50,62)"/><line x1="376.9" y1="422.0" x2="388.5" y2="434.1" stroke="rgb(101,67,138)"/><line x1="388.5" y1="434.1" x2="402.4" y2="446.9" stroke="rgb(137,60,105)"/><line x1="749.5" y1="245.3" x2="752.4" y2="268.2" stroke="rgb(183,50,63)"/><line x1="769.9" y1="233.2" x2="780.3" y2="255.7" stroke="rgb(147,58,96)"/><line x1="462.9" y1="550.4" x2="513.3" y2="561.2" stroke="rgb(185,50,62)"/><line x1="803.8" y1="393.1" x2="828.9" y2="405.8" stroke="rgb(185,50,62)"/><line x1="460.8" y1="302.2" x2="434.5" y2="339.5" stroke="rgb(185,50,62)"/><line x1="515.2" y1="203.4" x2="498.7" y2="220.7" stroke="rgb(120,63,120)"/><line x1="580.4" y1="395.4" x2="579.8" y2="419.9" stroke="rgb(185,50,62)"/><line x1="585.5" y1="202.3" x2="562.6" y2="200.5" stroke="rgb(127,62,115)"/><line x1="416.3" y1="405.4" x2="441.0" y2="442.3" stroke="rgb(185,50,62)"/><line x1="538.8" y1="198.5" x2="542.4" y2="209.8" stroke="rgb(123,63,118)"/><line x1="846.8" y1="398.6" x2="841.5" y2="423.6" stroke="rgb(153,56,90)"/><line x1="785.4" y1="523.5" x2="776.0" y2="556.3" stroke="rgb(185,50,62)"/><line x1="448.3" y1="418.4" x2="471.8" y2="446.1" stroke="rgb(185,50,62)"/><line x1="542.4" y1="209.8" x2="565.5" y2="222.0" stroke="rgb(156,56,87)"/><line x1="734.3" y1="233.8" x2="753.3" y2="219.4" stroke="rgb(148,57,95)"/><line x1="447.1" y1="589.3" x2="469.6" y2="612.9" stroke="rgb(58,77,177)"/><line x1="867.5" y1="373.1" x2="871.8" y2="408.3" stroke="rgb(55,77,179)"/><line x1="753.3" y1="219.4" x2="752.1" y2="206.9" stroke="rgb(108,66,132)"/><line x1="749.5" y1="245.3" x2="769.9" y2="233.2" stroke="rgb(155,56,89)"/><line x1="469.6" y1="612.9" x2="522.4" y2="641.6" stroke="rgb(56,77,179)"/><line x1="860.8" y1="410.7" x2="855.6" y2="436.1" stroke="rgb(121,63,119)"/><line x1="461.3" y1="330.4" x2="434.5" y2="339.5" stroke="rgb(185,50,62)"/><line x1="664.3" y1="308.0" x2="703.8" y2="324.8" stroke="rgb(185,50,62)"/><line x1="538.8" y1="198.5" x2="528.1" y2="193.7" stroke="rgb(83,71,154)"/><line x1="600.8" y1="274.2" x2="638.4" y2="290.7" stroke="rgb(185,50,62)"/><line x1="423.7" y1="273.7" x2="434.9" y2="291.8" stroke="rgb(136,60,106)"/><line x1="716.2" y1="300.6" x2="703.8" y2="324.8" stroke="rgb(185,50,62)"/><line x1="846.0" y1="521.9" x2="856.8" y2="499.8" stroke="rgb(45,80,190)"/><line x1="641.8" y1="274.3" x2="681.2" y2="285.4" stroke="rgb(185,50,62)"/><line x1="652.0" y1="216.8" x2="663.3" y2="240.5" stroke="rgb(183,50,63)"/><line x1="461.3" y1="330.4" x2="488.8" y2="336.2" stroke="rgb(185,50,62)"/><line x1="530.6" y1="483.1" x2="549.7" y2="507.1" stroke="rgb(185,50,62)"/><line x1="770.4" y1="357.7" x2="802.0" y2="344.2" stroke="rgb(185,50,62)"/><line x1="584.5" y1="661.4" x2="667.7" y2="660.3" stroke="rgb(56,77,179)"/><line x1="470.7" y1="219.4" x2="438.4" y2="240.5" stroke="rgb(84,71,154)"/><line x1="577.6" y1="484.7" x2="605.6" y2="505.5" stroke="rgb(185,50,62)"/><line x1="418.4" y1="358.7" x2="424.3" y2="387.7" stroke="rgb(178,51,67)"/><line x1="684.4" y1="437.1" x2="722.9" y2="455.6" stroke="rgb(185,50,62)"/><line x1="787.5" y1="594.6" x2="773.7" y2="614.2" stroke="rgb(72,74,165)"/><line x1="701.3" y1="245.0" x2="686.2" y2="268.4" stroke="rgb(185,50,62)"/><line x1="814.4" y1="541.3" x2="783.8" y2="577.1" stroke="rgb(142,59,101)"/><line x1="722.9" y1="455.6" x2="746.7" y2="476.5" stroke="rgb(185,50,62)"/><line x1="737.5" y1="316.4" x2="744.5" y2="339.3" stroke="rgb(185,50,62)"/><line x1="758.0" y1="454.3" x2="784.8" y2="468.8" stroke="rgb(185,50,62)"/><line x1="771.8" y1="311.0" x2="777.7" y2="330.9" stroke="rgb(185,50,62)"/><line x1="737.4" y1="197.4" x2="758.9" y2="204.7" stroke="rgb(45,80,190)"/><line x1="492.4" y1="497.4" x2="454.3" y2="517.0" stroke="rgb(185,50,62)"/><line x1="659.1" y1="331.6" x2="703.8" y2="324.8" stroke="rgb(185,50,62)"/><line x1="744.5" y1="339.3" x2="777.7" y2="330.9" stroke="rgb(185,50,62)"/><line x1="848.7" y1="370.8" x2="860.6" y2="382.4" stroke="rgb(124,62,117)"/><line x1="548.8" y1="393.4" x2="580.4" y2="395.4" stroke="rgb(185,50,62)"/><line x1="402.4" y1="446.9" x2="399.1" y2="466.2" stroke="rgb(145,58,98)"/><line x1="392.2" y1="368.0" x2="408.0" y2="379.5" stroke="rgb(143,58,100)"/><line x1="676.2" y1="392.4" x2="702.0" y2="416.7" stroke="rgb(185,50,62)"/><line x1="396.0" y1="393.5" x2="395.9" y2="417.9" stroke="rgb(142,59,101)"/><line x1="537.8" y1="228.0" x2="548.6" y2="249.7" stroke="rgb(185,50,62)"/><line x1="860.7" y1="356.8" x2="863.9" y2="342.9" stroke="rgb(71,74,165)"/><line x1="513.3" y1="561.2" x2="541.5" y2="595.9" stroke="rgb(171,52,73)"/><line x1="867.5" y1="373.1" x2="868.7" y2="397.2" stroke="rgb(73,73,163)"/><line x1="471.8" y1="446.1" x2="513.6" y2="459.2" stroke="rgb(185,50,62)"/><line x1="434.9" y1="291.8" x2="417.4" y2="303.8" stroke="rgb(147,58,96)"/><line x1="529.9" y1="342.9" x2="525.3" y2="364.7" stroke="rgb(185,50,62)"/><line x1="575.7" y1="329.0" x2="611.8" y2="353.5" stroke="rgb(185,50,62)"/><line x1="565.5" y1="222.0" x2="537.8" y2="228.0" stroke="rgb(172,52,73)"/><line x1="754.2" y1="496.4" x2="796.8" y2="489.0" stroke="rgb(185,50,62)"/><line x1="660.9" y1="188.8" x2="706.2" y2="191.2" stroke="rgb(45,80,190)"/><line x1="745.8" y1="295.8" x2="771.8" y2="311.0" stroke="rgb(185,50,62)"/><line x1="567.8" y1="268.7" x2="556.1" y2="287.4" stroke="rgb(185,50,62)"/><line x1="379.9" y1="470.3" x2="390.7" y2="488.9" stroke="rgb(61,76,175)"/><line x1="779.1" y1="282.0" x2="797.3" y2="299.2" stroke="rgb(181,50,64)"/><line x1="454.3" y1="517.0" x2="462.9" y2="550.4" stroke="rgb(183,50,63)"/><line x1="526.9" y1="532.2" x2="513.3" y2="561.2" stroke="rgb(185,50,62)"/><line x1="389.6" y1="333.6" x2="383.9" y2="351.7" stroke="rgb(87,70,151)"/><line x1="866.5" y1="424.2" x2="871.7" y2="429.6" stroke="rgb(64,75,172)"/><line x1="401.3" y1="344.9" x2="392.2" y2="368.0" stroke="rgb(130,61,111)"/><line x1="618.4" y1="220.0" x2="652.0" y2="216.8" stroke="rgb(170,53,75)"/><line x1="642.1" y1="198.2" x2="659.2" y2="203.3" stroke="rgb(126,62,115)"/><line x1="592.4" y1="652.8" x2="584.5" y2="661.4" stroke="rgb(69,74,167)"/><line x1="753.3" y1="219.4" x2="769.9" y2="233.2" stroke="rgb(132,61,110)"/><line x1="768.2" y1="428.1" x2="794.9" y2="442.8" stroke="rgb(185,50,62)"/><line x1="483.9" y1="206.3" x2="454.7" y2="225.6" stroke="rgb(58,77,177)"/><line x1="752.1" y1="206.9" x2="775.2" y2="218.7" stroke="rgb(89,70,149)"/><line x1="623.2" y1="193.9" x2="624.0" y2="190.6" stroke="rgb(86,71,152)"/><line x1="603.8" y1="196.7" x2="589.2" y2="193.4" stroke="rgb(103,67,136)"/><line x1="567.8" y1="268.7" x2="600.8" y2="274.2" stroke="rgb(185,50,62)"/><line x1="504.8" y1="294.4" x2="546.2" y2="303.4" stroke="rgb(185,50,62)"/><line x1="826.0" y1="430.9" x2="834.2" y2="452.2" stroke="rgb(174,52,71)"/><line x1="817.3" y1="280.2" x2="819.3" y2="309.7" stroke="rgb(147,58,96)"/><line x1="657.8" y1="373.4" x2="676.2" y2="392.4" stroke="rgb(185,50,62)"/><line x1="737.5" y1="316.4" x2="771.8" y2="311.0" stroke="rgb(185,50,62)"/><line x1="525.3" y1="364.7" x2="568.3" y2="371.5" stroke="rgb(185,50,62)"/><line x1="804.1" y1="322.5" x2="819.3" y2="309.7" stroke="rgb(172,52,73)"/><line x1="515.2" y1="203.4" x2="492.6" y2="208.8" stroke="rgb(99,68,139)"/><line x1="633.5" y1="398.3" x2="676.2" y2="392.4" stroke="rgb(185,50,62)"/><line x1="424.3" y1="387.7" x2="452.3" y2="398.7" stroke="rgb(185,50,62)"/><line x1="448.3" y1="418.4" x2="441.0" y2="442.3" stroke="rgb(185,50,62)"/><line x1="607.7" y1="440.0" x2="636.6" y2="444.3" stroke="rgb(185,50,62)"/><line x1="636.6" y1="444.3" x2="684.4" y2="437.1" stroke="rgb(185,50,62)"/><line x1="706.1" y1="569.2" x2="719.9" y2="590.7" stroke="rgb(171,52,74)"/><line x1="550.3" y1="459.2" x2="589.6" y2="461.2" stroke="rgb(185,50,62)"/><line x1="682.1" y1="194.7" x2="693.4" y2="190.8" stroke="rgb(80,72,157)"/><line x1="840.8" y1="467.5" x2="863.9" y2="449.8" stroke="rgb(123,63,118)"/><line x1="641.8" y1="274.3" x2="638.4" y2="290.7" stroke="rgb(185,50,62)"/><line x1="846.7" y1="309.1" x2="856.7" y2="322.7" stroke="rgb(83,71,154)"/><line x1="423.6" y1="509.9" x2="454.3" y2="517.0" stroke="rgb(174,52,72)"/><line x1="806.9" y1="253.6" x2="825.9" y2="268.1" stroke="rgb(104,67,135)"/><line x1="577.6" y1="484.7" x2="549.7" y2="507.1" stroke="rgb(185,50,62)"/><line x1="418.4" y1="358.7" x2="408.0" y2="379.5" stroke="rgb(166,54,79)"/><line x1="436.4" y1="367.1" x2="424.3" y2="387.7" stroke="rgb(185,50,62)"/><line x1="680.5" y1="207.4" x2="682.1" y2="194.7" stroke="rgb(121,63,120)"/><line x1="724.1" y1="437.0" x2="722.9" y2="455.6" stroke="rgb(185,50,62)"/><line x1="813.4" y1="577.5" x2="773.7" y2="614.2" stroke="rgb(47,79,187)"/><line x1="846.8" y1="398.6" x2="860.6" y2="382.4" stroke="rgb(129,61,112)"/><line x1="432.9" y1="316.8" x2="418.4" y2="358.7" stroke="rgb(171,52,74)"/><line x1="475.7" y1="579.3" x2="544.7" y2="616.2" stroke="rgb(140,59,102)"/><line x1="682.1" y1="194.7" x2="663.9" y2="189.8" stroke="rgb(81,72,156)"/><line x1="758.9" y1="204.7" x2="791.7" y2="226.3" stroke="rgb(56,77,179)"/><line x1="794.9" y1="442.8" x2="826.0" y2="430.9" stroke="rgb(185,50,62)"/><line x1="633.7" y1="260.9" x2="667.1" y2="256.8" stroke="rgb(185,50,62)"/><line x1="758.0" y1="454.3" x2="746.7" y2="476.5" stroke="rgb(185,50,62)"/><line x1="408.5" y1="275.8" x2="402.4" y2="286.1" stroke="rgb(45,80,190)"/><line x1="462.3" y1="467.4" x2="498.3" y2="474.1" stroke="rgb(185,50,62)"/><line x1="589.2" y1="308.2" x2="623.2" y2="311.6" stroke="rgb(185,50,62)"/><line x1="584.1" y1="568.3" x2="648.4" y2="570.0" stroke="rgb(178,51,67)"/><line x1="648.4" y1="570.0" x2="706.1" y2="569.2" stroke="rgb(178,51,68)"/><line x1="408.5" y1="275.8" x2="410.0" y2="288.6" stroke="rgb(79,72,158)"/><line x1="410.0" y1="288.6" x2="417.4" y2="303.8" stroke="rgb(120,63,120)"/><line x1="604.9" y1="377.0" x2="657.8" y2="373.4" stroke="rgb(185,50,62)"/><line x1="676.2" y1="392.4" x2="657.7" y2="419.9" stroke="rgb(185,50,62)"/><line x1="678.1" y1="640.0" x2="746.3" y2="624.8" stroke="rgb(92,69,146)"/><line x1="537.8" y1="228.0" x2="519.5" y2="238.6" stroke="rgb(176,51,70)"/><line x1="436.6" y1="258.1" x2="423.7" y2="273.7" stroke="rgb(116,64,124)"/><line x1="465.8" y1="254.8" x2="478.3" y2="285.6" stroke="rgb(176,51,69)"/><line x1="657.8" y1="373.4" x2="691.8" y2="368.4" stroke="rgb(185,50,62)"/><line x1="718.3" y1="393.2" x2="702.0" y2="416.7" stroke="rgb(185,50,62)"/><line x1="746.3" y1="624.8" x2="773.7" y2="614.2" stroke="rgb(70,74,166)"/><line x1="796.8" y1="489.0" x2="785.4" y2="523.5" stroke="rgb(185,50,62)"/><line x1="576.0" y1="238.1" x2="548.6" y2="249.7" stroke="rgb(185,50,62)"/><line x1="450.4" y1="270.8" x2="434.9" y2="291.8" stroke="rgb(156,56,87)"/><line x1="389.2" y1="317.3" x2="383.9" y2="351.7" stroke="rgb(64,75,171)"/><line x1="515.1" y1="433.7" x2="550.3" y2="459.2" stroke="rgb(185,50,62)"/><line x1="750.1" y1="386.3" x2="784.4" y2="378.1" stroke="rgb(185,50,62)"/><line x1="454.7" y1="225.6" x2="438.4" y2="240.5" stroke="rgb(72,74,164)"/><line x1="537.4" y1="413.0" x2="579.8" y2="419.9" stroke="rgb(185,50,62)"/><line x1="465.8" y1="254.8" x2="490.6" y2="268.4" stroke="rgb(174,52,71)"/><line x1="529.9" y1="342.9" x2="484.4" y2="359.7" stroke="rgb(185,50,62)"/><line x1="608.7" y1="202.5" x2="575.5" y2="212.9" stroke="rgb(145,58,98)"/><line x1="801.7" y1="267.5" x2="806.9" y2="253.6" stroke="rgb(130,61,112)"/><line x1="625.6" y1="189.2" x2="630.4" y2="189.0" stroke="rgb(45,80,190)"/><line x1="617.5" y1="332.9" x2="611.8" y2="353.5" stroke="rgb(185,50,62)"/><line x1="460.8" y1="302.2" x2="495.7" y2="318.0" stroke="rgb(185,50,62)"/><line x1="779.1" y1="282.0" x2="771.8" y2="311.0" stroke="rgb(185,50,62)"/><line x1="719.9" y1="257.7" x2="752.4" y2="268.2" stroke="rgb(185,50,62)"/><line x1="495.7" y1="318.0" x2="531.9" y2="321.4" stroke="rgb(185,50,62)"/><line x1="574.2" y1="351.1" x2="611.8" y2="353.5" stroke="rgb(185,50,62)"/><line x1="657.3" y1="484.5" x2="691.6" y2="506.9" stroke="rgb(185,50,62)"/><line x1="510.1" y1="388.2" x2="537.4" y2="413.0" stroke="rgb(185,50,62)"/><line x1="846.7" y1="309.1" x2="848.8" y2="297.2" stroke="rgb(74,73,163)"/><line x1="717.4" y1="278.0" x2="716.2" y2="300.6" stroke="rgb(185,50,62)"/><line x1="768.2" y1="428.1" x2="758.0" y2="454.3" stroke="rgb(185,50,62)"/><line x1="774.0" y1="402.5" x2="803.8" y2="393.1" stroke="rgb(185,50,62)"/><line x1="801.6" y1="417.9" x2="794.9" y2="442.8" stroke="rgb(185,50,62)"/><line x1="867.5" y1="373.1" x2="866.3" y2="355.8" stroke="rgb(45,80,190)"/><line x1="701.3" y1="245.0" x2="734.3" y2="233.8" stroke="rgb(182,50,64)"/><line x1="619.3" y1="211.1" x2="575.5" y2="212.9" stroke="rgb(156,56,87)"/><line x1="417.4" y1="303.8" x2="410.4" y2="324.8" stroke="rgb(140,59,102)"/><line x1="379.9" y1="470.3" x2="396.1" y2="517.5" stroke="rgb(45,80,190)"/><line x1="860.8" y1="410.7" x2="868.7" y2="397.2" stroke="rgb(96,68,142)"/><line x1="753.3" y1="219.4" x2="789.9" y2="239.4" stroke="rgb(123,63,118)"/><line x1="498.3" y1="474.1" x2="530.6" y2="483.1" stroke="rgb(185,50,62)"/><line x1="826.0" y1="430.9" x2="815.5" y2="459.4" stroke="rgb(185,50,62)"/><line x1="716.5" y1="645.0" x2="707.0" y2="651.3" stroke="rgb(49,79,186)"/><line x1="530.6" y1="483.1" x2="577.6" y2="484.7" stroke="rgb(185,50,62)"/><line x1="776.0" y1="556.3" x2="814.4" y2="541.3" stroke="rgb(159,55,85)"/><line x1="383.9" y1="351.7" x2="386.3" y2="387.0" stroke="rgb(99,68,140)"/><line x1="410.7" y1="546.6" x2="437.1" y2="568.4" stroke="rgb(79,72,158)"/><line x1="521.2" y1="278.7" x2="546.2" y2="303.4" stroke="rgb(185,50,62)"/><line x1="784.4" y1="378.1" x2="774.0" y2="402.5" stroke="rgb(185,50,62)"/><line x1="633.7" y1="260.9" x2="641.8" y2="274.3" stroke="rgb(185,50,62)"/><line x1="863.9" y1="449.8" x2="858.9" y2="485.1" stroke="rgb(88,70,150)"/><line x1="607.7" y1="440.0" x2="640.7" y2="463.5" stroke="rgb(185,50,62)"/><line x1="680.2" y1="222.7" x2="702.7" y2="210.7" stroke="rgb(158,55,86)"/><line x1="702.7" y1="210.7" x2="709.7" y2="199.5" stroke="rgb(125,62,116)"/><line x1="706.1" y1="569.2" x2="666.1" y2="598.6" stroke="rgb(168,53,77)"/><line x1="741.8" y1="612.2" x2="746.3" y2="624.8" stroke="rgb(98,68,140)"/><line x1="615.1" y1="245.0" x2="600.8" y2="274.2" stroke="rgb(185,50,62)"/><line x1="822.0" y1="253.7" x2="832.5" y2="266.7" stroke="rgb(45,80,190)"/><line x1="521.2" y1="278.7" x2="556.1" y2="287.4" stroke="rgb(185,50,62)"/><line x1="784.8" y1="468.8" x2="815.5" y2="459.4" stroke="rgb(185,50,62)"/><line x1="556.1" y1="287.4" x2="602.0" y2="291.4" stroke="rgb(185,50,62)"/><line x1="809.2" y1="240.5" x2="792.9" y2="224.9" stroke="rgb(45,80,190)"/><line x1="703.8" y1="324.8" x2="700.9" y2="345.9" stroke="rgb(185,50,62)"/><line x1="649.4" y1="541.0" x2="719.9" y2="532.2" stroke="rgb(185,50,62)"/><line x1="399.1" y1="466.2" x2="390.7" y2="488.9" stroke="rgb(116,64,124)"/><line x1="531.9" y1="321.4" x2="575.7" y2="329.0" stroke="rgb(185,50,62)"/><line x1="806.9" y1="253.6" x2="817.3" y2="280.2" stroke="rgb(125,62,116)"/><line x1="769.9" y1="233.2" x2="789.9" y2="239.4" stroke="rgb(128,62,113)"/><line x1="433.8" y1="481.1" x2="423.6" y2="509.9" stroke="rgb(171,52,74)"/><line x1="575.7" y1="329.0" x2="617.5" y2="332.9" stroke="rgb(185,50,62)"/><line x1="604.9" y1="377.0" x2="622.9" y2="420.3" stroke="rgb(185,50,62)"/><line x1="775.2" y1="218.7" x2="791.7" y2="226.3" stroke="rgb(81,72,156)"/><line x1="663.5" y1="352.9" x2="700.9" y2="345.9" stroke="rgb(185,50,62)"/><line x1="580.4" y1="395.4" x2="622.9" y2="420.3" stroke="rgb(185,50,62)"/><line x1="475.7" y1="579.3" x2="487.2" y2="606.6" stroke="rgb(127,62,114)"/><line x1="780.3" y1="255.7" x2="779.1" y2="282.0" stroke="rgb(171,52,74)"/><line x1="846.8" y1="398.6" x2="860.8" y2="410.7" stroke="rgb(132,61,110)"/><line x1="832.3" y1="379.3" x2="848.7" y2="370.8" stroke="rgb(154,56,89)"/><line x1="447.1" y1="589.3" x2="504.2" y2="626.8" stroke="rgb(79,72,158)"/><line x1="848.7" y1="370.8" x2="860.7" y2="356.8" stroke="rgb(117,64,123)"/><line x1="860.8" y1="410.7" x2="866.5" y2="424.2" stroke="rgb(104,67,135)"/><line x1="461.3" y1="330.4" x2="454.3" y2="351.3" stroke="rgb(185,50,62)"/><line x1="615.1" y1="245.0" x2="584.5" y2="255.7" stroke="rgb(185,50,62)"/><line x1="538.8" y1="198.5" x2="515.2" y2="203.4" stroke="rgb(104,67,135)"/><line x1="716.2" y1="300.6" x2="737.5" y2="316.4" stroke="rgb(185,50,62)"/><line x1="819.0" y1="361.7" x2="828.9" y2="405.8" stroke="rgb(180,50,65)"/><line x1="423.6" y1="509.9" x2="424.6" y2="540.0" stroke="rgb(142,59,100)"/><line x1="408.0" y1="379.5" x2="416.3" y2="405.4" stroke="rgb(169,53,76)"/><line x1="450.4" y1="270.8" x2="423.7" y2="273.7" stroke="rgb(136,60,106)"/><line x1="389.2" y1="317.3" x2="384.1" y2="334.6" stroke="rgb(45,80,190)"/><line x1="838.8" y1="350.3" x2="848.7" y2="370.8" stroke="rgb(144,58,99)"/><line x1="701.3" y1="245.0" x2="719.9" y2="257.7" stroke="rgb(185,50,62)"/><line x1="709.7" y1="199.5" x2="693.4" y2="190.8" stroke="rgb(85,71,153)"/><line x1="814.4" y1="541.3" x2="814.5" y2="565.7" stroke="rgb(119,63,121)"/><line x1="693.4" y1="190.8" x2="660.9" y2="188.8" stroke="rgb(48,79,187)"/><line x1="744.5" y1="339.3" x2="737.3" y2="363.3" stroke="rgb(185,50,62)"/><line x1="771.8" y1="311.0" x2="804.1" y2="322.5" stroke="rgb(185,50,62)"/><line x1="638.4" y1="290.7" x2="681.2" y2="285.4" stroke="rgb(185,50,62)"/><line x1="492.4" y1="497.4" x2="526.9" y2="532.2" stroke="rgb(185,50,62)"/><line x1="855.6" y1="436.1" x2="866.5" y2="424.2" stroke="rgb(110,65,129)"/><line x1="797.3" y1="299.2" x2="819.3" y2="309.7" stroke="rgb(169,53,76)"/><line x1="398.5" y1="295.8" x2="389.2" y2="317.3" stroke="rgb(51,78,183)"/><line x1="424.6" y1="540.0" x2="462.9" y2="550.4" stroke="rgb(151,57,92)"/><line x1="821.3" y1="510.7" x2="858.9" y2="485.1" stroke="rgb(121,63,120)"/><line x1="465.8" y1="254.8" x2="450.4" y2="270.8" stroke="rgb(157,55,87)"/><line x1="469.6" y1="612.9" x2="504.2" y2="626.8" stroke="rgb(67,75,169)"/><line x1="657.7" y1="419.9" x2="684.4" y2="437.1" stroke="rgb(185,50,62)"/><line x1="548.8" y1="393.4" x2="537.4" y2="413.0" stroke="rgb(185,50,62)"/><line x1="608.7" y1="202.5" x2="631.7" y2="203.3" stroke="rgb(134,60,108)"/><line x1="867.5" y1="373.1" x2="870.0" y2="381.9" stroke="rgb(45,80,190)"/><line x1="528.1" y1="193.7" x2="515.2" y2="203.4" stroke="rgb(83,71,154)"/><line x1="432.9" y1="316.8" x2="410.4" y2="324.8" stroke="rgb(157,55,87)"/><line x1="529.9" y1="342.9" x2="568.3" y2="371.5" stroke="rgb(185,50,62)"/><line x1="574.2" y1="351.1" x2="604.9" y2="377.0" stroke="rgb(185,50,62)"/><line x1="565.5" y1="222.0" x2="576.0" y2="238.1" stroke="rgb(184,50,62)"/><line x1="666.1" y1="598.6" x2="611.6" y2="622.0" stroke="rgb(149,57,94)"/><line x1="420.9" y1="260.0" x2="423.7" y2="273.7" stroke="rgb(94,69,145)"/><line x1="568.3" y1="371.5" x2="548.8" y2="393.4" stroke="rgb(185,50,62)"/><line x1="719.9" y1="590.7" x2="679.5" y2="619.6" stroke="rgb(149,57,94)"/><line x1="383.9" y1="351.7" x2="378.1" y2="367.4" stroke="rgb(70,74,167)"/><line x1="526.9" y1="532.2" x2="584.1" y2="568.3" stroke="rgb(185,50,62)"/><line x1="737.3" y1="363.3" x2="770.4" y2="357.7" stroke="rgb(185,50,62)"/><line x1="392.2" y1="368.0" x2="386.3" y2="387.0" stroke="rgb(119,63,121)"/><line x1="835.5" y1="296.4" x2="851.6" y2="335.2" stroke="rgb(113,65,127)"/><line x1="401.3" y1="344.9" x2="408.0" y2="379.5" stroke="rgb(148,57,95)"/><line x1="819.0" y1="361.7" x2="838.8" y2="350.3" stroke="rgb(166,53,78)"/><line x1="686.3" y1="460.5" x2="691.6" y2="506.9" stroke="rgb(185,50,62)"/><line x1="556.1" y1="287.4" x2="546.2" y2="303.4" stroke="rgb(185,50,62)"/><line x1="602.0" y1="291.4" x2="589.2" y2="308.2" stroke="rgb(185,50,62)"/><line x1="636.6" y1="444.3" x2="640.7" y2="463.5" stroke="rgb(185,50,62)"/><line x1="623.0" y1="198.2" x2="623.2" y2="193.9" stroke="rgb(108,66,131)"/><line x1="410.7" y1="546.6" x2="447.1" y2="589.3" stroke="rgb(62,76,174)"/><line x1="822.0" y1="253.7" x2="837.7" y2="277.8" stroke="rgb(61,76,174)"/><line x1="828.9" y1="405.8" x2="846.8" y2="398.6" stroke="rgb(163,54,81)"/><line x1="681.2" y1="285.4" x2="703.8" y2="324.8" stroke="rgb(185,50,62)"/><line x1="603.8" y1="196.7" x2="585.5" y2="202.3" stroke="rgb(122,63,119)"/><line x1="758.0" y1="454.3" x2="794.9" y2="442.8" stroke="rgb(185,50,62)"/><line x1="402.4" y1="446.9" x2="428.3" y2="454.8" stroke="rgb(170,53,75)"/><line x1="804.1" y1="322.5" x2="802.0" y2="344.2" stroke="rgb(185,50,62)"/><line x1="775.2" y1="218.7" x2="789.9" y2="239.4" stroke="rgb(105,67,134)"/><line x1="434.5" y1="339.5" x2="436.4" y2="367.1" stroke="rgb(185,50,62)"/><line x1="513.3" y1="561.2" x2="584.1" y2="568.3" stroke="rgb(181,50,65)"/><line x1="556.1" y1="635.9" x2="615.4" y2="642.3" stroke="rgb(104,67,135)"/><line x1="633.5" y1="398.3" x2="622.9" y2="420.3" stroke="rgb(185,50,62)"/><line x1="691.6" y1="506.9" x2="649.4" y2="541.0" stroke="rgb(185,50,62)"/><line x1="521.5" y1="218.9" x2="498.7" y2="220.7" stroke="rgb(143,58,100)"/><line x1="649.4" y1="541.0" x2="706.1" y2="569.2" stroke="rgb(185,50,62)"/><line x1="752.1" y1="206.9" x2="737.4" y2="197.4" stroke="rgb(68,75,168)"/><line x1="624.6" y1="487.4" x2="657.3" y2="484.5" stroke="rgb(185,50,62)"/><line x1="488.8" y1="336.2" x2="454.3" y2="351.3" stroke="rgb(185,50,62)"/><line x1="624.6" y1="487.4" x2="649.4" y2="541.0" stroke="rgb(185,50,62)"/><line x1="542.4" y1="209.8" x2="515.2" y2="203.4" stroke="rgb(123,63,118)"/><line x1="779.1" y1="282.0" x2="801.7" y2="267.5" stroke="rgb(165,54,80)"/><line x1="434.9" y1="291.8" x2="460.8" y2="302.2" stroke="rgb(174,52,71)"/><line x1="498.7" y1="220.7" x2="470.7" y2="219.4" stroke="rgb(115,64,125)"/><line x1="680.2" y1="222.7" x2="688.8" y2="235.6" stroke="rgb(181,50,65)"/><line x1="454.3" y1="351.3" x2="452.3" y2="398.7" stroke="rgb(185,50,62)"/><line x1="438.4" y1="240.5" x2="436.6" y2="258.1" stroke="rgb(96,68,142)"/><line x1="758.9" y1="204.7" x2="775.2" y2="218.7" stroke="rgb(66,75,170)"/><line x1="488.8" y1="336.2" x2="529.9" y2="342.9" stroke="rgb(185,50,62)"/><line x1="408.0" y1="379.5" x2="396.0" y2="393.5" stroke="rgb(151,57,92)"/><line x1="802.0" y1="344.2" x2="821.3" y2="338.5" stroke="rgb(184,50,62)"/><line x1="424.3" y1="387.7" x2="416.3" y2="405.4" stroke="rgb(181,50,65)"/><line x1="838.8" y1="350.3" x2="832.3" y2="379.3" stroke="rgb(160,55,84)"/><line x1="436.4" y1="367.1" x2="452.3" y2="398.7" stroke="rgb(185,50,62)"/><line x1="851.6" y1="335.2" x2="856.7" y2="322.7" stroke="rgb(90,70,148)"/><line x1="809.2" y1="240.5" x2="814.0" y2="244.4" stroke="rgb(45,80,190)"/><line x1="469.7" y1="381.1" x2="491.6" y2="405.1" stroke="rgb(185,50,62)"/><line x1="638.4" y1="290.7" x2="623.2" y2="311.6" stroke="rgb(185,50,62)"/><line x1="724.1" y1="437.0" x2="758.0" y2="454.3" stroke="rgb(185,50,62)"/><line x1="856.7" y1="322.7" x2="854.4" y2="310.2" stroke="rgb(48,79,187)"/><line x1="590.6" y1="540.3" x2="526.9" y2="532.2" stroke="rgb(185,50,62)"/><line x1="758.9" y1="204.7" x2="780.3" y2="215.7" stroke="rgb(45,80,190)"/><line x1="835.5" y1="296.4" x2="846.7" y2="309.1" stroke="rgb(106,66,133)"/><line x1="748.1" y1="406.2" x2="774.0" y2="402.5" stroke="rgb(185,50,62)"/><line x1="541.5" y1="595.9" x2="475.7" y2="579.3" stroke="rgb(156,56,87)"/><line x1="667.7" y1="660.3" x2="592.9" y2="664.1" stroke="rgb(46,79,188)"/><line x1="575.5" y1="212.9" x2="542.4" y2="209.8" stroke="rgb(149,57,94)"/><line x1="860.6" y1="382.4" x2="867.5" y2="373.1" stroke="rgb(90,70,148)"/><line x1="563.7" y1="189.7" x2="528.1" y2="193.7" stroke="rgb(57,77,178)"/><line x1="408.5" y1="275.8" x2="398.5" y2="295.8" stroke="rgb(56,77,179)"/><line x1="659.6" y1="194.4" x2="663.9" y2="189.8" stroke="rgb(82,71,155)"/><line x1="826.0" y1="430.9" x2="841.5" y2="423.6" stroke="rgb(170,53,75)"/><line x1="797.3" y1="299.2" x2="804.1" y2="322.5" stroke="rgb(182,50,64)"/><line x1="410.0" y1="288.6" x2="401.6" y2="313.7" stroke="rgb(106,66,133)"/><line x1="541.5" y1="595.9" x2="544.7" y2="616.2" stroke="rgb(147,57,95)"/><line x1="657.7" y1="419.9" x2="636.6" y2="444.3" stroke="rgb(185,50,62)"/><line x1="841.5" y1="423.6" x2="840.8" y2="467.5" stroke="rgb(154,56,89)"/><line x1="706.1" y1="569.2" x2="776.0" y2="556.3" stroke="rgb(183,50,63)"/><line x1="384.1" y1="334.6" x2="378.1" y2="367.4" stroke="rgb(45,80,190)"/><line x1="718.3" y1="393.2" x2="748.1" y2="406.2" stroke="rgb(185,50,62)"/><line x1="796.8" y1="489.0" x2="821.3" y2="510.7" stroke="rgb(179,51,67)"/><line x1="450.4" y1="270.8" x2="460.8" y2="302.2" stroke="rgb(175,52,71)"/><line x1="780.3" y1="215.7" x2="809.2" y2="240.5" stroke="rgb(49,79,185)"/><line x1="490.6" y1="268.4" x2="504.8" y2="294.4" stroke="rgb(185,50,62)"/><line x1="591.7" y1="228.1" x2="631.4" y2="231.5" stroke="rgb(185,50,62)"/><line x1="574.2" y1="351.1" x2="568.3" y2="371.5" stroke="rgb(185,50,62)"/><line x1="382.3" y1="407.0" x2="388.5" y2="434.1" stroke="rgb(114,65,126)"/><line x1="710.0" y1="483.9" x2="746.7" y2="476.5" stroke="rgb(185,50,62)"/><line x1="625.6" y1="189.2" x2="589.3" y2="188.9" stroke="rgb(45,80,190)"/><line x1="617.5" y1="332.9" x2="663.5" y2="352.9" stroke="rgb(185,50,62)"/><line x1="490.6" y1="268.4" x2="521.2" y2="278.7" stroke="rgb(185,50,62)"/><line x1="746.7" y1="476.5" x2="784.8" y2="468.8" stroke="rgb(185,50,62)"/><line x1="806.9" y1="253.6" x2="809.2" y2="240.5" stroke="rgb(91,70,147)"/><line x1="548.6" y1="249.7" x2="524.8" y2="260.2" stroke="rgb(185,50,62)"/><line x1="590.6" y1="540.3" x2="649.4" y2="541.0" stroke="rgb(185,50,62)"/><line x1="383.9" y1="351.7" x2="376.3" y2="394.3" stroke="rgb(75,73,162)"/><line x1="376.5" y1="438.4" x2="379.9" y2="470.3" stroke="rgb(45,80,190)"/><line x1="584.5" y1="255.7" x2="548.6" y2="249.7" stroke="rgb(185,50,62)"/><line x1="491.6" y1="405.1" x2="515.1" y2="433.7" stroke="rgb(185,50,62)"/><line x1="611.8" y1="353.5" x2="663.5" y2="352.9" stroke="rgb(185,50,62)"/><line x1="717.4" y1="278.0" x2="745.8" y2="295.8" stroke="rgb(185,50,62)"/><line x1="854.4" y1="310.2" x2="863.9" y2="342.9" stroke="rgb(45,80,190)"/><line x1="752.4" y1="268.2" x2="779.1" y2="282.0" stroke="rgb(185,50,62)"/><line x1="801.6" y1="417.9" x2="826.0" y2="430.9" stroke="rgb(185,50,62)"/><line x1="608.7" y1="202.5" x2="619.3" y2="211.1" stroke="rgb(144,58,98)"/><line x1="396.1" y1="517.5" x2="410.7" y2="546.6" stroke="rgb(53,78,182)"/><line x1="437.1" y1="568.4" x2="447.1" y2="589.3" stroke="rgb(89,70,149)"/><line x1="549.7" y1="507.1" x2="590.6" y2="540.3" stroke="rgb(185,50,62)"/><line x1="828.9" y1="405.8" x2="841.5" y2="423.6" stroke="rgb(168,53,76)"/><line x1="589.3" y1="188.9" x2="563.7" y2="189.7" stroke="rgb(45,80,190)"/><line x1="508.0" y1="197.8" x2="492.6" y2="208.8" stroke="rgb(75,73,162)"/><line x1="619.3" y1="211.1" x2="618.4" y2="220.0" stroke="rgb(164,54,80)"/><line x1="492.6" y1="208.8" x2="498.7" y2="220.7" stroke="rgb(116,64,124)"/><line x1="717.4" y1="278.0" x2="752.4" y2="268.2" stroke="rgb(185,50,62)"/><line x1="615.4" y1="642.3" x2="592.4" y2="652.8" stroke="rgb(93,69,145)"/><line x1="659.2" y1="203.3" x2="652.0" y2="216.8" stroke="rgb(150,57,93)"/><line x1="752.4" y1="268.2" x2="780.3" y2="255.7" stroke="rgb(176,51,70)"/><line x1="589.6" y1="461.2" x2="577.6" y2="484.7" stroke="rgb(185,50,62)"/><line x1="434.5" y1="339.5" x2="418.4" y2="358.7" stroke="rgb(178,51,68)"/><line x1="688.8" y1="235.6" x2="734.3" y2="233.8" stroke="rgb(179,51,67)"/><line x1="771.8" y1="311.0" x2="797.3" y2="299.2" stroke="rgb(185,50,62)"/><line x1="802.0" y1="344.2" x2="803.8" y2="393.1" stroke="rgb(185,50,62)"/><line x1="774.0" y1="402.5" x2="768.2" y2="428.1" stroke="rgb(185,50,62)"/><line x1="784.4" y1="378.1" x2="803.8" y2="393.1" stroke="rgb(185,50,62)"/><line x1="863.9" y1="449.8" x2="865.3" y2="474.4" stroke="rgb(63,75,172)"/><line x1="649.4" y1="541.0" x2="648.4" y2="570.0" stroke="rgb(185,50,62)"/><line x1="378.1" y1="367.4" x2="374.1" y2="409.3" stroke="rgb(47,79,187)"/><line x1="817.3" y1="280.2" x2="837.8" y2="323.8" stroke="rgb(136,60,106)"/><line x1="561.9" y1="193.8" x2="538.8" y2="198.5" stroke="rgb(98,68,140)"/><line x1="663.5" y1="352.9" x2="657.8" y2="373.4" stroke="rgb(185,50,62)"/><line x1="413.3" y1="428.6" x2="428.3" y2="454.8" stroke="rgb(180,50,66)"/><line x1="703.8" y1="324.8" x2="744.5" y2="339.3" stroke="rgb(185,50,62)"/><line x1="700.9" y1="345.9" x2="691.8" y2="368.4" stroke="rgb(185,50,62)"/><line x1="680.2" y1="222.7" x2="663.3" y2="240.5" stroke="rgb(185,50,62)"/><line x1="399.1" y1="466.2" x2="423.6" y2="509.9" stroke="rgb(147,58,96)"/><line x1="815.5" y1="459.4" x2="834.2" y2="452.2" stroke="rgb(178,51,68)"/><line x1="752.1" y1="206.9" x2="758.9" y2="204.7" stroke="rgb(65,75,171)"/><line x1="433.8" y1="481.1" x2="454.3" y2="517.0" stroke="rgb(185,50,62)"/><line x1="623.2" y1="311.6" x2="617.5" y2="332.9" stroke="rgb(185,50,62)"/><line x1="719.9" y1="532.2" x2="785.4" y2="523.5" stroke="rgb(185,50,62)"/><line x1="809.2" y1="240.5" x2="822.0" y2="253.7" stroke="rgb(62,76,174)"/><line x1="579.8" y1="419.9" x2="607.7" y2="440.0" stroke="rgb(185,50,62)"/><line x1="469.7" y1="381.1" x2="452.3" y2="398.7" stroke="rgb(185,50,62)"/><line x1="835.5" y1="296.4" x2="837.8" y2="323.8" stroke="rgb(126,62,115)"/><line x1="462.3" y1="467.4" x2="454.3" y2="517.0" stroke="rgb(185,50,62)"/><line x1="623.2" y1="193.9" x2="603.8" y2="196.7" stroke="rgb(105,67,134)"/><line x1="780.3" y1="255.7" x2="801.7" y2="267.5" stroke="rgb(151,57,92)"/><line x1="752.4" y1="268.2" x2="771.8" y2="311.0" stroke="rgb(185,50,62)"/><line x1="837.7" y1="277.8" x2="846.7" y2="309.1" stroke="rgb(81,72,156)"/><line x1="773.7" y1="614.2" x2="749.3" y2="631.6" stroke="rgb(45,79,189)"/><line x1="603.8" y1="196.7" x2="608.7" y2="202.5" stroke="rgb(122,63,118)"/><line x1="789.9" y1="239.4" x2="806.9" y2="253.6" stroke="rgb(117,64,123)"/><line x1="563.7" y1="189.7" x2="556.5" y2="189.8" stroke="rgb(45,80,190)"/><line x1="860.6" y1="382.4" x2="868.7" y2="397.2" stroke="rgb(94,69,144)"/><line x1="556.5" y1="189.8" x2="528.1" y2="193.7" stroke="rgb(45,80,190)"/><line x1="659.6" y1="194.4" x2="682.1" y2="194.7" stroke="rgb(99,68,140)"/><line x1="410.0" y1="288.6" x2="398.5" y2="295.8" stroke="rgb(81,72,156)"/><line x1="519.5" y1="238.6" x2="548.6" y2="249.7" stroke="rgb(185,50,62)"/><line x1="615.1" y1="245.0" x2="633.7" y2="260.9" stroke="rgb(185,50,62)"/><line x1="780.3" y1="255.7" x2="789.9" y2="239.4" stroke="rgb(139,59,103)"/><line x1="716.5" y1="645.0" x2="653.4" y2="654.6" stroke="rgb(71,74,165)"/><line x1="789.9" y1="239.4" x2="791.7" y2="226.3" stroke="rgb(96,68,142)"/><line x1="542.4" y1="209.8" x2="537.8" y2="228.0" stroke="rgb(157,55,87)"/><line x1="663.3" y1="240.5" x2="633.7" y2="260.9" stroke="rgb(185,50,62)"/><line x1="484.4" y1="359.7" x2="469.7" y2="381.1" stroke="rgb(185,50,62)"/><line x1="606.5" y1="601.3" x2="544.7" y2="616.2" stroke="rgb(150,57,93)"/><line x1="525.3" y1="364.7" x2="510.1" y2="388.2" stroke="rgb(185,50,62)"/><line x1="498.7" y1="220.7" x2="490.8" y2="244.7" stroke="rgb(152,56,91)"/><line x1="817.3" y1="280.2" x2="825.9" y2="268.1" stroke="rgb(115,64,125)"/><line x1="423.6" y1="509.9" x2="462.9" y2="550.4" stroke="rgb(166,54,79)"/><line x1="487.2" y1="606.6" x2="544.7" y2="616.2" stroke="rgb(121,63,120)"/><line x1="490.6" y1="268.4" x2="478.3" y2="285.6" stroke="rgb(185,50,62)"/><line x1="522.4" y1="641.6" x2="592.4" y2="652.8" stroke="rgb(74,73,162)"/><line x1="659.6" y1="194.4" x2="624.0" y2="190.6" stroke="rgb(87,70,151)"/><line x1="378.1" y1="367.4" x2="376.2" y2="382.0" stroke="rgb(45,80,190)"/><line x1="382.3" y1="407.0" x2="376.9" y2="422.0" stroke="rgb(91,69,147)"/><line x1="821.3" y1="510.7" x2="814.4" y2="541.3" stroke="rgb(149,57,94)"/><line x1="575.5" y1="212.9" x2="591.7" y2="228.1" stroke="rgb(171,52,74)"/><line x1="744.5" y1="339.3" x2="770.4" y2="357.7" stroke="rgb(185,50,62)"/><line x1="710.0" y1="483.9" x2="719.9" y2="532.2" stroke="rgb(185,50,62)"/><line x1="398.5" y1="295.8" x2="389.6" y2="333.6" stroke="rgb(75,73,162)"/><line x1="490.8" y1="244.7" x2="465.8" y2="254.8" stroke="rgb(162,54,82)"/><line x1="822.0" y1="253.7" x2="814.0" y2="244.4" stroke="rgb(45,80,190)"/><line x1="401.6" y1="313.7" x2="401.3" y2="344.9" stroke="rgb(123,63,118)"/><line x1="491.6" y1="405.1" x2="479.2" y2="426.5" stroke="rgb(185,50,62)"/><line x1="548.8" y1="393.4" x2="579.8" y2="419.9" stroke="rgb(185,50,62)"/><line x1="441.0" y1="442.3" x2="433.8" y2="481.1" stroke="rgb(185,50,62)"/><line x1="389.6" y1="333.6" x2="401.3" y2="344.9" stroke="rgb(113,65,127)"/><line x1="631.4" y1="231.5" x2="633.7" y2="260.9" stroke="rgb(185,50,62)"/><line x1="752.4" y1="268.2" x2="745.8" y2="295.8" stroke="rgb(185,50,62)"/><line x1="828.9" y1="405.8" x2="826.0" y2="430.9" stroke="rgb(180,51,66)"/><line x1="832.5" y1="266.7" x2="848.8" y2="297.2" stroke="rgb(45,80,190)"/><line x1="605.6" y1="505.5" x2="590.6" y2="540.3" stroke="rgb(185,50,62)"/><line x1="631.7" y1="203.3" x2="642.1" y2="198.2" stroke="rgb(127,62,114)"/><line x1="432.9" y1="316.8" x2="434.5" y2="339.5" stroke="rgb(178,51,68)"/><line x1="590.6" y1="540.3" x2="648.4" y2="570.0" stroke="rgb(185,50,62)"/><line x1="688.8" y1="235.6" x2="701.3" y2="245.0" stroke="rgb(185,50,62)"/><line x1="577.6" y1="484.7" x2="624.6" y2="487.4" stroke="rgb(185,50,62)"/><line x1="666.1" y1="598.6" x2="679.5" y2="619.6" stroke="rgb(150,57,93)"/><line x1="716.2" y1="300.6" x2="745.8" y2="295.8" stroke="rgb(185,50,62)"/><line x1="508.0" y1="197.8" x2="483.9" y2="206.3" stroke="rgb(49,79,186)"/><line x1="716.8" y1="221.8" x2="734.3" y2="233.8" stroke="rgb(163,54,81)"/><line x1="568.3" y1="371.5" x2="580.4" y2="395.4" stroke="rgb(185,50,62)"/><line x1="719.9" y1="590.7" x2="741.8" y2="612.2" stroke="rgb(139,59,103)"/><line x1="399.1" y1="466.2" x2="433.8" y2="481.1" stroke="rgb(162,54,82)"/><line x1="492.6" y1="208.8" x2="470.7" y2="219.4" stroke="rgb(94,69,145)"/><line x1="591.7" y1="228.1" x2="615.1" y2="245.0" stroke="rgb(185,50,62)"/><line x1="814.4" y1="541.3" x2="846.0" y2="521.9" stroke="rgb(109,66,131)"/><line x1="392.2" y1="368.0" x2="396.0" y2="393.5" stroke="rgb(133,61,109)"/><line x1="589.2" y1="193.4" x2="563.7" y2="189.7" stroke="rgb(75,73,162)"/><line x1="437.1" y1="568.4" x2="475.7" y2="579.3" stroke="rgb(127,62,114)"/><line x1="541.5" y1="595.9" x2="606.5" y2="601.3" stroke="rgb(157,55,86)"/><line x1="860.7" y1="356.8" x2="867.5" y2="373.1" stroke="rgb(82,71,155)"/><line x1="556.1" y1="287.4" x2="589.2" y2="308.2" stroke="rgb(185,50,62)"/><line x1="611.6" y1="622.0" x2="679.5" y2="619.6" stroke="rgb(136,60,106)"/><line x1="819.0" y1="361.7" x2="803.8" y2="393.1" stroke="rgb(185,50,62)"/><line x1="602.0" y1="291.4" x2="623.2" y2="311.6" stroke="rgb(185,50,62)"/><line x1="623.0" y1="198.2" x2="603.8" y2="196.7" stroke="rgb(115,64,125)"/><line x1="388.5" y1="434.1" x2="390.7" y2="488.9" stroke="rgb(109,66,131)"/><line x1="589.2" y1="193.4" x2="585.5" y2="202.3" stroke="rgb(114,65,126)"/><line x1="688.8" y1="235.6" x2="716.8" y2="221.8" stroke="rgb(174,52,71)"/><line x1="584.5" y1="661.4" x2="592.9" y2="664.1" stroke="rgb(46,79,188)"/><line x1="584.1" y1="568.3" x2="606.5" y2="601.3" stroke="rgb(167,53,77)"/><line x1="413.3" y1="428.6" x2="402.4" y2="446.9" stroke="rgb(162,54,82)"/><line x1="562.6" y1="200.5" x2="538.8" y2="198.5" stroke="rgb(113,65,127)"/><line x1="602.0" y1="291.4" x2="638.4" y2="290.7" stroke="rgb(185,50,62)"/><line x1="441.0" y1="442.3" x2="428.3" y2="454.8" stroke="rgb(185,50,62)"/><line x1="652.0" y1="216.8" x2="680.2" y2="222.7" stroke="rgb(170,53,75)"/><line x1="804.1" y1="322.5" x2="821.3" y2="338.5" stroke="rgb(178,51,67)"/><line x1="460.8" y1="302.2" x2="432.9" y2="316.8" stroke="rgb(182,50,64)"/><line x1="819.3" y1="309.7" x2="837.8" y2="323.8" stroke="rgb(147,57,95)"/><line x1="617.5" y1="332.9" x2="659.1" y2="331.6" stroke="rgb(185,50,62)"/><line x1="821.3" y1="338.5" x2="819.0" y2="361.7" stroke="rgb(177,51,68)"/><line x1="561.9" y1="193.8" x2="563.7" y2="189.7" stroke="rgb(74,73,163)"/><line x1="700.9" y1="345.9" x2="744.5" y2="339.3" stroke="rgb(185,50,62)"/><line x1="579.8" y1="419.9" x2="558.5" y2="437.2" stroke="rgb(185,50,62)"/><line x1="579.8" y1="419.9" x2="589.6" y2="461.2" stroke="rgb(185,50,62)"/><line x1="622.9" y1="420.3" x2="607.7" y2="440.0" stroke="rgb(185,50,62)"/><line x1="398.5" y1="295.8" x2="401.6" y2="313.7" stroke="rgb(86,71,152)"/><line x1="633.5" y1="398.3" x2="657.7" y2="419.9" stroke="rgb(185,50,62)"/><line x1="691.6" y1="506.9" x2="719.9" y2="532.2" stroke="rgb(185,50,62)"/><line x1="521.5" y1="218.9" x2="519.5" y2="238.6" stroke="rgb(164,54,80)"/><line x1="418.4" y1="358.7" x2="436.4" y2="367.1" stroke="rgb(183,50,63)"/><line x1="789.9" y1="239.4" x2="801.7" y2="267.5" stroke="rgb(132,61,109)"/><line x1="754.2" y1="496.4" x2="785.4" y2="523.5" stroke="rgb(185,50,62)"/><line x1="791.7" y1="226.3" x2="806.9" y2="253.6" stroke="rgb(94,69,144)"/><line x1="860.6" y1="382.4" x2="860.8" y2="410.7" stroke="rgb(112,65,128)"/><line x1="488.8" y1="336.2" x2="484.4" y2="359.7" stroke="rgb(185,50,62)"/><line x1="521.5" y1="218.9" x2="490.8" y2="244.7" stroke="rgb(159,55,85)"/><line x1="542.4" y1="209.8" x2="521.5" y2="218.9" stroke="rgb(145,58,97)"/><line x1="376.3" y1="394.3" x2="376.9" y2="422.0" stroke="rgb(73,73,164)"/><line x1="478.3" y1="285.6" x2="460.8" y2="302.2" stroke="rgb(185,50,62)"/><line x1="498.7" y1="220.7" x2="477.6" y2="233.4" stroke="rgb(137,60,105)"/><line x1="680.2" y1="222.7" x2="716.8" y2="221.8" stroke="rgb(166,53,79)"/><line x1="725.6" y1="196.7" x2="752.1" y2="206.9" stroke="rgb(82,71,155)"/><line x1="814.5" y1="565.7" x2="813.4" y2="577.5" stroke="rgb(68,74,168)"/><line x1="519.5" y1="238.6" x2="490.8" y2="244.7" stroke="rgb(173,52,72)"/><line x1="691.8" y1="368.4" x2="718.3" y2="393.2" stroke="rgb(185,50,62)"/><line x1="424.3" y1="387.7" x2="448.3" y2="418.4" stroke="rgb(185,50,62)"/><line x1="568.3" y1="371.5" x2="604.9" y2="377.0" stroke="rgb(185,50,62)"/><line x1="784.8" y1="468.8" x2="796.8" y2="489.0" stroke="rgb(185,50,62)"/><line x1="452.3" y1="398.7" x2="479.2" y2="426.5" stroke="rgb(185,50,62)"/><line x1="676.2" y1="392.4" x2="718.3" y2="393.2" stroke="rgb(185,50,62)"/><line x1="638.4" y1="290.7" x2="664.3" y2="308.0" stroke="rgb(185,50,62)"/><line x1="851.6" y1="335.2" x2="848.7" y2="370.8" stroke="rgb(124,62,116)"/><line x1="716.5" y1="645.0" x2="749.3" y2="631.6" stroke="rgb(51,78,183)"/><line x1="846.0" y1="521.9" x2="813.4" y2="577.5" stroke="rgb(57,77,178)"/><line x1="681.2" y1="285.4" x2="716.2" y2="300.6" stroke="rgb(185,50,62)"/><line x1="667.7" y1="660.3" x2="666.0" y2="661.5" stroke="rgb(45,80,190)"/><line x1="575.5" y1="212.9" x2="565.5" y2="222.0" stroke="rgb(164,54,80)"/><line x1="504.2" y1="626.8" x2="522.4" y2="641.6" stroke="rgb(74,73,163)"/><line x1="525.4" y1="193.4" x2="508.0" y2="197.8" stroke="rgb(45,80,190)"/><line x1="618.4" y1="220.0" x2="591.7" y2="228.1" stroke="rgb(179,51,66)"/><line x1="681.2" y1="285.4" x2="717.4" y2="278.0" stroke="rgb(185,50,62)"/><line x1="513.6" y1="459.2" x2="498.3" y2="474.1" stroke="rgb(185,50,62)"/><line x1="531.9" y1="321.4" x2="488.8" y2="336.2" stroke="rgb(185,50,62)"/><line x1="866.5" y1="424.2" x2="871.8" y2="408.3" stroke="rgb(68,74,168)"/><line x1="556.1" y1="635.9" x2="522.4" y2="641.6" stroke="rgb(84,71,154)"/><line x1="401.6" y1="313.7" x2="389.6" y2="333.6" stroke="rgb(101,67,138)"/><line x1="549.7" y1="507.1" x2="526.9" y2="532.2" stroke="rgb(185,50,62)"/><line x1="858.9" y1="485.1" x2="865.3" y2="474.4" stroke="rgb(56,77,179)"/><line x1="410.4" y1="324.8" x2="401.3" y2="344.9" stroke="rgb(138,59,104)"/><line x1="703.8" y1="324.8" x2="737.5" y2="316.4" stroke="rgb(185,50,62)"/><line x1="777.7" y1="330.9" x2="804.1" y2="322.5" stroke="rgb(185,50,62)"/><line x1="702.0" y1="416.7" x2="684.4" y2="437.1" stroke="rgb(185,50,62)"/><line x1="624.6" y1="487.4" x2="605.6" y2="505.5" stroke="rgb(185,50,62)"/><line x1="530.6" y1="483.1" x2="526.9" y2="532.2" stroke="rgb(185,50,62)"/><line x1="376.9" y1="422.0" x2="376.5" y2="438.4" stroke="rgb(72,74,164)"/><line x1="750.1" y1="386.3" x2="774.0" y2="402.5" stroke="rgb(185,50,62)"/><line x1="515.2" y1="203.4" x2="521.5" y2="218.9" stroke="rgb(127,62,114)"/><line x1="840.8" y1="467.5" x2="858.9" y2="485.1" stroke="rgb(117,64,124)"/><line x1="590.6" y1="540.3" x2="584.1" y2="568.3" stroke="rgb(185,50,62)"/><line x1="794.9" y1="442.8" x2="784.8" y2="468.8" stroke="rgb(185,50,62)"/><line x1="611.8" y1="353.5" x2="604.9" y2="377.0" stroke="rgb(185,50,62)"/><line x1="492.6" y1="208.8" x2="483.9" y2="206.3" stroke="rgb(71,74,165)"/><line x1="631.7" y1="203.3" x2="652.0" y2="216.8" stroke="rgb(151,57,92)"/><line x1="591.7" y1="228.1" x2="576.0" y2="238.1" stroke="rgb(185,50,62)"/><line x1="395.9" y1="417.9" x2="402.4" y2="446.9" stroke="rgb(147,58,96)"/><line x1="448.4" y1="228.0" x2="438.4" y2="240.5" stroke="rgb(51,78,183)"/><line x1="548.6" y1="249.7" x2="567.8" y2="268.7" stroke="rgb(185,50,62)"/><line x1="492.4" y1="497.4" x2="513.3" y2="561.2" stroke="rgb(185,50,62)"/><line x1="631.4" y1="231.5" x2="615.1" y2="245.0" stroke="rgb(185,50,62)"/><line x1="376.5" y1="438.4" x2="390.7" y2="488.9" stroke="rgb(81,72,156)"/><line x1="546.2" y1="303.4" x2="531.9" y2="321.4" stroke="rgb(185,50,62)"/><line x1="709.7" y1="199.5" x2="725.6" y2="196.7" stroke="rgb(91,69,147)"/><line x1="837.7" y1="277.8" x2="832.5" y2="266.7" stroke="rgb(45,79,189)"/><line x1="424.6" y1="540.0" x2="437.1" y2="568.4" stroke="rgb(118,64,122)"/><line x1="770.4" y1="357.7" x2="784.4" y2="378.1" stroke="rgb(185,50,62)"/><line x1="860.7" y1="356.8" x2="860.6" y2="382.4" stroke="rgb(102,67,137)"/><line x1="863.9" y1="342.9" x2="867.5" y2="373.1" stroke="rgb(57,77,178)"/><line x1="537.4" y1="413.0" x2="558.5" y2="437.2" stroke="rgb(185,50,62)"/><line x1="678.1" y1="640.0" x2="716.5" y2="645.0" stroke="rgb(81,72,156)"/><line x1="437.1" y1="568.4" x2="487.2" y2="606.6" stroke="rgb(108,66,131)"/><line x1="746.3" y1="624.8" x2="749.3" y2="631.6" stroke="rgb(61,76,174)"/><line x1="584.1" y1="568.3" x2="541.5" y2="595.9" stroke="rgb(169,53,76)"/><line x1="584.5" y1="255.7" x2="567.8" y2="268.7" stroke="rgb(185,50,62)"/><line x1="865.3" y1="474.4" x2="846.0" y2="521.9" stroke="rgb(53,78,182)"/><line x1="648.4" y1="570.0" x2="606.5" y2="601.3" stroke="rgb(167,53,78)"/><line x1="611.6" y1="622.0" x2="556.1" y2="635.9" stroke="rgb(120,63,121)"/><line x1="619.3" y1="211.1" x2="652.0" y2="216.8" stroke="rgb(161,55,83)"/><line x1="652.0" y1="216.8" x2="631.4" y2="231.5" stroke="rgb(179,51,67)"/><line x1="615.4" y1="642.3" x2="653.4" y2="654.6" stroke="rgb(91,70,147)"/><line x1="659.2" y1="203.3" x2="680.5" y2="207.4" stroke="rgb(138,59,104)"/><line x1="680.5" y1="207.4" x2="680.2" y2="222.7" stroke="rgb(158,55,86)"/><line x1="819.3" y1="309.7" x2="821.3" y2="338.5" stroke="rgb(165,54,79)"/><line x1="815.5" y1="459.4" x2="821.3" y2="510.7" stroke="rgb(173,52,72)"/><line x1="589.6" y1="461.2" x2="624.6" y2="487.4" stroke="rgb(185,50,62)"/><line x1="576.0" y1="238.1" x2="584.5" y2="255.7" stroke="rgb(185,50,62)"/><line x1="801.7" y1="267.5" x2="797.3" y2="299.2" stroke="rgb(162,54,82)"/><line x1="454.3" y1="351.3" x2="436.4" y2="367.1" stroke="rgb(185,50,62)"/><line x1="510.1" y1="388.2" x2="515.1" y2="433.7" stroke="rgb(185,50,62)"/><line x1="774.0" y1="402.5" x2="801.6" y2="417.9" stroke="rgb(185,50,62)"/><line x1="754.2" y1="496.4" x2="719.9" y2="532.2" stroke="rgb(185,50,62)"/><line x1="447.1" y1="589.3" x2="487.2" y2="606.6" stroke="rgb(92,69,146)"/><line x1="710.0" y1="483.9" x2="754.2" y2="496.4" stroke="rgb(185,50,62)"/></g></g>
<g mask="url(#outdome)"><g stroke-width="1.1" fill="none"><line x1="653.4" y1="654.6" x2="584.5" y2="661.4" stroke="rgb(67,44,50)"/><line x1="489.0" y1="626.2" x2="522.4" y2="641.6" stroke="rgb(56,44,50)"/><line x1="659.2" y1="203.3" x2="659.6" y2="194.4" stroke="rgb(96,45,50)"/><line x1="537.8" y1="228.0" x2="576.0" y2="238.1" stroke="rgb(139,47,51)"/><line x1="623.0" y1="198.2" x2="631.7" y2="203.3" stroke="rgb(102,46,51)"/><line x1="589.2" y1="193.4" x2="561.9" y2="193.8" stroke="rgb(82,45,50)"/><line x1="382.3" y1="407.0" x2="395.9" y2="417.9" stroke="rgb(100,46,51)"/><line x1="576.0" y1="238.1" x2="615.1" y2="245.0" stroke="rgb(140,48,52)"/><line x1="719.9" y1="532.2" x2="706.1" y2="569.2" stroke="rgb(140,48,52)"/><line x1="376.3" y1="394.3" x2="374.1" y2="409.3" stroke="rgb(60,44,50)"/><line x1="663.5" y1="352.9" x2="691.8" y2="368.4" stroke="rgb(140,48,52)"/><line x1="700.9" y1="345.9" x2="737.3" y2="363.3" stroke="rgb(140,48,52)"/><line x1="420.9" y1="260.0" x2="408.5" y2="275.8" stroke="rgb(64,44,50)"/><line x1="657.3" y1="484.5" x2="649.4" y2="541.0" stroke="rgb(140,48,52)"/><line x1="814.5" y1="565.7" x2="787.5" y2="594.6" stroke="rgb(82,45,50)"/><line x1="841.5" y1="423.6" x2="834.2" y2="452.2" stroke="rgb(125,47,51)"/><line x1="702.7" y1="210.7" x2="716.8" y2="221.8" stroke="rgb(118,46,51)"/><line x1="623.2" y1="311.6" x2="659.1" y2="331.6" stroke="rgb(140,48,52)"/><line x1="691.8" y1="368.4" x2="676.2" y2="392.4" stroke="rgb(140,48,52)"/><line x1="436.6" y1="258.1" x2="450.4" y2="270.8" stroke="rgb(109,46,51)"/><line x1="666.1" y1="598.6" x2="719.9" y2="590.7" stroke="rgb(125,47,51)"/><line x1="737.3" y1="363.3" x2="718.3" y2="393.2" stroke="rgb(140,48,52)"/><line x1="462.9" y1="550.4" x2="475.7" y2="579.3" stroke="rgb(126,47,51)"/><line x1="784.8" y1="468.8" x2="754.2" y2="496.4" stroke="rgb(140,48,52)"/><line x1="452.3" y1="398.7" x2="448.3" y2="418.4" stroke="rgb(140,48,52)"/><line x1="561.9" y1="193.8" x2="528.1" y2="193.7" stroke="rgb(72,44,50)"/><line x1="787.5" y1="594.6" x2="813.4" y2="577.5" stroke="rgb(67,44,50)"/><line x1="498.3" y1="474.1" x2="492.4" y2="497.4" stroke="rgb(140,48,52)"/><line x1="681.2" y1="285.4" x2="664.3" y2="308.0" stroke="rgb(140,48,52)"/><line x1="531.3" y1="648.2" x2="584.5" y2="661.4" stroke="rgb(56,44,50)"/><line x1="389.2" y1="317.3" x2="389.6" y2="333.6" stroke="rgb(67,44,50)"/><line x1="837.7" y1="277.8" x2="848.8" y2="297.2" stroke="rgb(61,44,50)"/><line x1="667.1" y1="256.8" x2="686.2" y2="268.4" stroke="rgb(140,48,52)"/><line x1="379.8" y1="355.0" x2="378.1" y2="367.4" stroke="rgb(56,44,50)"/><line x1="776.0" y1="556.3" x2="719.9" y2="590.7" stroke="rgb(132,47,51)"/><line x1="663.9" y1="189.8" x2="693.4" y2="190.8" stroke="rgb(64,44,50)"/><line x1="469.9" y1="213.5" x2="454.7" y2="225.6" stroke="rgb(56,44,50)"/><line x1="624.0" y1="190.6" x2="663.9" y2="189.8" stroke="rgb(67,44,50)"/><line x1="686.3" y1="460.5" x2="710.0" y2="483.9" stroke="rgb(140,48,52)"/><line x1="663.3" y1="240.5" x2="667.1" y2="256.8" stroke="rgb(140,48,52)"/><line x1="484.4" y1="359.7" x2="510.1" y2="388.2" stroke="rgb(140,48,52)"/><line x1="606.5" y1="601.3" x2="611.6" y2="622.0" stroke="rgb(118,46,51)"/><line x1="525.3" y1="364.7" x2="548.8" y2="393.4" stroke="rgb(140,48,52)"/><line x1="809.2" y1="240.5" x2="825.9" y2="268.1" stroke="rgb(74,44,50)"/><line x1="817.3" y1="280.2" x2="835.5" y2="296.4" stroke="rgb(101,46,51)"/><line x1="825.9" y1="268.1" x2="837.7" y2="277.8" stroke="rgb(74,44,50)"/><line x1="434.5" y1="339.5" x2="454.3" y2="351.3" stroke="rgb(140,48,52)"/><line x1="832.3" y1="379.3" x2="846.8" y2="398.6" stroke="rgb(123,47,51)"/><line x1="510.1" y1="388.2" x2="548.8" y2="393.4" stroke="rgb(140,48,52)"/><line x1="750.1" y1="386.3" x2="748.1" y2="406.2" stroke="rgb(140,48,52)"/><line x1="840.8" y1="467.5" x2="821.3" y2="510.7" stroke="rgb(119,47,51)"/><line x1="378.1" y1="367.4" x2="376.3" y2="394.3" stroke="rgb(64,44,50)"/><line x1="388.5" y1="434.1" x2="376.5" y2="438.4" stroke="rgb(83,45,50)"/><line x1="383.9" y1="351.7" x2="392.2" y2="368.0" stroke="rgb(88,45,50)"/><line x1="386.3" y1="387.0" x2="382.3" y2="407.0" stroke="rgb(91,45,50)"/><line x1="479.2" y1="426.5" x2="515.1" y2="433.7" stroke="rgb(140,48,52)"/><line x1="624.0" y1="190.6" x2="589.2" y2="193.4" stroke="rgb(76,44,50)"/><line x1="821.3" y1="510.7" x2="846.0" y2="521.9" stroke="rgb(96,45,50)"/><line x1="515.1" y1="433.7" x2="558.5" y2="437.2" stroke="rgb(140,48,52)"/><line x1="413.3" y1="428.6" x2="441.0" y2="442.3" stroke="rgb(140,48,52)"/><line x1="599.5" y1="189.3" x2="625.6" y2="189.2" stroke="rgb(59,44,50)"/><line x1="487.2" y1="606.6" x2="556.1" y2="635.9" stroke="rgb(91,45,50)"/><line x1="663.3" y1="240.5" x2="688.8" y2="235.6" stroke="rgb(140,48,52)"/><line x1="441.0" y1="442.3" x2="471.8" y2="446.1" stroke="rgb(140,48,52)"/><line x1="801.7" y1="267.5" x2="819.3" y2="309.7" stroke="rgb(118,46,51)"/><line x1="395.9" y1="417.9" x2="388.5" y2="434.1" stroke="rgb(106,46,51)"/><line x1="423.7" y1="273.7" x2="410.0" y2="288.6" stroke="rgb(91,45,50)"/><line x1="868.7" y1="397.2" x2="871.8" y2="408.3" stroke="rgb(63,44,50)"/><line x1="777.7" y1="330.9" x2="802.0" y2="344.2" stroke="rgb(140,48,52)"/><line x1="709.7" y1="199.5" x2="730.8" y2="205.5" stroke="rgb(91,45,50)"/><line x1="490.8" y1="244.7" x2="490.6" y2="268.4" stroke="rgb(136,47,51)"/><line x1="693.4" y1="190.8" x2="725.6" y2="196.7" stroke="rgb(67,44,50)"/><line x1="424.6" y1="540.0" x2="410.7" y2="546.6" stroke="rgb(79,45,50)"/><line x1="524.8" y1="260.2" x2="521.2" y2="278.7" stroke="rgb(140,48,52)"/><line x1="770.4" y1="357.7" x2="750.1" y2="386.3" stroke="rgb(140,48,52)"/><line x1="599.5" y1="189.3" x2="563.7" y2="189.7" stroke="rgb(60,44,50)"/><line x1="802.0" y1="344.2" x2="784.4" y2="378.1" stroke="rgb(140,48,52)"/><line x1="537.4" y1="413.0" x2="515.1" y2="433.7" stroke="rgb(140,48,52)"/><line x1="855.6" y1="436.1" x2="863.9" y2="449.8" stroke="rgb(92,45,50)"/><line x1="746.3" y1="624.8" x2="716.5" y2="645.0" stroke="rgb(70,44,50)"/><line x1="667.7" y1="660.3" x2="707.0" y2="651.3" stroke="rgb(56,44,50)"/><line x1="605.6" y1="505.5" x2="649.4" y2="541.0" stroke="rgb(140,48,52)"/><line x1="575.5" y1="212.9" x2="618.4" y2="220.0" stroke="rgb(127,47,51)"/><line x1="453.4" y1="241.5" x2="438.4" y2="240.5" stroke="rgb(84,45,50)"/><line x1="631.7" y1="203.3" x2="619.3" y2="211.1" stroke="rgb(114,46,51)"/><line x1="522.4" y1="641.6" x2="531.3" y2="648.2" stroke="rgb(57,44,50)"/><line x1="734.3" y1="233.8" x2="749.5" y2="245.3" stroke="rgb(130,47,51)"/><line x1="846.0" y1="521.9" x2="840.1" y2="538.7" stroke="rgb(58,44,50)"/><line x1="678.1" y1="640.0" x2="653.4" y2="654.6" stroke="rgb(80,45,50)"/><line x1="640.7" y1="463.5" x2="624.6" y2="487.4" stroke="rgb(140,48,52)"/><line x1="524.8" y1="260.2" x2="567.8" y2="268.7" stroke="rgb(140,48,52)"/><line x1="716.8" y1="221.8" x2="753.3" y2="219.4" stroke="rgb(112,46,51)"/><line x1="478.3" y1="285.6" x2="504.8" y2="294.4" stroke="rgb(140,48,52)"/><line x1="730.8" y1="205.5" x2="752.1" y2="206.9" stroke="rgb(85,45,50)"/><line x1="604.9" y1="377.0" x2="633.5" y2="398.3" stroke="rgb(140,48,52)"/><line x1="783.8" y1="577.1" x2="787.5" y2="594.6" stroke="rgb(93,45,50)"/><line x1="803.8" y1="393.1" x2="801.6" y2="417.9" stroke="rgb(140,48,52)"/><line x1="484.4" y1="359.7" x2="525.3" y2="364.7" stroke="rgb(140,48,52)"/><line x1="710.0" y1="483.9" x2="691.6" y2="506.9" stroke="rgb(140,48,52)"/><line x1="819.0" y1="361.7" x2="832.3" y2="379.3" stroke="rgb(134,47,51)"/><line x1="504.2" y1="626.8" x2="556.1" y2="635.9" stroke="rgb(83,45,50)"/><line x1="528.1" y1="193.7" x2="508.0" y2="197.8" stroke="rgb(61,44,50)"/><line x1="746.7" y1="476.5" x2="754.2" y2="496.4" stroke="rgb(140,48,52)"/><line x1="623.0" y1="198.2" x2="608.7" y2="202.5" stroke="rgb(101,46,51)"/><line x1="589.2" y1="193.4" x2="599.5" y2="189.3" stroke="rgb(72,44,50)"/><line x1="776.0" y1="556.3" x2="741.8" y2="612.2" stroke="rgb(114,46,51)"/><line x1="408.0" y1="379.5" x2="424.3" y2="387.7" stroke="rgb(132,47,51)"/><line x1="416.3" y1="405.4" x2="413.3" y2="428.6" stroke="rgb(133,47,51)"/><line x1="825.9" y1="268.1" x2="846.7" y2="309.1" stroke="rgb(83,45,50)"/><line x1="390.7" y1="488.9" x2="396.1" y2="517.5" stroke="rgb(72,44,50)"/><line x1="562.6" y1="200.5" x2="542.4" y2="209.8" stroke="rgb(105,46,51)"/><line x1="441.0" y1="442.3" x2="462.3" y2="467.4" stroke="rgb(140,48,52)"/><line x1="460.8" y1="302.2" x2="461.3" y2="330.4" stroke="rgb(140,48,52)"/><line x1="513.6" y1="459.2" x2="550.3" y2="459.2" stroke="rgb(140,48,52)"/><line x1="471.8" y1="446.1" x2="498.3" y2="474.1" stroke="rgb(140,48,52)"/><line x1="680.5" y1="207.4" x2="709.7" y2="199.5" stroke="rgb(101,46,51)"/><line x1="495.7" y1="318.0" x2="488.8" y2="336.2" stroke="rgb(140,48,52)"/><line x1="664.3" y1="308.0" x2="659.1" y2="331.6" stroke="rgb(140,48,52)"/><line x1="821.3" y1="338.5" x2="838.8" y2="350.3" stroke="rgb(124,47,51)"/><line x1="785.4" y1="523.5" x2="821.3" y2="510.7" stroke="rgb(133,47,51)"/><line x1="513.3" y1="561.2" x2="475.7" y2="579.3" stroke="rgb(134,47,51)"/><line x1="600.8" y1="274.2" x2="602.0" y2="291.4" stroke="rgb(140,48,52)"/><line x1="837.8" y1="323.8" x2="851.6" y2="335.2" stroke="rgb(100,46,51)"/><line x1="622.9" y1="420.3" x2="636.6" y2="444.3" stroke="rgb(140,48,52)"/><line x1="519.5" y1="238.6" x2="490.6" y2="268.4" stroke="rgb(140,48,52)"/><line x1="702.7" y1="210.7" x2="753.3" y2="219.4" stroke="rgb(107,46,51)"/><line x1="530.6" y1="483.1" x2="492.4" y2="497.4" stroke="rgb(140,48,52)"/><line x1="838.8" y1="350.3" x2="851.6" y2="335.2" stroke="rgb(104,46,51)"/><line x1="667.1" y1="256.8" x2="641.8" y2="274.3" stroke="rgb(140,48,52)"/><line x1="374.1" y1="409.3" x2="376.5" y2="438.4" stroke="rgb(60,44,50)"/><line x1="791.7" y1="226.3" x2="809.2" y2="240.5" stroke="rgb(68,44,50)"/><line x1="652.0" y1="216.8" x2="680.5" y2="207.4" stroke="rgb(120,47,51)"/><line x1="684.4" y1="437.1" x2="686.3" y2="460.5" stroke="rgb(140,48,52)"/><line x1="787.5" y1="594.6" x2="746.3" y2="624.8" stroke="rgb(78,45,50)"/><line x1="470.7" y1="219.4" x2="453.4" y2="241.5" stroke="rgb(89,45,50)"/><line x1="686.3" y1="460.5" x2="657.3" y2="484.5" stroke="rgb(140,48,52)"/><line x1="791.7" y1="226.3" x2="780.3" y2="215.7" stroke="rgb(59,44,50)"/><line x1="722.9" y1="455.6" x2="710.0" y2="483.9" stroke="rgb(140,48,52)"/><line x1="600.8" y1="274.2" x2="641.8" y2="274.3" stroke="rgb(140,48,52)"/><line x1="478.3" y1="285.6" x2="495.7" y2="318.0" stroke="rgb(140,48,52)"/><line x1="725.6" y1="196.7" x2="737.4" y2="197.4" stroke="rgb(63,44,50)"/><line x1="546.2" y1="303.4" x2="589.2" y2="308.2" stroke="rgb(140,48,52)"/><line x1="504.8" y1="294.4" x2="531.9" y2="321.4" stroke="rgb(140,48,52)"/><line x1="519.5" y1="238.6" x2="524.8" y2="260.2" stroke="rgb(140,48,52)"/><line x1="825.9" y1="268.1" x2="835.5" y2="296.4" stroke="rgb(88,45,50)"/><line x1="832.3" y1="379.3" x2="828.9" y2="405.8" stroke="rgb(132,47,51)"/><line x1="544.7" y1="616.2" x2="611.6" y2="622.0" stroke="rgb(109,46,51)"/><line x1="848.7" y1="370.8" x2="846.8" y2="398.6" stroke="rgb(112,46,51)"/><line x1="592.4" y1="652.8" x2="653.4" y2="654.6" stroke="rgb(75,44,50)"/><line x1="851.6" y1="335.2" x2="860.7" y2="356.8" stroke="rgb(87,45,50)"/><line x1="615.4" y1="642.3" x2="678.1" y2="640.0" stroke="rgb(89,45,50)"/><line x1="386.3" y1="387.0" x2="376.3" y2="394.3" stroke="rgb(80,45,50)"/><line x1="438.4" y1="240.5" x2="420.9" y2="260.0" stroke="rgb(70,44,50)"/><line x1="815.5" y1="459.4" x2="840.8" y2="467.5" stroke="rgb(130,47,51)"/><line x1="856.7" y1="322.7" x2="863.9" y2="342.9" stroke="rgb(61,44,50)"/><line x1="623.2" y1="193.9" x2="642.1" y2="198.2" stroke="rgb(90,45,50)"/><line x1="396.0" y1="393.5" x2="382.3" y2="407.0" stroke="rgb(100,46,51)"/><line x1="479.2" y1="426.5" x2="513.6" y2="459.2" stroke="rgb(140,48,52)"/><line x1="565.5" y1="222.0" x2="591.7" y2="228.1" stroke="rgb(135,47,51)"/><line x1="487.2" y1="606.6" x2="504.2" y2="626.8" stroke="rgb(84,45,50)"/><line x1="858.9" y1="485.1" x2="846.0" y2="521.9" stroke="rgb(73,44,50)"/><line x1="544.7" y1="616.2" x2="556.1" y2="635.9" stroke="rgb(98,46,51)"/><line x1="618.4" y1="220.0" x2="631.4" y2="231.5" stroke="rgb(138,47,51)"/><line x1="868.7" y1="397.2" x2="866.5" y2="424.2" stroke="rgb(77,45,50)"/><line x1="777.7" y1="330.9" x2="770.4" y2="357.7" stroke="rgb(140,48,52)"/><line x1="513.6" y1="459.2" x2="530.6" y2="483.1" stroke="rgb(140,48,52)"/><line x1="531.9" y1="321.4" x2="529.9" y2="342.9" stroke="rgb(140,48,52)"/><line x1="556.1" y1="635.9" x2="592.4" y2="652.8" stroke="rgb(82,45,50)"/><line x1="524.8" y1="260.2" x2="490.6" y2="268.4" stroke="rgb(140,48,52)"/><line x1="550.3" y1="459.2" x2="577.6" y2="484.7" stroke="rgb(140,48,52)"/><line x1="575.7" y1="329.0" x2="574.2" y2="351.1" stroke="rgb(140,48,52)"/><line x1="599.5" y1="189.3" x2="589.3" y2="188.9" stroke="rgb(56,44,50)"/><line x1="410.4" y1="324.8" x2="418.4" y2="358.7" stroke="rgb(121,47,51)"/><line x1="745.8" y1="295.8" x2="737.5" y2="316.4" stroke="rgb(140,48,52)"/><line x1="567.8" y1="268.7" x2="521.2" y2="278.7" stroke="rgb(140,48,52)"/><line x1="686.2" y1="268.4" x2="717.4" y2="278.0" stroke="rgb(140,48,52)"/><line x1="484.4" y1="359.7" x2="491.6" y2="405.1" stroke="rgb(140,48,52)"/><line x1="402.4" y1="286.1" x2="398.5" y2="295.8" stroke="rgb(56,44,50)"/><line x1="848.8" y1="297.2" x2="854.4" y2="310.2" stroke="rgb(56,44,50)"/><line x1="855.6" y1="436.1" x2="840.8" y2="467.5" stroke="rgb(110,46,51)"/><line x1="529.9" y1="342.9" x2="574.2" y2="351.1" stroke="rgb(140,48,52)"/><line x1="469.7" y1="381.1" x2="479.2" y2="426.5" stroke="rgb(140,48,52)"/><line x1="702.0" y1="416.7" x2="724.1" y2="437.0" stroke="rgb(140,48,52)"/><line x1="401.3" y1="344.9" x2="418.4" y2="358.7" stroke="rgb(119,47,51)"/><line x1="866.5" y1="424.2" x2="863.9" y2="449.8" stroke="rgb(82,45,50)"/><line x1="821.3" y1="338.5" x2="837.8" y2="323.8" stroke="rgb(120,47,51)"/><line x1="748.1" y1="406.2" x2="768.2" y2="428.1" stroke="rgb(140,48,52)"/><line x1="734.3" y1="233.8" x2="719.9" y2="257.7" stroke="rgb(140,48,52)"/><line x1="386.3" y1="387.0" x2="396.0" y2="393.5" stroke="rgb(103,46,51)"/><line x1="846.0" y1="521.9" x2="814.5" y2="565.7" stroke="rgb(78,45,50)"/><line x1="396.0" y1="393.5" x2="416.3" y2="405.4" stroke="rgb(123,47,51)"/><line x1="521.5" y1="218.9" x2="537.8" y2="228.0" stroke="rgb(124,47,51)"/><line x1="624.0" y1="190.6" x2="599.5" y2="189.3" stroke="rgb(65,44,50)"/><line x1="623.2" y1="193.9" x2="659.6" y2="194.4" stroke="rgb(85,45,50)"/><line x1="822.0" y1="253.7" x2="825.9" y2="268.1" stroke="rgb(72,44,50)"/><line x1="376.3" y1="394.3" x2="382.3" y2="407.0" stroke="rgb(77,45,50)"/><line x1="794.9" y1="442.8" x2="815.5" y2="459.4" stroke="rgb(140,48,52)"/><line x1="611.8" y1="353.5" x2="657.8" y2="373.4" stroke="rgb(140,48,52)"/><line x1="730.8" y1="205.5" x2="753.3" y2="219.4" stroke="rgb(97,45,50)"/><line x1="631.4" y1="231.5" x2="663.3" y2="240.5" stroke="rgb(140,48,52)"/><line x1="546.2" y1="303.4" x2="575.7" y2="329.0" stroke="rgb(140,48,52)"/><line x1="604.9" y1="377.0" x2="580.4" y2="395.4" stroke="rgb(140,48,52)"/><line x1="676.2" y1="392.4" x2="684.4" y2="437.1" stroke="rgb(140,48,52)"/><line x1="783.8" y1="577.1" x2="741.8" y2="612.2" stroke="rgb(102,46,51)"/><line x1="589.2" y1="308.2" x2="617.5" y2="332.9" stroke="rgb(140,48,52)"/><line x1="657.8" y1="373.4" x2="633.5" y2="398.3" stroke="rgb(140,48,52)"/><line x1="718.3" y1="393.2" x2="724.1" y2="437.0" stroke="rgb(140,48,52)"/><line x1="424.6" y1="540.0" x2="475.7" y2="579.3" stroke="rgb(112,46,51)"/><line x1="606.5" y1="601.3" x2="666.1" y2="598.6" stroke="rgb(123,47,51)"/><line x1="528.1" y1="193.7" x2="525.4" y2="193.4" stroke="rgb(56,44,50)"/><line x1="428.3" y1="454.8" x2="433.8" y2="481.1" stroke="rgb(140,48,52)"/><line x1="679.5" y1="619.6" x2="741.8" y2="612.2" stroke="rgb(102,46,51)"/><line x1="515.2" y1="203.4" x2="508.0" y2="197.8" stroke="rgb(74,44,50)"/><line x1="462.3" y1="467.4" x2="492.4" y2="497.4" stroke="rgb(140,48,52)"/><line x1="741.8" y1="612.2" x2="787.5" y2="594.6" stroke="rgb(88,45,50)"/><line x1="416.3" y1="405.4" x2="395.9" y2="417.9" stroke="rgb(123,47,51)"/><line x1="584.5" y1="255.7" x2="600.8" y2="274.2" stroke="rgb(140,48,52)"/><line x1="453.4" y1="241.5" x2="450.4" y2="270.8" stroke="rgb(109,46,51)"/><line x1="558.5" y1="437.2" x2="589.6" y2="461.2" stroke="rgb(140,48,52)"/><line x1="648.4" y1="570.0" x2="666.1" y2="598.6" stroke="rgb(129,47,51)"/><line x1="611.6" y1="622.0" x2="615.4" y2="642.3" stroke="rgb(100,46,51)"/><line x1="730.8" y1="205.5" x2="725.6" y2="196.7" stroke="rgb(82,45,50)"/><line x1="679.5" y1="619.6" x2="678.1" y2="640.0" stroke="rgb(97,45,50)"/><line x1="659.2" y1="203.3" x2="682.1" y2="194.7" stroke="rgb(96,45,50)"/><line x1="471.8" y1="446.1" x2="462.3" y2="467.4" stroke="rgb(140,48,52)"/><line x1="680.5" y1="207.4" x2="702.7" y2="210.7" stroke="rgb(112,46,51)"/><line x1="495.7" y1="318.0" x2="461.3" y2="330.4" stroke="rgb(140,48,52)"/><line x1="483.9" y1="206.3" x2="470.7" y2="219.4" stroke="rgb(68,44,50)"/><line x1="682.1" y1="194.7" x2="709.7" y2="199.5" stroke="rgb(87,45,50)"/><line x1="659.1" y1="331.6" x2="700.9" y2="345.9" stroke="rgb(140,48,52)"/><line x1="390.7" y1="488.9" x2="423.6" y2="509.9" stroke="rgb(102,46,51)"/><line x1="801.7" y1="267.5" x2="817.3" y2="280.2" stroke="rgb(110,46,51)"/><line x1="600.8" y1="274.2" x2="556.1" y2="287.4" stroke="rgb(140,48,52)"/><line x1="837.8" y1="323.8" x2="838.8" y2="350.3" stroke="rgb(112,46,51)"/><line x1="454.3" y1="351.3" x2="469.7" y2="381.1" stroke="rgb(140,48,52)"/><line x1="846.7" y1="309.1" x2="851.6" y2="335.2" stroke="rgb(88,45,50)"/><line x1="749.5" y1="245.3" x2="780.3" y2="255.7" stroke="rgb(127,47,51)"/><line x1="401.6" y1="313.7" x2="410.4" y2="324.8" stroke="rgb(102,46,51)"/><line x1="871.8" y1="408.3" x2="871.7" y2="429.6" stroke="rgb(56,44,50)"/><line x1="653.4" y1="654.6" x2="667.7" y2="660.3" stroke="rgb(68,44,50)"/><line x1="684.4" y1="437.1" x2="640.7" y2="463.5" stroke="rgb(140,48,52)"/><line x1="623.0" y1="198.2" x2="642.1" y2="198.2" stroke="rgb(97,45,50)"/><line x1="589.2" y1="193.4" x2="562.6" y2="200.5" stroke="rgb(91,45,50)"/><line x1="416.3" y1="405.4" x2="448.3" y2="418.4" stroke="rgb(140,48,52)"/><line x1="470.7" y1="219.4" x2="454.7" y2="225.6" stroke="rgb(75,44,50)"/><line x1="585.5" y1="202.3" x2="575.5" y2="212.9" stroke="rgb(113,46,51)"/><line x1="608.7" y1="202.5" x2="585.5" y2="202.3" stroke="rgb(105,46,51)"/><line x1="719.9" y1="532.2" x2="776.0" y2="556.3" stroke="rgb(140,48,52)"/><line x1="448.3" y1="418.4" x2="479.2" y2="426.5" stroke="rgb(140,48,52)"/><line x1="424.6" y1="540.0" x2="396.1" y2="517.5" stroke="rgb(82,45,50)"/><line x1="477.6" y1="233.4" x2="453.4" y2="241.5" stroke="rgb(103,46,51)"/><line x1="667.1" y1="256.8" x2="681.2" y2="285.4" stroke="rgb(140,48,52)"/><line x1="429.1" y1="246.4" x2="408.5" y2="275.8" stroke="rgb(56,44,50)"/><line x1="785.4" y1="523.5" x2="814.4" y2="541.3" stroke="rgb(128,47,51)"/><line x1="395.9" y1="417.9" x2="413.3" y2="428.6" stroke="rgb(122,47,51)"/><line x1="420.9" y1="260.0" x2="410.0" y2="288.6" stroke="rgb(78,45,50)"/><line x1="841.5" y1="423.6" x2="855.6" y2="436.1" stroke="rgb(113,46,51)"/><line x1="504.8" y1="294.4" x2="495.7" y2="318.0" stroke="rgb(140,48,52)"/><line x1="702.7" y1="210.7" x2="730.8" y2="205.5" stroke="rgb(103,46,51)"/><line x1="706.2" y1="191.2" x2="737.4" y2="197.4" stroke="rgb(56,44,50)"/><line x1="549.7" y1="507.1" x2="605.6" y2="505.5" stroke="rgb(140,48,52)"/><line x1="477.6" y1="233.4" x2="465.8" y2="254.8" stroke="rgb(115,46,51)"/><line x1="737.3" y1="363.3" x2="750.1" y2="386.3" stroke="rgb(140,48,52)"/><line x1="390.7" y1="488.9" x2="424.6" y2="540.0" stroke="rgb(92,45,50)"/><line x1="438.4" y1="240.5" x2="429.1" y2="246.4" stroke="rgb(60,44,50)"/><line x1="815.5" y1="459.4" x2="796.8" y2="489.0" stroke="rgb(140,48,52)"/><line x1="718.3" y1="393.2" x2="750.1" y2="386.3" stroke="rgb(140,48,52)"/><line x1="783.8" y1="577.1" x2="814.5" y2="565.7" stroke="rgb(96,45,50)"/><line x1="856.7" y1="322.7" x2="860.7" y2="356.8" stroke="rgb(75,44,50)"/><line x1="436.6" y1="258.1" x2="420.9" y2="260.0" stroke="rgb(83,45,50)"/><line x1="479.2" y1="426.5" x2="471.8" y2="446.1" stroke="rgb(140,48,52)"/><line x1="834.2" y1="452.2" x2="840.8" y2="467.5" stroke="rgb(122,47,51)"/><line x1="465.8" y1="254.8" x2="453.4" y2="241.5" stroke="rgb(109,46,51)"/><line x1="561.9" y1="193.8" x2="562.6" y2="200.5" stroke="rgb(90,45,50)"/><line x1="515.1" y1="433.7" x2="513.6" y2="459.2" stroke="rgb(140,48,52)"/><line x1="684.4" y1="437.1" x2="724.1" y2="437.0" stroke="rgb(140,48,52)"/><line x1="562.6" y1="200.5" x2="575.5" y2="212.9" stroke="rgb(110,46,51)"/><line x1="454.7" y1="225.6" x2="448.4" y2="228.0" stroke="rgb(57,44,50)"/><line x1="725.6" y1="196.7" x2="706.2" y2="191.2" stroke="rgb(62,44,50)"/><line x1="724.1" y1="437.0" x2="768.2" y2="428.1" stroke="rgb(140,48,52)"/><line x1="776.0" y1="556.3" x2="783.8" y2="577.1" stroke="rgb(121,47,51)"/><line x1="607.7" y1="440.0" x2="624.6" y2="487.4" stroke="rgb(140,48,52)"/><line x1="663.9" y1="189.8" x2="660.9" y2="188.8" stroke="rgb(57,44,50)"/><line x1="470.7" y1="219.4" x2="477.6" y2="233.4" stroke="rgb(95,45,50)"/><line x1="640.7" y1="463.5" x2="686.3" y2="460.5" stroke="rgb(140,48,52)"/><line x1="624.0" y1="190.6" x2="625.6" y2="189.2" stroke="rgb(64,44,50)"/><line x1="550.3" y1="459.2" x2="530.6" y2="483.1" stroke="rgb(140,48,52)"/><line x1="575.7" y1="329.0" x2="529.9" y2="342.9" stroke="rgb(140,48,52)"/><line x1="477.6" y1="233.4" x2="490.8" y2="244.7" stroke="rgb(119,47,51)"/><line x1="374.1" y1="409.3" x2="376.9" y2="422.0" stroke="rgb(63,44,50)"/><line x1="863.9" y1="449.8" x2="871.7" y2="429.6" stroke="rgb(66,44,50)"/><line x1="663.3" y1="240.5" x2="701.3" y2="245.0" stroke="rgb(140,48,52)"/><line x1="625.6" y1="189.2" x2="660.9" y2="188.8" stroke="rgb(56,44,50)"/><line x1="686.2" y1="268.4" x2="681.2" y2="285.4" stroke="rgb(140,48,52)"/><line x1="737.5" y1="316.4" x2="777.7" y2="330.9" stroke="rgb(140,48,52)"/><line x1="719.9" y1="257.7" x2="717.4" y2="278.0" stroke="rgb(140,48,52)"/><line x1="848.8" y1="297.2" x2="856.7" y2="322.7" stroke="rgb(62,44,50)"/><line x1="748.1" y1="406.2" x2="724.1" y2="437.0" stroke="rgb(140,48,52)"/><line x1="454.3" y1="351.3" x2="484.4" y2="359.7" stroke="rgb(140,48,52)"/><line x1="510.1" y1="388.2" x2="491.6" y2="405.1" stroke="rgb(140,48,52)"/><line x1="388.5" y1="434.1" x2="399.1" y2="466.2" stroke="rgb(104,46,51)"/><line x1="663.9" y1="189.8" x2="625.6" y2="189.2" stroke="rgb(61,44,50)"/><line x1="402.4" y1="446.9" x2="433.8" y2="481.1" stroke="rgb(129,47,51)"/><line x1="667.1" y1="256.8" x2="701.3" y2="245.0" stroke="rgb(140,48,52)"/><line x1="846.8" y1="398.6" x2="855.6" y2="436.1" stroke="rgb(109,46,51)"/><line x1="686.2" y1="268.4" x2="719.9" y2="257.7" stroke="rgb(140,48,52)"/><line x1="423.7" y1="273.7" x2="417.4" y2="303.8" stroke="rgb(102,46,51)"/><line x1="719.9" y1="257.7" x2="749.5" y2="245.3" stroke="rgb(140,48,52)"/><line x1="417.4" y1="303.8" x2="401.6" y2="313.7" stroke="rgb(101,46,51)"/><line x1="623.2" y1="311.6" x2="664.3" y2="308.0" stroke="rgb(140,48,52)"/><line x1="434.9" y1="291.8" x2="432.9" y2="316.8" stroke="rgb(126,47,51)"/><line x1="716.5" y1="645.0" x2="667.7" y2="660.3" stroke="rgb(63,44,50)"/><line x1="589.2" y1="308.2" x2="575.7" y2="329.0" stroke="rgb(140,48,52)"/><line x1="693.4" y1="190.8" x2="706.2" y2="191.2" stroke="rgb(58,44,50)"/><line x1="429.1" y1="246.4" x2="420.9" y2="260.0" stroke="rgb(59,44,50)"/><line x1="389.2" y1="317.3" x2="378.1" y2="367.4" stroke="rgb(58,44,50)"/><line x1="802.0" y1="344.2" x2="819.0" y2="361.7" stroke="rgb(140,48,52)"/><line x1="417.4" y1="303.8" x2="432.9" y2="316.8" stroke="rgb(120,47,51)"/><line x1="454.3" y1="517.0" x2="513.3" y2="561.2" stroke="rgb(140,48,52)"/><line x1="462.3" y1="467.4" x2="433.8" y2="481.1" stroke="rgb(140,48,52)"/><line x1="691.8" y1="368.4" x2="737.3" y2="363.3" stroke="rgb(140,48,52)"/><line x1="389.6" y1="333.6" x2="392.2" y2="368.0" stroke="rgb(90,45,50)"/><line x1="453.4" y1="241.5" x2="436.6" y2="258.1" stroke="rgb(97,45,50)"/><line x1="521.2" y1="278.7" x2="504.8" y2="294.4" stroke="rgb(140,48,52)"/><line x1="558.5" y1="437.2" x2="550.3" y2="459.2" stroke="rgb(140,48,52)"/><line x1="579.8" y1="419.9" x2="622.9" y2="420.3" stroke="rgb(140,48,52)"/><line x1="633.7" y1="260.9" x2="600.8" y2="274.2" stroke="rgb(140,48,52)"/><line x1="631.7" y1="203.3" x2="659.2" y2="203.3" stroke="rgb(107,46,51)"/><line x1="522.4" y1="641.6" x2="584.5" y2="661.4" stroke="rgb(63,44,50)"/><line x1="734.3" y1="233.8" x2="769.9" y2="233.2" stroke="rgb(118,46,51)"/><line x1="478.3" y1="285.6" x2="450.4" y2="270.8" stroke="rgb(134,47,51)"/><line x1="607.7" y1="440.0" x2="589.6" y2="461.2" stroke="rgb(140,48,52)"/><line x1="622.9" y1="420.3" x2="657.7" y2="419.9" stroke="rgb(140,48,52)"/><line x1="679.5" y1="619.6" x2="615.4" y2="642.3" stroke="rgb(99,46,51)"/><line x1="768.2" y1="428.1" x2="801.6" y2="417.9" stroke="rgb(140,48,52)"/><line x1="642.1" y1="198.2" x2="659.6" y2="194.4" stroke="rgb(91,45,50)"/><line x1="753.3" y1="219.4" x2="775.2" y2="218.7" stroke="rgb(91,45,50)"/><line x1="741.8" y1="612.2" x2="678.1" y2="640.0" stroke="rgb(91,45,50)"/><line x1="801.6" y1="417.9" x2="828.9" y2="405.8" stroke="rgb(140,48,52)"/><line x1="686.3" y1="460.5" x2="722.9" y2="455.6" stroke="rgb(140,48,52)"/><line x1="640.7" y1="463.5" x2="657.3" y2="484.5" stroke="rgb(140,48,52)"/><line x1="659.1" y1="331.6" x2="663.5" y2="352.9" stroke="rgb(140,48,52)"/><line x1="623.2" y1="193.9" x2="589.2" y2="193.4" stroke="rgb(83,45,50)"/><line x1="722.9" y1="455.6" x2="758.0" y2="454.3" stroke="rgb(140,48,52)"/><line x1="376.9" y1="422.0" x2="388.5" y2="434.1" stroke="rgb(86,45,50)"/><line x1="388.5" y1="434.1" x2="402.4" y2="446.9" stroke="rgb(109,46,51)"/><line x1="749.5" y1="245.3" x2="752.4" y2="268.2" stroke="rgb(139,47,51)"/><line x1="769.9" y1="233.2" x2="780.3" y2="255.7" stroke="rgb(115,46,51)"/><line x1="462.9" y1="550.4" x2="513.3" y2="561.2" stroke="rgb(140,48,52)"/><line x1="803.8" y1="393.1" x2="828.9" y2="405.8" stroke="rgb(140,48,52)"/><line x1="460.8" y1="302.2" x2="434.5" y2="339.5" stroke="rgb(140,48,52)"/><line x1="515.2" y1="203.4" x2="498.7" y2="220.7" stroke="rgb(98,46,51)"/><line x1="580.4" y1="395.4" x2="579.8" y2="419.9" stroke="rgb(140,48,52)"/><line x1="585.5" y1="202.3" x2="562.6" y2="200.5" stroke="rgb(102,46,51)"/><line x1="416.3" y1="405.4" x2="441.0" y2="442.3" stroke="rgb(140,48,52)"/><line x1="538.8" y1="198.5" x2="542.4" y2="209.8" stroke="rgb(100,46,51)"/><line x1="846.8" y1="398.6" x2="841.5" y2="423.6" stroke="rgb(119,47,51)"/><line x1="785.4" y1="523.5" x2="776.0" y2="556.3" stroke="rgb(140,48,52)"/><line x1="448.3" y1="418.4" x2="471.8" y2="446.1" stroke="rgb(140,48,52)"/><line x1="542.4" y1="209.8" x2="565.5" y2="222.0" stroke="rgb(121,47,51)"/><line x1="734.3" y1="233.8" x2="753.3" y2="219.4" stroke="rgb(115,46,51)"/><line x1="447.1" y1="589.3" x2="469.6" y2="612.9" stroke="rgb(62,44,50)"/><line x1="867.5" y1="373.1" x2="871.8" y2="408.3" stroke="rgb(60,44,50)"/><line x1="753.3" y1="219.4" x2="752.1" y2="206.9" stroke="rgb(90,45,50)"/><line x1="749.5" y1="245.3" x2="769.9" y2="233.2" stroke="rgb(120,47,51)"/><line x1="469.6" y1="612.9" x2="522.4" y2="641.6" stroke="rgb(61,44,50)"/><line x1="860.8" y1="410.7" x2="855.6" y2="436.1" stroke="rgb(99,46,51)"/><line x1="461.3" y1="330.4" x2="434.5" y2="339.5" stroke="rgb(140,48,52)"/><line x1="664.3" y1="308.0" x2="703.8" y2="324.8" stroke="rgb(140,48,52)"/><line x1="538.8" y1="198.5" x2="528.1" y2="193.7" stroke="rgb(75,44,50)"/><line x1="600.8" y1="274.2" x2="638.4" y2="290.7" stroke="rgb(140,48,52)"/><line x1="423.7" y1="273.7" x2="434.9" y2="291.8" stroke="rgb(108,46,51)"/><line x1="716.2" y1="300.6" x2="703.8" y2="324.8" stroke="rgb(140,48,52)"/><line x1="846.0" y1="521.9" x2="856.8" y2="499.8" stroke="rgb(56,44,50)"/><line x1="641.8" y1="274.3" x2="681.2" y2="285.4" stroke="rgb(140,48,52)"/><line x1="652.0" y1="216.8" x2="663.3" y2="240.5" stroke="rgb(139,47,51)"/><line x1="461.3" y1="330.4" x2="488.8" y2="336.2" stroke="rgb(140,48,52)"/><line x1="530.6" y1="483.1" x2="549.7" y2="507.1" stroke="rgb(140,48,52)"/><line x1="770.4" y1="357.7" x2="802.0" y2="344.2" stroke="rgb(140,48,52)"/><line x1="584.5" y1="661.4" x2="667.7" y2="660.3" stroke="rgb(61,44,50)"/><line x1="470.7" y1="219.4" x2="438.4" y2="240.5" stroke="rgb(76,44,50)"/><line x1="577.6" y1="484.7" x2="605.6" y2="505.5" stroke="rgb(140,48,52)"/><line x1="418.4" y1="358.7" x2="424.3" y2="387.7" stroke="rgb(135,47,51)"/><line x1="684.4" y1="437.1" x2="722.9" y2="455.6" stroke="rgb(140,48,52)"/><line x1="787.5" y1="594.6" x2="773.7" y2="614.2" stroke="rgb(70,44,50)"/><line x1="701.3" y1="245.0" x2="686.2" y2="268.4" stroke="rgb(140,48,52)"/><line x1="814.4" y1="541.3" x2="783.8" y2="577.1" stroke="rgb(111,46,51)"/><line x1="722.9" y1="455.6" x2="746.7" y2="476.5" stroke="rgb(140,48,52)"/><line x1="737.5" y1="316.4" x2="744.5" y2="339.3" stroke="rgb(140,48,52)"/><line x1="758.0" y1="454.3" x2="784.8" y2="468.8" stroke="rgb(140,48,52)"/><line x1="771.8" y1="311.0" x2="777.7" y2="330.9" stroke="rgb(140,48,52)"/><line x1="737.4" y1="197.4" x2="758.9" y2="204.7" stroke="rgb(56,44,50)"/><line x1="492.4" y1="497.4" x2="454.3" y2="517.0" stroke="rgb(140,48,52)"/><line x1="659.1" y1="331.6" x2="703.8" y2="324.8" stroke="rgb(140,48,52)"/><line x1="744.5" y1="339.3" x2="777.7" y2="330.9" stroke="rgb(140,48,52)"/><line x1="848.7" y1="370.8" x2="860.6" y2="382.4" stroke="rgb(100,46,51)"/><line x1="548.8" y1="393.4" x2="580.4" y2="395.4" stroke="rgb(140,48,52)"/><line x1="402.4" y1="446.9" x2="399.1" y2="466.2" stroke="rgb(113,46,51)"/><line x1="392.2" y1="368.0" x2="408.0" y2="379.5" stroke="rgb(112,46,51)"/><line x1="676.2" y1="392.4" x2="702.0" y2="416.7" stroke="rgb(140,48,52)"/><line x1="396.0" y1="393.5" x2="395.9" y2="417.9" stroke="rgb(112,46,51)"/><line x1="537.8" y1="228.0" x2="548.6" y2="249.7" stroke="rgb(140,48,52)"/><line x1="860.7" y1="356.8" x2="863.9" y2="342.9" stroke="rgb(69,44,50)"/><line x1="513.3" y1="561.2" x2="541.5" y2="595.9" stroke="rgb(132,47,51)"/><line x1="867.5" y1="373.1" x2="868.7" y2="397.2" stroke="rgb(70,44,50)"/><line x1="471.8" y1="446.1" x2="513.6" y2="459.2" stroke="rgb(140,48,52)"/><line x1="434.9" y1="291.8" x2="417.4" y2="303.8" stroke="rgb(115,46,51)"/><line x1="529.9" y1="342.9" x2="525.3" y2="364.7" stroke="rgb(140,48,52)"/><line x1="575.7" y1="329.0" x2="611.8" y2="353.5" stroke="rgb(140,48,52)"/><line x1="565.5" y1="222.0" x2="537.8" y2="228.0" stroke="rgb(131,47,51)"/><line x1="754.2" y1="496.4" x2="796.8" y2="489.0" stroke="rgb(140,48,52)"/><line x1="660.9" y1="188.8" x2="706.2" y2="191.2" stroke="rgb(56,44,50)"/><line x1="745.8" y1="295.8" x2="771.8" y2="311.0" stroke="rgb(140,48,52)"/><line x1="567.8" y1="268.7" x2="556.1" y2="287.4" stroke="rgb(140,48,52)"/><line x1="379.9" y1="470.3" x2="390.7" y2="488.9" stroke="rgb(63,44,50)"/><line x1="779.1" y1="282.0" x2="797.3" y2="299.2" stroke="rgb(137,47,51)"/><line x1="454.3" y1="517.0" x2="462.9" y2="550.4" stroke="rgb(138,47,51)"/><line x1="526.9" y1="532.2" x2="513.3" y2="561.2" stroke="rgb(140,48,52)"/><line x1="389.6" y1="333.6" x2="383.9" y2="351.7" stroke="rgb(78,45,50)"/><line x1="866.5" y1="424.2" x2="871.7" y2="429.6" stroke="rgb(65,44,50)"/><line x1="401.3" y1="344.9" x2="392.2" y2="368.0" stroke="rgb(104,46,51)"/><line x1="618.4" y1="220.0" x2="652.0" y2="216.8" stroke="rgb(130,47,51)"/><line x1="642.1" y1="198.2" x2="659.2" y2="203.3" stroke="rgb(102,46,51)"/><line x1="592.4" y1="652.8" x2="584.5" y2="661.4" stroke="rgb(69,44,50)"/><line x1="753.3" y1="219.4" x2="769.9" y2="233.2" stroke="rgb(105,46,51)"/><line x1="768.2" y1="428.1" x2="794.9" y2="442.8" stroke="rgb(140,48,52)"/><line x1="483.9" y1="206.3" x2="454.7" y2="225.6" stroke="rgb(62,44,50)"/><line x1="752.1" y1="206.9" x2="775.2" y2="218.7" stroke="rgb(79,45,50)"/><line x1="623.2" y1="193.9" x2="624.0" y2="190.6" stroke="rgb(77,45,50)"/><line x1="603.8" y1="196.7" x2="589.2" y2="193.4" stroke="rgb(88,45,50)"/><line x1="567.8" y1="268.7" x2="600.8" y2="274.2" stroke="rgb(140,48,52)"/><line x1="504.8" y1="294.4" x2="546.2" y2="303.4" stroke="rgb(140,48,52)"/><line x1="826.0" y1="430.9" x2="834.2" y2="452.2" stroke="rgb(132,47,51)"/><line x1="817.3" y1="280.2" x2="819.3" y2="309.7" stroke="rgb(115,46,51)"/><line x1="657.8" y1="373.4" x2="676.2" y2="392.4" stroke="rgb(140,48,52)"/><line x1="737.5" y1="316.4" x2="771.8" y2="311.0" stroke="rgb(140,48,52)"/><line x1="525.3" y1="364.7" x2="568.3" y2="371.5" stroke="rgb(140,48,52)"/><line x1="804.1" y1="322.5" x2="819.3" y2="309.7" stroke="rgb(131,47,51)"/><line x1="515.2" y1="203.4" x2="492.6" y2="208.8" stroke="rgb(85,45,50)"/><line x1="633.5" y1="398.3" x2="676.2" y2="392.4" stroke="rgb(140,48,52)"/><line x1="424.3" y1="387.7" x2="452.3" y2="398.7" stroke="rgb(140,48,52)"/><line x1="448.3" y1="418.4" x2="441.0" y2="442.3" stroke="rgb(140,48,52)"/><line x1="607.7" y1="440.0" x2="636.6" y2="444.3" stroke="rgb(140,48,52)"/><line x1="636.6" y1="444.3" x2="684.4" y2="437.1" stroke="rgb(140,48,52)"/><line x1="706.1" y1="569.2" x2="719.9" y2="590.7" stroke="rgb(131,47,51)"/><line x1="550.3" y1="459.2" x2="589.6" y2="461.2" stroke="rgb(140,48,52)"/><line x1="682.1" y1="194.7" x2="693.4" y2="190.8" stroke="rgb(74,44,50)"/><line x1="840.8" y1="467.5" x2="863.9" y2="449.8" stroke="rgb(99,46,51)"/><line x1="641.8" y1="274.3" x2="638.4" y2="290.7" stroke="rgb(140,48,52)"/><line x1="846.7" y1="309.1" x2="856.7" y2="322.7" stroke="rgb(76,44,50)"/><line x1="423.6" y1="509.9" x2="454.3" y2="517.0" stroke="rgb(132,47,51)"/><line x1="806.9" y1="253.6" x2="825.9" y2="268.1" stroke="rgb(88,45,50)"/><line x1="577.6" y1="484.7" x2="549.7" y2="507.1" stroke="rgb(140,48,52)"/><line x1="418.4" y1="358.7" x2="408.0" y2="379.5" stroke="rgb(127,47,51)"/><line x1="436.4" y1="367.1" x2="424.3" y2="387.7" stroke="rgb(140,48,52)"/><line x1="680.5" y1="207.4" x2="682.1" y2="194.7" stroke="rgb(98,46,51)"/><line x1="724.1" y1="437.0" x2="722.9" y2="455.6" stroke="rgb(140,48,52)"/><line x1="813.4" y1="577.5" x2="773.7" y2="614.2" stroke="rgb(56,44,50)"/><line x1="846.8" y1="398.6" x2="860.6" y2="382.4" stroke="rgb(104,46,51)"/><line x1="432.9" y1="316.8" x2="418.4" y2="358.7" stroke="rgb(131,47,51)"/><line x1="475.7" y1="579.3" x2="544.7" y2="616.2" stroke="rgb(112,46,51)"/><line x1="682.1" y1="194.7" x2="663.9" y2="189.8" stroke="rgb(74,44,50)"/><line x1="758.9" y1="204.7" x2="791.7" y2="226.3" stroke="rgb(61,44,50)"/><line x1="794.9" y1="442.8" x2="826.0" y2="430.9" stroke="rgb(140,48,52)"/><line x1="633.7" y1="260.9" x2="667.1" y2="256.8" stroke="rgb(140,48,52)"/><line x1="758.0" y1="454.3" x2="746.7" y2="476.5" stroke="rgb(140,48,52)"/><line x1="408.5" y1="275.8" x2="402.4" y2="286.1" stroke="rgb(56,44,50)"/><line x1="462.3" y1="467.4" x2="498.3" y2="474.1" stroke="rgb(140,48,52)"/><line x1="589.2" y1="308.2" x2="623.2" y2="311.6" stroke="rgb(140,48,52)"/><line x1="584.1" y1="568.3" x2="648.4" y2="570.0" stroke="rgb(136,47,51)"/><line x1="648.4" y1="570.0" x2="706.1" y2="569.2" stroke="rgb(135,47,51)"/><line x1="408.5" y1="275.8" x2="410.0" y2="288.6" stroke="rgb(73,44,50)"/><line x1="410.0" y1="288.6" x2="417.4" y2="303.8" stroke="rgb(98,46,51)"/><line x1="604.9" y1="377.0" x2="657.8" y2="373.4" stroke="rgb(140,48,52)"/><line x1="676.2" y1="392.4" x2="657.7" y2="419.9" stroke="rgb(140,48,52)"/><line x1="678.1" y1="640.0" x2="746.3" y2="624.8" stroke="rgb(82,45,50)"/><line x1="537.8" y1="228.0" x2="519.5" y2="238.6" stroke="rgb(134,47,51)"/><line x1="436.6" y1="258.1" x2="423.7" y2="273.7" stroke="rgb(96,45,50)"/><line x1="465.8" y1="254.8" x2="478.3" y2="285.6" stroke="rgb(134,47,51)"/><line x1="657.8" y1="373.4" x2="691.8" y2="368.4" stroke="rgb(140,48,52)"/><line x1="718.3" y1="393.2" x2="702.0" y2="416.7" stroke="rgb(140,48,52)"/><line x1="746.3" y1="624.8" x2="773.7" y2="614.2" stroke="rgb(69,44,50)"/><line x1="796.8" y1="489.0" x2="785.4" y2="523.5" stroke="rgb(140,48,52)"/><line x1="576.0" y1="238.1" x2="548.6" y2="249.7" stroke="rgb(140,48,52)"/><line x1="450.4" y1="270.8" x2="434.9" y2="291.8" stroke="rgb(121,47,51)"/><line x1="389.2" y1="317.3" x2="383.9" y2="351.7" stroke="rgb(65,44,50)"/><line x1="515.1" y1="433.7" x2="550.3" y2="459.2" stroke="rgb(140,48,52)"/><line x1="750.1" y1="386.3" x2="784.4" y2="378.1" stroke="rgb(140,48,52)"/><line x1="454.7" y1="225.6" x2="438.4" y2="240.5" stroke="rgb(69,44,50)"/><line x1="537.4" y1="413.0" x2="579.8" y2="419.9" stroke="rgb(140,48,52)"/><line x1="465.8" y1="254.8" x2="490.6" y2="268.4" stroke="rgb(133,47,51)"/><line x1="529.9" y1="342.9" x2="484.4" y2="359.7" stroke="rgb(140,48,52)"/><line x1="608.7" y1="202.5" x2="575.5" y2="212.9" stroke="rgb(114,46,51)"/><line x1="801.7" y1="267.5" x2="806.9" y2="253.6" stroke="rgb(104,46,51)"/><line x1="625.6" y1="189.2" x2="630.4" y2="189.0" stroke="rgb(56,44,50)"/><line x1="617.5" y1="332.9" x2="611.8" y2="353.5" stroke="rgb(140,48,52)"/><line x1="460.8" y1="302.2" x2="495.7" y2="318.0" stroke="rgb(140,48,52)"/><line x1="779.1" y1="282.0" x2="771.8" y2="311.0" stroke="rgb(140,48,52)"/><line x1="719.9" y1="257.7" x2="752.4" y2="268.2" stroke="rgb(140,48,52)"/><line x1="495.7" y1="318.0" x2="531.9" y2="321.4" stroke="rgb(140,48,52)"/><line x1="574.2" y1="351.1" x2="611.8" y2="353.5" stroke="rgb(140,48,52)"/><line x1="657.3" y1="484.5" x2="691.6" y2="506.9" stroke="rgb(140,48,52)"/><line x1="510.1" y1="388.2" x2="537.4" y2="413.0" stroke="rgb(140,48,52)"/><line x1="846.7" y1="309.1" x2="848.8" y2="297.2" stroke="rgb(70,44,50)"/><line x1="717.4" y1="278.0" x2="716.2" y2="300.6" stroke="rgb(140,48,52)"/><line x1="768.2" y1="428.1" x2="758.0" y2="454.3" stroke="rgb(140,48,52)"/><line x1="774.0" y1="402.5" x2="803.8" y2="393.1" stroke="rgb(140,48,52)"/><line x1="801.6" y1="417.9" x2="794.9" y2="442.8" stroke="rgb(140,48,52)"/><line x1="867.5" y1="373.1" x2="866.3" y2="355.8" stroke="rgb(56,44,50)"/><line x1="701.3" y1="245.0" x2="734.3" y2="233.8" stroke="rgb(138,47,51)"/><line x1="619.3" y1="211.1" x2="575.5" y2="212.9" stroke="rgb(121,47,51)"/><line x1="417.4" y1="303.8" x2="410.4" y2="324.8" stroke="rgb(110,46,51)"/><line x1="379.9" y1="470.3" x2="396.1" y2="517.5" stroke="rgb(56,44,50)"/><line x1="860.8" y1="410.7" x2="868.7" y2="397.2" stroke="rgb(83,45,50)"/><line x1="753.3" y1="219.4" x2="789.9" y2="239.4" stroke="rgb(100,46,51)"/><line x1="498.3" y1="474.1" x2="530.6" y2="483.1" stroke="rgb(140,48,52)"/><line x1="826.0" y1="430.9" x2="815.5" y2="459.4" stroke="rgb(140,48,52)"/><line x1="716.5" y1="645.0" x2="707.0" y2="651.3" stroke="rgb(57,44,50)"/><line x1="530.6" y1="483.1" x2="577.6" y2="484.7" stroke="rgb(140,48,52)"/><line x1="776.0" y1="556.3" x2="814.4" y2="541.3" stroke="rgb(122,47,51)"/><line x1="383.9" y1="351.7" x2="386.3" y2="387.0" stroke="rgb(85,45,50)"/><line x1="410.7" y1="546.6" x2="437.1" y2="568.4" stroke="rgb(73,44,50)"/><line x1="521.2" y1="278.7" x2="546.2" y2="303.4" stroke="rgb(140,48,52)"/><line x1="784.4" y1="378.1" x2="774.0" y2="402.5" stroke="rgb(140,48,52)"/><line x1="633.7" y1="260.9" x2="641.8" y2="274.3" stroke="rgb(140,48,52)"/><line x1="863.9" y1="449.8" x2="858.9" y2="485.1" stroke="rgb(78,45,50)"/><line x1="607.7" y1="440.0" x2="640.7" y2="463.5" stroke="rgb(140,48,52)"/><line x1="680.2" y1="222.7" x2="702.7" y2="210.7" stroke="rgb(122,47,51)"/><line x1="702.7" y1="210.7" x2="709.7" y2="199.5" stroke="rgb(101,46,51)"/><line x1="706.1" y1="569.2" x2="666.1" y2="598.6" stroke="rgb(129,47,51)"/><line x1="741.8" y1="612.2" x2="746.3" y2="624.8" stroke="rgb(86,45,50)"/><line x1="615.1" y1="245.0" x2="600.8" y2="274.2" stroke="rgb(140,48,52)"/><line x1="822.0" y1="253.7" x2="832.5" y2="266.7" stroke="rgb(56,44,50)"/><line x1="521.2" y1="278.7" x2="556.1" y2="287.4" stroke="rgb(140,48,52)"/><line x1="784.8" y1="468.8" x2="815.5" y2="459.4" stroke="rgb(140,48,52)"/><line x1="556.1" y1="287.4" x2="602.0" y2="291.4" stroke="rgb(140,48,52)"/><line x1="809.2" y1="240.5" x2="792.9" y2="224.9" stroke="rgb(56,44,50)"/><line x1="703.8" y1="324.8" x2="700.9" y2="345.9" stroke="rgb(140,48,52)"/><line x1="649.4" y1="541.0" x2="719.9" y2="532.2" stroke="rgb(140,48,52)"/><line x1="399.1" y1="466.2" x2="390.7" y2="488.9" stroke="rgb(96,45,50)"/><line x1="531.9" y1="321.4" x2="575.7" y2="329.0" stroke="rgb(140,48,52)"/><line x1="806.9" y1="253.6" x2="817.3" y2="280.2" stroke="rgb(101,46,51)"/><line x1="769.9" y1="233.2" x2="789.9" y2="239.4" stroke="rgb(103,46,51)"/><line x1="433.8" y1="481.1" x2="423.6" y2="509.9" stroke="rgb(131,47,51)"/><line x1="575.7" y1="329.0" x2="617.5" y2="332.9" stroke="rgb(140,48,52)"/><line x1="604.9" y1="377.0" x2="622.9" y2="420.3" stroke="rgb(140,48,52)"/><line x1="775.2" y1="218.7" x2="791.7" y2="226.3" stroke="rgb(74,44,50)"/><line x1="663.5" y1="352.9" x2="700.9" y2="345.9" stroke="rgb(140,48,52)"/><line x1="580.4" y1="395.4" x2="622.9" y2="420.3" stroke="rgb(140,48,52)"/><line x1="475.7" y1="579.3" x2="487.2" y2="606.6" stroke="rgb(103,46,51)"/><line x1="780.3" y1="255.7" x2="779.1" y2="282.0" stroke="rgb(130,47,51)"/><line x1="846.8" y1="398.6" x2="860.8" y2="410.7" stroke="rgb(105,46,51)"/><line x1="832.3" y1="379.3" x2="848.7" y2="370.8" stroke="rgb(119,47,51)"/><line x1="447.1" y1="589.3" x2="504.2" y2="626.8" stroke="rgb(74,44,50)"/><line x1="848.7" y1="370.8" x2="860.7" y2="356.8" stroke="rgb(96,45,50)"/><line x1="860.8" y1="410.7" x2="866.5" y2="424.2" stroke="rgb(88,45,50)"/><line x1="461.3" y1="330.4" x2="454.3" y2="351.3" stroke="rgb(140,48,52)"/><line x1="615.1" y1="245.0" x2="584.5" y2="255.7" stroke="rgb(140,48,52)"/><line x1="538.8" y1="198.5" x2="515.2" y2="203.4" stroke="rgb(88,45,50)"/><line x1="716.2" y1="300.6" x2="737.5" y2="316.4" stroke="rgb(140,48,52)"/><line x1="819.0" y1="361.7" x2="828.9" y2="405.8" stroke="rgb(137,47,51)"/><line x1="423.6" y1="509.9" x2="424.6" y2="540.0" stroke="rgb(112,46,51)"/><line x1="408.0" y1="379.5" x2="416.3" y2="405.4" stroke="rgb(129,47,51)"/><line x1="450.4" y1="270.8" x2="423.7" y2="273.7" stroke="rgb(108,46,51)"/><line x1="389.2" y1="317.3" x2="384.1" y2="334.6" stroke="rgb(56,44,50)"/><line x1="838.8" y1="350.3" x2="848.7" y2="370.8" stroke="rgb(113,46,51)"/><line x1="701.3" y1="245.0" x2="719.9" y2="257.7" stroke="rgb(140,48,52)"/><line x1="709.7" y1="199.5" x2="693.4" y2="190.8" stroke="rgb(77,45,50)"/><line x1="814.4" y1="541.3" x2="814.5" y2="565.7" stroke="rgb(97,45,50)"/><line x1="693.4" y1="190.8" x2="660.9" y2="188.8" stroke="rgb(57,44,50)"/><line x1="744.5" y1="339.3" x2="737.3" y2="363.3" stroke="rgb(140,48,52)"/><line x1="771.8" y1="311.0" x2="804.1" y2="322.5" stroke="rgb(140,48,52)"/><line x1="638.4" y1="290.7" x2="681.2" y2="285.4" stroke="rgb(140,48,52)"/><line x1="492.4" y1="497.4" x2="526.9" y2="532.2" stroke="rgb(140,48,52)"/><line x1="855.6" y1="436.1" x2="866.5" y2="424.2" stroke="rgb(92,45,50)"/><line x1="797.3" y1="299.2" x2="819.3" y2="309.7" stroke="rgb(129,47,51)"/><line x1="398.5" y1="295.8" x2="389.2" y2="317.3" stroke="rgb(58,44,50)"/><line x1="424.6" y1="540.0" x2="462.9" y2="550.4" stroke="rgb(118,46,51)"/><line x1="821.3" y1="510.7" x2="858.9" y2="485.1" stroke="rgb(98,46,51)"/><line x1="465.8" y1="254.8" x2="450.4" y2="270.8" stroke="rgb(121,47,51)"/><line x1="469.6" y1="612.9" x2="504.2" y2="626.8" stroke="rgb(67,44,50)"/><line x1="657.7" y1="419.9" x2="684.4" y2="437.1" stroke="rgb(140,48,52)"/><line x1="548.8" y1="393.4" x2="537.4" y2="413.0" stroke="rgb(140,48,52)"/><line x1="608.7" y1="202.5" x2="631.7" y2="203.3" stroke="rgb(107,46,51)"/><line x1="867.5" y1="373.1" x2="870.0" y2="381.9" stroke="rgb(56,44,50)"/><line x1="528.1" y1="193.7" x2="515.2" y2="203.4" stroke="rgb(75,44,50)"/><line x1="432.9" y1="316.8" x2="410.4" y2="324.8" stroke="rgb(121,47,51)"/><line x1="529.9" y1="342.9" x2="568.3" y2="371.5" stroke="rgb(140,48,52)"/><line x1="574.2" y1="351.1" x2="604.9" y2="377.0" stroke="rgb(140,48,52)"/><line x1="565.5" y1="222.0" x2="576.0" y2="238.1" stroke="rgb(139,47,51)"/><line x1="666.1" y1="598.6" x2="611.6" y2="622.0" stroke="rgb(118,46,51)"/><line x1="420.9" y1="260.0" x2="423.7" y2="273.7" stroke="rgb(82,45,50)"/><line x1="568.3" y1="371.5" x2="548.8" y2="393.4" stroke="rgb(140,48,52)"/><line x1="719.9" y1="590.7" x2="679.5" y2="619.6" stroke="rgb(118,46,51)"/><line x1="383.9" y1="351.7" x2="378.1" y2="367.4" stroke="rgb(68,44,50)"/><line x1="526.9" y1="532.2" x2="584.1" y2="568.3" stroke="rgb(140,48,52)"/><line x1="737.3" y1="363.3" x2="770.4" y2="357.7" stroke="rgb(140,48,52)"/><line x1="392.2" y1="368.0" x2="386.3" y2="387.0" stroke="rgb(97,45,50)"/><line x1="835.5" y1="296.4" x2="851.6" y2="335.2" stroke="rgb(93,45,50)"/><line x1="401.3" y1="344.9" x2="408.0" y2="379.5" stroke="rgb(116,46,51)"/><line x1="819.0" y1="361.7" x2="838.8" y2="350.3" stroke="rgb(128,47,51)"/><line x1="686.3" y1="460.5" x2="691.6" y2="506.9" stroke="rgb(140,48,52)"/><line x1="556.1" y1="287.4" x2="546.2" y2="303.4" stroke="rgb(140,48,52)"/><line x1="602.0" y1="291.4" x2="589.2" y2="308.2" stroke="rgb(140,48,52)"/><line x1="636.6" y1="444.3" x2="640.7" y2="463.5" stroke="rgb(140,48,52)"/><line x1="623.0" y1="198.2" x2="623.2" y2="193.9" stroke="rgb(90,45,50)"/><line x1="410.7" y1="546.6" x2="447.1" y2="589.3" stroke="rgb(64,44,50)"/><line x1="822.0" y1="253.7" x2="837.7" y2="277.8" stroke="rgb(63,44,50)"/><line x1="828.9" y1="405.8" x2="846.8" y2="398.6" stroke="rgb(125,47,51)"/><line x1="681.2" y1="285.4" x2="703.8" y2="324.8" stroke="rgb(140,48,52)"/><line x1="603.8" y1="196.7" x2="585.5" y2="202.3" stroke="rgb(99,46,51)"/><line x1="758.0" y1="454.3" x2="794.9" y2="442.8" stroke="rgb(140,48,52)"/><line x1="402.4" y1="446.9" x2="428.3" y2="454.8" stroke="rgb(130,47,51)"/><line x1="804.1" y1="322.5" x2="802.0" y2="344.2" stroke="rgb(140,48,52)"/><line x1="775.2" y1="218.7" x2="789.9" y2="239.4" stroke="rgb(88,45,50)"/><line x1="434.5" y1="339.5" x2="436.4" y2="367.1" stroke="rgb(140,48,52)"/><line x1="513.3" y1="561.2" x2="584.1" y2="568.3" stroke="rgb(137,47,51)"/><line x1="556.1" y1="635.9" x2="615.4" y2="642.3" stroke="rgb(90,45,50)"/><line x1="633.5" y1="398.3" x2="622.9" y2="420.3" stroke="rgb(140,48,52)"/><line x1="691.6" y1="506.9" x2="649.4" y2="541.0" stroke="rgb(140,48,52)"/><line x1="521.5" y1="218.9" x2="498.7" y2="220.7" stroke="rgb(112,46,51)"/><line x1="649.4" y1="541.0" x2="706.1" y2="569.2" stroke="rgb(140,48,52)"/><line x1="752.1" y1="206.9" x2="737.4" y2="197.4" stroke="rgb(67,44,50)"/><line x1="624.6" y1="487.4" x2="657.3" y2="484.5" stroke="rgb(140,48,52)"/><line x1="488.8" y1="336.2" x2="454.3" y2="351.3" stroke="rgb(140,48,52)"/><line x1="624.6" y1="487.4" x2="649.4" y2="541.0" stroke="rgb(140,48,52)"/><line x1="542.4" y1="209.8" x2="515.2" y2="203.4" stroke="rgb(99,46,51)"/><line x1="779.1" y1="282.0" x2="801.7" y2="267.5" stroke="rgb(126,47,51)"/><line x1="434.9" y1="291.8" x2="460.8" y2="302.2" stroke="rgb(133,47,51)"/><line x1="498.7" y1="220.7" x2="470.7" y2="219.4" stroke="rgb(94,45,50)"/><line x1="680.2" y1="222.7" x2="688.8" y2="235.6" stroke="rgb(137,47,51)"/><line x1="454.3" y1="351.3" x2="452.3" y2="398.7" stroke="rgb(140,48,52)"/><line x1="438.4" y1="240.5" x2="436.6" y2="258.1" stroke="rgb(83,45,50)"/><line x1="758.9" y1="204.7" x2="775.2" y2="218.7" stroke="rgb(66,44,50)"/><line x1="488.8" y1="336.2" x2="529.9" y2="342.9" stroke="rgb(140,48,52)"/><line x1="408.0" y1="379.5" x2="396.0" y2="393.5" stroke="rgb(117,46,51)"/><line x1="802.0" y1="344.2" x2="821.3" y2="338.5" stroke="rgb(139,47,51)"/><line x1="424.3" y1="387.7" x2="416.3" y2="405.4" stroke="rgb(137,47,51)"/><line x1="838.8" y1="350.3" x2="832.3" y2="379.3" stroke="rgb(123,47,51)"/><line x1="436.4" y1="367.1" x2="452.3" y2="398.7" stroke="rgb(140,48,52)"/><line x1="851.6" y1="335.2" x2="856.7" y2="322.7" stroke="rgb(80,45,50)"/><line x1="809.2" y1="240.5" x2="814.0" y2="244.4" stroke="rgb(56,44,50)"/><line x1="469.7" y1="381.1" x2="491.6" y2="405.1" stroke="rgb(140,48,52)"/><line x1="638.4" y1="290.7" x2="623.2" y2="311.6" stroke="rgb(140,48,52)"/><line x1="724.1" y1="437.0" x2="758.0" y2="454.3" stroke="rgb(140,48,52)"/><line x1="856.7" y1="322.7" x2="854.4" y2="310.2" stroke="rgb(57,44,50)"/><line x1="590.6" y1="540.3" x2="526.9" y2="532.2" stroke="rgb(140,48,52)"/><line x1="758.9" y1="204.7" x2="780.3" y2="215.7" stroke="rgb(56,44,50)"/><line x1="835.5" y1="296.4" x2="846.7" y2="309.1" stroke="rgb(89,45,50)"/><line x1="748.1" y1="406.2" x2="774.0" y2="402.5" stroke="rgb(140,48,52)"/><line x1="541.5" y1="595.9" x2="475.7" y2="579.3" stroke="rgb(122,47,51)"/><line x1="667.7" y1="660.3" x2="592.9" y2="664.1" stroke="rgb(56,44,50)"/><line x1="575.5" y1="212.9" x2="542.4" y2="209.8" stroke="rgb(116,46,51)"/><line x1="860.6" y1="382.4" x2="867.5" y2="373.1" stroke="rgb(80,45,50)"/><line x1="563.7" y1="189.7" x2="528.1" y2="193.7" stroke="rgb(61,44,50)"/><line x1="408.5" y1="275.8" x2="398.5" y2="295.8" stroke="rgb(61,44,50)"/><line x1="659.6" y1="194.4" x2="663.9" y2="189.8" stroke="rgb(75,44,50)"/><line x1="826.0" y1="430.9" x2="841.5" y2="423.6" stroke="rgb(130,47,51)"/><line x1="797.3" y1="299.2" x2="804.1" y2="322.5" stroke="rgb(138,47,51)"/><line x1="410.0" y1="288.6" x2="401.6" y2="313.7" stroke="rgb(89,45,50)"/><line x1="541.5" y1="595.9" x2="544.7" y2="616.2" stroke="rgb(117,46,51)"/><line x1="657.7" y1="419.9" x2="636.6" y2="444.3" stroke="rgb(140,48,52)"/><line x1="841.5" y1="423.6" x2="840.8" y2="467.5" stroke="rgb(120,47,51)"/><line x1="706.1" y1="569.2" x2="776.0" y2="556.3" stroke="rgb(138,47,51)"/><line x1="384.1" y1="334.6" x2="378.1" y2="367.4" stroke="rgb(56,44,50)"/><line x1="718.3" y1="393.2" x2="748.1" y2="406.2" stroke="rgb(140,48,52)"/><line x1="796.8" y1="489.0" x2="821.3" y2="510.7" stroke="rgb(136,47,51)"/><line x1="450.4" y1="270.8" x2="460.8" y2="302.2" stroke="rgb(133,47,51)"/><line x1="780.3" y1="215.7" x2="809.2" y2="240.5" stroke="rgb(57,44,50)"/><line x1="490.6" y1="268.4" x2="504.8" y2="294.4" stroke="rgb(140,48,52)"/><line x1="591.7" y1="228.1" x2="631.4" y2="231.5" stroke="rgb(140,48,52)"/><line x1="574.2" y1="351.1" x2="568.3" y2="371.5" stroke="rgb(140,48,52)"/><line x1="382.3" y1="407.0" x2="388.5" y2="434.1" stroke="rgb(94,45,50)"/><line x1="710.0" y1="483.9" x2="746.7" y2="476.5" stroke="rgb(140,48,52)"/><line x1="625.6" y1="189.2" x2="589.3" y2="188.9" stroke="rgb(56,44,50)"/><line x1="617.5" y1="332.9" x2="663.5" y2="352.9" stroke="rgb(140,48,52)"/><line x1="490.6" y1="268.4" x2="521.2" y2="278.7" stroke="rgb(140,48,52)"/><line x1="746.7" y1="476.5" x2="784.8" y2="468.8" stroke="rgb(140,48,52)"/><line x1="806.9" y1="253.6" x2="809.2" y2="240.5" stroke="rgb(80,45,50)"/><line x1="548.6" y1="249.7" x2="524.8" y2="260.2" stroke="rgb(140,48,52)"/><line x1="590.6" y1="540.3" x2="649.4" y2="541.0" stroke="rgb(140,48,52)"/><line x1="383.9" y1="351.7" x2="376.3" y2="394.3" stroke="rgb(71,44,50)"/><line x1="376.5" y1="438.4" x2="379.9" y2="470.3" stroke="rgb(56,44,50)"/><line x1="584.5" y1="255.7" x2="548.6" y2="249.7" stroke="rgb(140,48,52)"/><line x1="491.6" y1="405.1" x2="515.1" y2="433.7" stroke="rgb(140,48,52)"/><line x1="611.8" y1="353.5" x2="663.5" y2="352.9" stroke="rgb(140,48,52)"/><line x1="717.4" y1="278.0" x2="745.8" y2="295.8" stroke="rgb(140,48,52)"/><line x1="854.4" y1="310.2" x2="863.9" y2="342.9" stroke="rgb(56,44,50)"/><line x1="752.4" y1="268.2" x2="779.1" y2="282.0" stroke="rgb(140,48,52)"/><line x1="801.6" y1="417.9" x2="826.0" y2="430.9" stroke="rgb(140,48,52)"/><line x1="608.7" y1="202.5" x2="619.3" y2="211.1" stroke="rgb(113,46,51)"/><line x1="396.1" y1="517.5" x2="410.7" y2="546.6" stroke="rgb(59,44,50)"/><line x1="437.1" y1="568.4" x2="447.1" y2="589.3" stroke="rgb(79,45,50)"/><line x1="549.7" y1="507.1" x2="590.6" y2="540.3" stroke="rgb(140,48,52)"/><line x1="828.9" y1="405.8" x2="841.5" y2="423.6" stroke="rgb(129,47,51)"/><line x1="589.3" y1="188.9" x2="563.7" y2="189.7" stroke="rgb(56,44,50)"/><line x1="508.0" y1="197.8" x2="492.6" y2="208.8" stroke="rgb(71,44,50)"/><line x1="619.3" y1="211.1" x2="618.4" y2="220.0" stroke="rgb(126,47,51)"/><line x1="492.6" y1="208.8" x2="498.7" y2="220.7" stroke="rgb(95,45,50)"/><line x1="717.4" y1="278.0" x2="752.4" y2="268.2" stroke="rgb(140,48,52)"/><line x1="615.4" y1="642.3" x2="592.4" y2="652.8" stroke="rgb(83,45,50)"/><line x1="659.2" y1="203.3" x2="652.0" y2="216.8" stroke="rgb(117,46,51)"/><line x1="752.4" y1="268.2" x2="780.3" y2="255.7" stroke="rgb(134,47,51)"/><line x1="589.6" y1="461.2" x2="577.6" y2="484.7" stroke="rgb(140,48,52)"/><line x1="434.5" y1="339.5" x2="418.4" y2="358.7" stroke="rgb(135,47,51)"/><line x1="688.8" y1="235.6" x2="734.3" y2="233.8" stroke="rgb(136,47,51)"/><line x1="771.8" y1="311.0" x2="797.3" y2="299.2" stroke="rgb(140,48,52)"/><line x1="802.0" y1="344.2" x2="803.8" y2="393.1" stroke="rgb(140,48,52)"/><line x1="774.0" y1="402.5" x2="768.2" y2="428.1" stroke="rgb(140,48,52)"/><line x1="784.4" y1="378.1" x2="803.8" y2="393.1" stroke="rgb(140,48,52)"/><line x1="863.9" y1="449.8" x2="865.3" y2="474.4" stroke="rgb(65,44,50)"/><line x1="649.4" y1="541.0" x2="648.4" y2="570.0" stroke="rgb(140,48,52)"/><line x1="378.1" y1="367.4" x2="374.1" y2="409.3" stroke="rgb(57,44,50)"/><line x1="817.3" y1="280.2" x2="837.8" y2="323.8" stroke="rgb(108,46,51)"/><line x1="561.9" y1="193.8" x2="538.8" y2="198.5" stroke="rgb(85,45,50)"/><line x1="663.5" y1="352.9" x2="657.8" y2="373.4" stroke="rgb(140,48,52)"/><line x1="413.3" y1="428.6" x2="428.3" y2="454.8" stroke="rgb(137,47,51)"/><line x1="703.8" y1="324.8" x2="744.5" y2="339.3" stroke="rgb(140,48,52)"/><line x1="700.9" y1="345.9" x2="691.8" y2="368.4" stroke="rgb(140,48,52)"/><line x1="680.2" y1="222.7" x2="663.3" y2="240.5" stroke="rgb(140,48,52)"/><line x1="399.1" y1="466.2" x2="423.6" y2="509.9" stroke="rgb(115,46,51)"/><line x1="815.5" y1="459.4" x2="834.2" y2="452.2" stroke="rgb(135,47,51)"/><line x1="752.1" y1="206.9" x2="758.9" y2="204.7" stroke="rgb(65,44,50)"/><line x1="433.8" y1="481.1" x2="454.3" y2="517.0" stroke="rgb(140,48,52)"/><line x1="623.2" y1="311.6" x2="617.5" y2="332.9" stroke="rgb(140,48,52)"/><line x1="719.9" y1="532.2" x2="785.4" y2="523.5" stroke="rgb(140,48,52)"/><line x1="809.2" y1="240.5" x2="822.0" y2="253.7" stroke="rgb(64,44,50)"/><line x1="579.8" y1="419.9" x2="607.7" y2="440.0" stroke="rgb(140,48,52)"/><line x1="469.7" y1="381.1" x2="452.3" y2="398.7" stroke="rgb(140,48,52)"/><line x1="835.5" y1="296.4" x2="837.8" y2="323.8" stroke="rgb(101,46,51)"/><line x1="462.3" y1="467.4" x2="454.3" y2="517.0" stroke="rgb(140,48,52)"/><line x1="623.2" y1="193.9" x2="603.8" y2="196.7" stroke="rgb(88,45,50)"/><line x1="780.3" y1="255.7" x2="801.7" y2="267.5" stroke="rgb(118,46,51)"/><line x1="752.4" y1="268.2" x2="771.8" y2="311.0" stroke="rgb(140,48,52)"/><line x1="837.7" y1="277.8" x2="846.7" y2="309.1" stroke="rgb(75,44,50)"/><line x1="773.7" y1="614.2" x2="749.3" y2="631.6" stroke="rgb(56,44,50)"/><line x1="603.8" y1="196.7" x2="608.7" y2="202.5" stroke="rgb(99,46,51)"/><line x1="789.9" y1="239.4" x2="806.9" y2="253.6" stroke="rgb(96,45,50)"/><line x1="563.7" y1="189.7" x2="556.5" y2="189.8" stroke="rgb(56,44,50)"/><line x1="860.6" y1="382.4" x2="868.7" y2="397.2" stroke="rgb(82,45,50)"/><line x1="556.5" y1="189.8" x2="528.1" y2="193.7" stroke="rgb(56,44,50)"/><line x1="659.6" y1="194.4" x2="682.1" y2="194.7" stroke="rgb(85,45,50)"/><line x1="410.0" y1="288.6" x2="398.5" y2="295.8" stroke="rgb(74,44,50)"/><line x1="519.5" y1="238.6" x2="548.6" y2="249.7" stroke="rgb(140,48,52)"/><line x1="615.1" y1="245.0" x2="633.7" y2="260.9" stroke="rgb(140,48,52)"/><line x1="780.3" y1="255.7" x2="789.9" y2="239.4" stroke="rgb(110,46,51)"/><line x1="716.5" y1="645.0" x2="653.4" y2="654.6" stroke="rgb(70,44,50)"/><line x1="789.9" y1="239.4" x2="791.7" y2="226.3" stroke="rgb(83,45,50)"/><line x1="542.4" y1="209.8" x2="537.8" y2="228.0" stroke="rgb(121,47,51)"/><line x1="663.3" y1="240.5" x2="633.7" y2="260.9" stroke="rgb(140,48,52)"/><line x1="484.4" y1="359.7" x2="469.7" y2="381.1" stroke="rgb(140,48,52)"/><line x1="606.5" y1="601.3" x2="544.7" y2="616.2" stroke="rgb(119,47,51)"/><line x1="525.3" y1="364.7" x2="510.1" y2="388.2" stroke="rgb(140,48,52)"/><line x1="498.7" y1="220.7" x2="490.8" y2="244.7" stroke="rgb(118,46,51)"/><line x1="817.3" y1="280.2" x2="825.9" y2="268.1" stroke="rgb(94,45,50)"/><line x1="423.6" y1="509.9" x2="462.9" y2="550.4" stroke="rgb(127,47,51)"/><line x1="487.2" y1="606.6" x2="544.7" y2="616.2" stroke="rgb(100,46,51)"/><line x1="490.6" y1="268.4" x2="478.3" y2="285.6" stroke="rgb(140,48,52)"/><line x1="522.4" y1="641.6" x2="592.4" y2="652.8" stroke="rgb(71,44,50)"/><line x1="659.6" y1="194.4" x2="624.0" y2="190.6" stroke="rgb(78,45,50)"/><line x1="378.1" y1="367.4" x2="376.2" y2="382.0" stroke="rgb(56,44,50)"/><line x1="382.3" y1="407.0" x2="376.9" y2="422.0" stroke="rgb(80,45,50)"/><line x1="821.3" y1="510.7" x2="814.4" y2="541.3" stroke="rgb(116,46,51)"/><line x1="575.5" y1="212.9" x2="591.7" y2="228.1" stroke="rgb(130,47,51)"/><line x1="744.5" y1="339.3" x2="770.4" y2="357.7" stroke="rgb(140,48,52)"/><line x1="710.0" y1="483.9" x2="719.9" y2="532.2" stroke="rgb(140,48,52)"/><line x1="398.5" y1="295.8" x2="389.6" y2="333.6" stroke="rgb(71,44,50)"/><line x1="490.8" y1="244.7" x2="465.8" y2="254.8" stroke="rgb(125,47,51)"/><line x1="822.0" y1="253.7" x2="814.0" y2="244.4" stroke="rgb(56,44,50)"/><line x1="401.6" y1="313.7" x2="401.3" y2="344.9" stroke="rgb(100,46,51)"/><line x1="491.6" y1="405.1" x2="479.2" y2="426.5" stroke="rgb(140,48,52)"/><line x1="548.8" y1="393.4" x2="579.8" y2="419.9" stroke="rgb(140,48,52)"/><line x1="441.0" y1="442.3" x2="433.8" y2="481.1" stroke="rgb(140,48,52)"/><line x1="389.6" y1="333.6" x2="401.3" y2="344.9" stroke="rgb(94,45,50)"/><line x1="631.4" y1="231.5" x2="633.7" y2="260.9" stroke="rgb(140,48,52)"/><line x1="752.4" y1="268.2" x2="745.8" y2="295.8" stroke="rgb(140,48,52)"/><line x1="828.9" y1="405.8" x2="826.0" y2="430.9" stroke="rgb(136,47,51)"/><line x1="832.5" y1="266.7" x2="848.8" y2="297.2" stroke="rgb(56,44,50)"/><line x1="605.6" y1="505.5" x2="590.6" y2="540.3" stroke="rgb(140,48,52)"/><line x1="631.7" y1="203.3" x2="642.1" y2="198.2" stroke="rgb(102,46,51)"/><line x1="432.9" y1="316.8" x2="434.5" y2="339.5" stroke="rgb(135,47,51)"/><line x1="590.6" y1="540.3" x2="648.4" y2="570.0" stroke="rgb(140,48,52)"/><line x1="688.8" y1="235.6" x2="701.3" y2="245.0" stroke="rgb(140,48,52)"/><line x1="577.6" y1="484.7" x2="624.6" y2="487.4" stroke="rgb(140,48,52)"/><line x1="666.1" y1="598.6" x2="679.5" y2="619.6" stroke="rgb(119,47,51)"/><line x1="716.2" y1="300.6" x2="745.8" y2="295.8" stroke="rgb(140,48,52)"/><line x1="508.0" y1="197.8" x2="483.9" y2="206.3" stroke="rgb(57,44,50)"/><line x1="716.8" y1="221.8" x2="734.3" y2="233.8" stroke="rgb(126,47,51)"/><line x1="568.3" y1="371.5" x2="580.4" y2="395.4" stroke="rgb(140,48,52)"/><line x1="719.9" y1="590.7" x2="741.8" y2="612.2" stroke="rgb(111,46,51)"/><line x1="399.1" y1="466.2" x2="433.8" y2="481.1" stroke="rgb(125,47,51)"/><line x1="492.6" y1="208.8" x2="470.7" y2="219.4" stroke="rgb(82,45,50)"/><line x1="591.7" y1="228.1" x2="615.1" y2="245.0" stroke="rgb(140,48,52)"/><line x1="814.4" y1="541.3" x2="846.0" y2="521.9" stroke="rgb(91,45,50)"/><line x1="392.2" y1="368.0" x2="396.0" y2="393.5" stroke="rgb(106,46,51)"/><line x1="589.2" y1="193.4" x2="563.7" y2="189.7" stroke="rgb(71,44,50)"/><line x1="437.1" y1="568.4" x2="475.7" y2="579.3" stroke="rgb(103,46,51)"/><line x1="541.5" y1="595.9" x2="606.5" y2="601.3" stroke="rgb(123,47,51)"/><line x1="860.7" y1="356.8" x2="867.5" y2="373.1" stroke="rgb(75,44,50)"/><line x1="556.1" y1="287.4" x2="589.2" y2="308.2" stroke="rgb(140,48,52)"/><line x1="611.6" y1="622.0" x2="679.5" y2="619.6" stroke="rgb(110,46,51)"/><line x1="819.0" y1="361.7" x2="803.8" y2="393.1" stroke="rgb(140,48,52)"/><line x1="602.0" y1="291.4" x2="623.2" y2="311.6" stroke="rgb(140,48,52)"/><line x1="623.0" y1="198.2" x2="603.8" y2="196.7" stroke="rgb(95,45,50)"/><line x1="388.5" y1="434.1" x2="390.7" y2="488.9" stroke="rgb(91,45,50)"/><line x1="589.2" y1="193.4" x2="585.5" y2="202.3" stroke="rgb(94,45,50)"/><line x1="688.8" y1="235.6" x2="716.8" y2="221.8" stroke="rgb(133,47,51)"/><line x1="584.5" y1="661.4" x2="592.9" y2="664.1" stroke="rgb(56,44,50)"/><line x1="584.1" y1="568.3" x2="606.5" y2="601.3" stroke="rgb(129,47,51)"/><line x1="413.3" y1="428.6" x2="402.4" y2="446.9" stroke="rgb(125,47,51)"/><line x1="562.6" y1="200.5" x2="538.8" y2="198.5" stroke="rgb(93,45,50)"/><line x1="602.0" y1="291.4" x2="638.4" y2="290.7" stroke="rgb(140,48,52)"/><line x1="441.0" y1="442.3" x2="428.3" y2="454.8" stroke="rgb(140,48,52)"/><line x1="652.0" y1="216.8" x2="680.2" y2="222.7" stroke="rgb(130,47,51)"/><line x1="804.1" y1="322.5" x2="821.3" y2="338.5" stroke="rgb(135,47,51)"/><line x1="460.8" y1="302.2" x2="432.9" y2="316.8" stroke="rgb(138,47,51)"/><line x1="819.3" y1="309.7" x2="837.8" y2="323.8" stroke="rgb(115,46,51)"/><line x1="617.5" y1="332.9" x2="659.1" y2="331.6" stroke="rgb(140,48,52)"/><line x1="821.3" y1="338.5" x2="819.0" y2="361.7" stroke="rgb(135,47,51)"/><line x1="561.9" y1="193.8" x2="563.7" y2="189.7" stroke="rgb(70,44,50)"/><line x1="700.9" y1="345.9" x2="744.5" y2="339.3" stroke="rgb(140,48,52)"/><line x1="579.8" y1="419.9" x2="558.5" y2="437.2" stroke="rgb(140,48,52)"/><line x1="579.8" y1="419.9" x2="589.6" y2="461.2" stroke="rgb(140,48,52)"/><line x1="622.9" y1="420.3" x2="607.7" y2="440.0" stroke="rgb(140,48,52)"/><line x1="398.5" y1="295.8" x2="401.6" y2="313.7" stroke="rgb(77,45,50)"/><line x1="633.5" y1="398.3" x2="657.7" y2="419.9" stroke="rgb(140,48,52)"/><line x1="691.6" y1="506.9" x2="719.9" y2="532.2" stroke="rgb(140,48,52)"/><line x1="521.5" y1="218.9" x2="519.5" y2="238.6" stroke="rgb(126,47,51)"/><line x1="418.4" y1="358.7" x2="436.4" y2="367.1" stroke="rgb(139,47,51)"/><line x1="789.9" y1="239.4" x2="801.7" y2="267.5" stroke="rgb(105,46,51)"/><line x1="754.2" y1="496.4" x2="785.4" y2="523.5" stroke="rgb(140,48,52)"/><line x1="791.7" y1="226.3" x2="806.9" y2="253.6" stroke="rgb(82,45,50)"/><line x1="860.6" y1="382.4" x2="860.8" y2="410.7" stroke="rgb(93,45,50)"/><line x1="488.8" y1="336.2" x2="484.4" y2="359.7" stroke="rgb(140,48,52)"/><line x1="521.5" y1="218.9" x2="490.8" y2="244.7" stroke="rgb(122,47,51)"/><line x1="542.4" y1="209.8" x2="521.5" y2="218.9" stroke="rgb(114,46,51)"/><line x1="376.3" y1="394.3" x2="376.9" y2="422.0" stroke="rgb(70,44,50)"/><line x1="478.3" y1="285.6" x2="460.8" y2="302.2" stroke="rgb(140,48,52)"/><line x1="498.7" y1="220.7" x2="477.6" y2="233.4" stroke="rgb(109,46,51)"/><line x1="680.2" y1="222.7" x2="716.8" y2="221.8" stroke="rgb(127,47,51)"/><line x1="725.6" y1="196.7" x2="752.1" y2="206.9" stroke="rgb(75,44,50)"/><line x1="814.5" y1="565.7" x2="813.4" y2="577.5" stroke="rgb(67,44,50)"/><line x1="519.5" y1="238.6" x2="490.8" y2="244.7" stroke="rgb(132,47,51)"/><line x1="691.8" y1="368.4" x2="718.3" y2="393.2" stroke="rgb(140,48,52)"/><line x1="424.3" y1="387.7" x2="448.3" y2="418.4" stroke="rgb(140,48,52)"/><line x1="568.3" y1="371.5" x2="604.9" y2="377.0" stroke="rgb(140,48,52)"/><line x1="784.8" y1="468.8" x2="796.8" y2="489.0" stroke="rgb(140,48,52)"/><line x1="452.3" y1="398.7" x2="479.2" y2="426.5" stroke="rgb(140,48,52)"/><line x1="676.2" y1="392.4" x2="718.3" y2="393.2" stroke="rgb(140,48,52)"/><line x1="638.4" y1="290.7" x2="664.3" y2="308.0" stroke="rgb(140,48,52)"/><line x1="851.6" y1="335.2" x2="848.7" y2="370.8" stroke="rgb(101,46,51)"/><line x1="716.5" y1="645.0" x2="749.3" y2="631.6" stroke="rgb(59,44,50)"/><line x1="846.0" y1="521.9" x2="813.4" y2="577.5" stroke="rgb(61,44,50)"/><line x1="681.2" y1="285.4" x2="716.2" y2="300.6" stroke="rgb(140,48,52)"/><line x1="667.7" y1="660.3" x2="666.0" y2="661.5" stroke="rgb(56,44,50)"/><line x1="575.5" y1="212.9" x2="565.5" y2="222.0" stroke="rgb(126,47,51)"/><line x1="504.2" y1="626.8" x2="522.4" y2="641.6" stroke="rgb(71,44,50)"/><line x1="525.4" y1="193.4" x2="508.0" y2="197.8" stroke="rgb(56,44,50)"/><line x1="618.4" y1="220.0" x2="591.7" y2="228.1" stroke="rgb(136,47,51)"/><line x1="681.2" y1="285.4" x2="717.4" y2="278.0" stroke="rgb(140,48,52)"/><line x1="513.6" y1="459.2" x2="498.3" y2="474.1" stroke="rgb(140,48,52)"/><line x1="531.9" y1="321.4" x2="488.8" y2="336.2" stroke="rgb(140,48,52)"/><line x1="866.5" y1="424.2" x2="871.8" y2="408.3" stroke="rgb(67,44,50)"/><line x1="556.1" y1="635.9" x2="522.4" y2="641.6" stroke="rgb(77,45,50)"/><line x1="401.6" y1="313.7" x2="389.6" y2="333.6" stroke="rgb(86,45,50)"/><line x1="549.7" y1="507.1" x2="526.9" y2="532.2" stroke="rgb(140,48,52)"/><line x1="858.9" y1="485.1" x2="865.3" y2="474.4" stroke="rgb(61,44,50)"/><line x1="410.4" y1="324.8" x2="401.3" y2="344.9" stroke="rgb(109,46,51)"/><line x1="703.8" y1="324.8" x2="737.5" y2="316.4" stroke="rgb(140,48,52)"/><line x1="777.7" y1="330.9" x2="804.1" y2="322.5" stroke="rgb(140,48,52)"/><line x1="702.0" y1="416.7" x2="684.4" y2="437.1" stroke="rgb(140,48,52)"/><line x1="624.6" y1="487.4" x2="605.6" y2="505.5" stroke="rgb(140,48,52)"/><line x1="530.6" y1="483.1" x2="526.9" y2="532.2" stroke="rgb(140,48,52)"/><line x1="376.9" y1="422.0" x2="376.5" y2="438.4" stroke="rgb(69,44,50)"/><line x1="750.1" y1="386.3" x2="774.0" y2="402.5" stroke="rgb(140,48,52)"/><line x1="515.2" y1="203.4" x2="521.5" y2="218.9" stroke="rgb(102,46,51)"/><line x1="840.8" y1="467.5" x2="858.9" y2="485.1" stroke="rgb(96,45,50)"/><line x1="590.6" y1="540.3" x2="584.1" y2="568.3" stroke="rgb(140,48,52)"/><line x1="794.9" y1="442.8" x2="784.8" y2="468.8" stroke="rgb(140,48,52)"/><line x1="611.8" y1="353.5" x2="604.9" y2="377.0" stroke="rgb(140,48,52)"/><line x1="492.6" y1="208.8" x2="483.9" y2="206.3" stroke="rgb(69,44,50)"/><line x1="631.7" y1="203.3" x2="652.0" y2="216.8" stroke="rgb(117,46,51)"/><line x1="591.7" y1="228.1" x2="576.0" y2="238.1" stroke="rgb(140,48,52)"/><line x1="395.9" y1="417.9" x2="402.4" y2="446.9" stroke="rgb(115,46,51)"/><line x1="448.4" y1="228.0" x2="438.4" y2="240.5" stroke="rgb(58,44,50)"/><line x1="548.6" y1="249.7" x2="567.8" y2="268.7" stroke="rgb(140,48,52)"/><line x1="492.4" y1="497.4" x2="513.3" y2="561.2" stroke="rgb(140,48,52)"/><line x1="631.4" y1="231.5" x2="615.1" y2="245.0" stroke="rgb(140,48,52)"/><line x1="376.5" y1="438.4" x2="390.7" y2="488.9" stroke="rgb(74,44,50)"/><line x1="546.2" y1="303.4" x2="531.9" y2="321.4" stroke="rgb(140,48,52)"/><line x1="709.7" y1="199.5" x2="725.6" y2="196.7" stroke="rgb(80,45,50)"/><line x1="837.7" y1="277.8" x2="832.5" y2="266.7" stroke="rgb(56,44,50)"/><line x1="424.6" y1="540.0" x2="437.1" y2="568.4" stroke="rgb(97,45,50)"/><line x1="770.4" y1="357.7" x2="784.4" y2="378.1" stroke="rgb(140,48,52)"/><line x1="860.7" y1="356.8" x2="860.6" y2="382.4" stroke="rgb(87,45,50)"/><line x1="863.9" y1="342.9" x2="867.5" y2="373.1" stroke="rgb(61,44,50)"/><line x1="537.4" y1="413.0" x2="558.5" y2="437.2" stroke="rgb(140,48,52)"/><line x1="678.1" y1="640.0" x2="716.5" y2="645.0" stroke="rgb(76,44,50)"/><line x1="437.1" y1="568.4" x2="487.2" y2="606.6" stroke="rgb(91,45,50)"/><line x1="746.3" y1="624.8" x2="749.3" y2="631.6" stroke="rgb(64,44,50)"/><line x1="584.1" y1="568.3" x2="541.5" y2="595.9" stroke="rgb(130,47,51)"/><line x1="584.5" y1="255.7" x2="567.8" y2="268.7" stroke="rgb(140,48,52)"/><line x1="865.3" y1="474.4" x2="846.0" y2="521.9" stroke="rgb(59,44,50)"/><line x1="648.4" y1="570.0" x2="606.5" y2="601.3" stroke="rgb(129,47,51)"/><line x1="611.6" y1="622.0" x2="556.1" y2="635.9" stroke="rgb(100,46,51)"/><line x1="619.3" y1="211.1" x2="652.0" y2="216.8" stroke="rgb(124,47,51)"/><line x1="652.0" y1="216.8" x2="631.4" y2="231.5" stroke="rgb(136,47,51)"/><line x1="615.4" y1="642.3" x2="653.4" y2="654.6" stroke="rgb(82,45,50)"/><line x1="659.2" y1="203.3" x2="680.5" y2="207.4" stroke="rgb(109,46,51)"/><line x1="680.5" y1="207.4" x2="680.2" y2="222.7" stroke="rgb(122,47,51)"/><line x1="819.3" y1="309.7" x2="821.3" y2="338.5" stroke="rgb(127,47,51)"/><line x1="815.5" y1="459.4" x2="821.3" y2="510.7" stroke="rgb(132,47,51)"/><line x1="589.6" y1="461.2" x2="624.6" y2="487.4" stroke="rgb(140,48,52)"/><line x1="576.0" y1="238.1" x2="584.5" y2="255.7" stroke="rgb(140,48,52)"/><line x1="801.7" y1="267.5" x2="797.3" y2="299.2" stroke="rgb(125,47,51)"/><line x1="454.3" y1="351.3" x2="436.4" y2="367.1" stroke="rgb(140,48,52)"/><line x1="510.1" y1="388.2" x2="515.1" y2="433.7" stroke="rgb(140,48,52)"/><line x1="774.0" y1="402.5" x2="801.6" y2="417.9" stroke="rgb(140,48,52)"/><line x1="754.2" y1="496.4" x2="719.9" y2="532.2" stroke="rgb(140,48,52)"/><line x1="447.1" y1="589.3" x2="487.2" y2="606.6" stroke="rgb(81,45,50)"/><line x1="710.0" y1="483.9" x2="754.2" y2="496.4" stroke="rgb(140,48,52)"/></g></g>
<path d="M424.8,504.0 L419.6,502.0 L414.6,500.1 L409.7,498.0 L405.1,496.0 L400.8,493.9 L396.6,491.7 L392.6,489.5 L388.9,487.3 L385.4,485.1 L382.2,482.8 L379.1,480.5 L376.3,478.1 L373.8,475.7 L371.5,473.3 L369.4,470.9 L367.6,468.5 L366.1,466.0 L364.8,463.6 L363.7,461.1 L362.9,458.6 L362.4,456.1 L362.1,453.6 L362.0,451.1 L362.2,448.6 L362.7,446.2 L363.4,443.7 L364.4,441.2 L365.6,438.7 L367.1,436.3 L368.8,433.8 L370.8,431.4 L373.1,429.0 L375.5,426.6 L378.2,424.3 L381.2,422.0 L384.4,419.7 L387.8,417.4 L391.4,415.2 L395.3,413.0 L399.4,410.8 L404.6,412.6 L400.6,414.7 L396.8,416.8 L393.2,418.9 L389.9,421.1 L386.7,423.3 L383.9,425.5 L381.2,427.7 L378.8,430.0 L376.6,432.3 L374.7,434.6 L373.0,437.0 L371.5,439.3 L370.3,441.7 L369.4,444.0 L368.7,446.4 L368.2,448.8 L368.0,451.2 L368.1,453.6 L368.3,456.0 L368.9,458.3 L369.7,460.7 L370.7,463.1 L372.0,465.4 L373.5,467.8 L375.3,470.1 L377.3,472.4 L379.5,474.7 L382.0,477.0 L384.7,479.2 L387.7,481.4 L390.9,483.6 L394.3,485.8 L397.9,487.9 L401.8,490.0 L405.9,492.0 L410.2,494.1 L414.7,496.0 L419.3,498.0 L424.2,499.8 L429.3,501.7 Z" fill="#f4f000"/>
<path d="M868.6,423.3 L872.9,427.0 L876.6,430.8 L879.7,434.5 L882.2,438.4 L884.0,442.3 L885.3,446.1 L885.9,450.0 L885.9,454.0 L885.3,457.9 L884.0,461.7 L882.2,465.6 L879.7,469.5 L876.6,473.2 L872.9,477.0 L868.6,480.7 L863.7,484.3 L858.3,487.8 L852.3,491.3 L845.7,494.6 L838.6,497.9 L831.0,501.0 L822.9,504.1 L814.4,507.0 L805.3,509.7 L795.9,512.4 L786.0,514.9 L775.8,517.2 L765.2,519.4 L754.2,521.4 L742.9,523.3 L731.4,525.0 L719.6,526.5 L707.6,527.8 L695.3,529.0 L682.9,529.9 L670.4,530.7 L657.7,531.3 L645.0,531.7 L632.2,532.0 L619.4,532.0 L619.5,528.5 L632.0,528.5 L644.5,528.3 L657.0,527.9 L669.3,527.3 L681.6,526.5 L693.7,525.6 L705.7,524.5 L717.4,523.2 L728.9,521.8 L740.2,520.2 L751.2,518.4 L761.9,516.4 L772.3,514.4 L782.3,512.1 L792.0,509.7 L801.2,507.2 L810.0,504.6 L818.4,501.8 L826.3,498.9 L833.7,495.9 L840.6,492.8 L847.0,489.6 L852.9,486.3 L858.2,482.9 L863.0,479.4 L867.2,475.9 L870.8,472.3 L873.8,468.7 L876.3,465.0 L878.1,461.3 L879.3,457.6 L879.9,453.9 L879.9,450.1 L879.3,446.4 L878.1,442.7 L876.3,439.0 L873.8,435.3 L870.8,431.7 L867.2,428.1 L863.0,424.6 Z" fill="#f4f000"/>
<path d="M620,534 A263,82 0 0 0 884,459" fill="none" stroke="#f0f000" stroke-width="3" stroke-dasharray="1,1.2"/>
<g fill="none" stroke="#f0f000" stroke-width="1.3"><path d="M429.0,502.4 l6,2 l-6,2" /><path d="M438.0,505.3 l6,2 l-6,2" /><path d="M447.0,507.8 l6,2 l-6,2" /><path d="M456.0,510.1 l6,2 l-6,2" /><path d="M466.0,512.5 l6,2 l-6,2" /><path d="M477.0,514.8 l6,2 l-6,2" /><path d="M489.0,517.1 l6,2 l-6,2" /><path d="M510.0,520.5 l6,2 l-6,2" /><path d="M552.0,525.7 l-6,2 l6,2" /><path d="M570.0,527.1 l-6,2 l6,2" /><path d="M584.0,527.9 l-6,2 l6,2" /><path d="M593.0,528.3 l-6,2 l6,2" /><path d="M601.0,528.6 l-6,2 l6,2" /><path d="M609.0,528.8 l-6,2 l6,2" /><path d="M616.0,528.9 l-6,2 l6,2" /></g>
<g stroke="#252540" stroke-width="1.2" opacity="0.8"><path d="M389,414 L398,448"/><path d="M394,410 L405,452"/><path d="M866,428 L858,462"/><path d="M872,430 L863,470"/></g>
<g fill="#b03434" opacity="0.9"><path d="M604,240 L620,249 L617,253 Z"/><path d="M623,238 L630,252 L624,254 Z"/><path d="M646,240 L641,257 L635,254 Z"/><path d="M660,247 L650,259 L646,256 Z"/></g>
<path d="M598,252 C615,262 640,266 660,258 C668,255 676,250 684,247" fill="none" stroke="#202038" stroke-width="1.5" opacity="0.8"/>
<path d="M612,262 C630,268 650,266 668,259" fill="none" stroke="#202038" stroke-width="1.2" opacity="0.6"/>
<g fill="none" stroke="#e25232" stroke-width="1.3"><path d="M679,242 L679,141 L689,141 L689,242"/><path d="M734,271 L734,149 L748,149 L748,271"/><path d="M760,292 L760,154 L773,154 L773,292"/></g>
<g fill="none" stroke="#e070b0" stroke-width="1.2" stroke-dasharray="2,1"><path d="M493.5,518 L493.5,282 L502,282 L502,518"/><path d="M531,525 L531,288 L550,288 L550,525"/></g>
<line x1="262" y1="180.8" x2="1016" y2="283.8" stroke="#ff1a1a" stroke-width="1.25"/>
<line x1="630" y1="79" x2="627" y2="254" stroke="#2020ff" stroke-width="1.4"/>
<line x1="623.5" y1="384" x2="621.8" y2="531" stroke="#3040ff" stroke-width="1" stroke-dasharray="2,2" opacity="0.8"/><line x1="621.8" y1="531" x2="620" y2="672" stroke="#2020ff" stroke-width="1.5"/>
<line x1="456" y1="361" x2="799" y2="99" stroke="#129012" stroke-width="1.6"/>
</svg>
</body></html>
